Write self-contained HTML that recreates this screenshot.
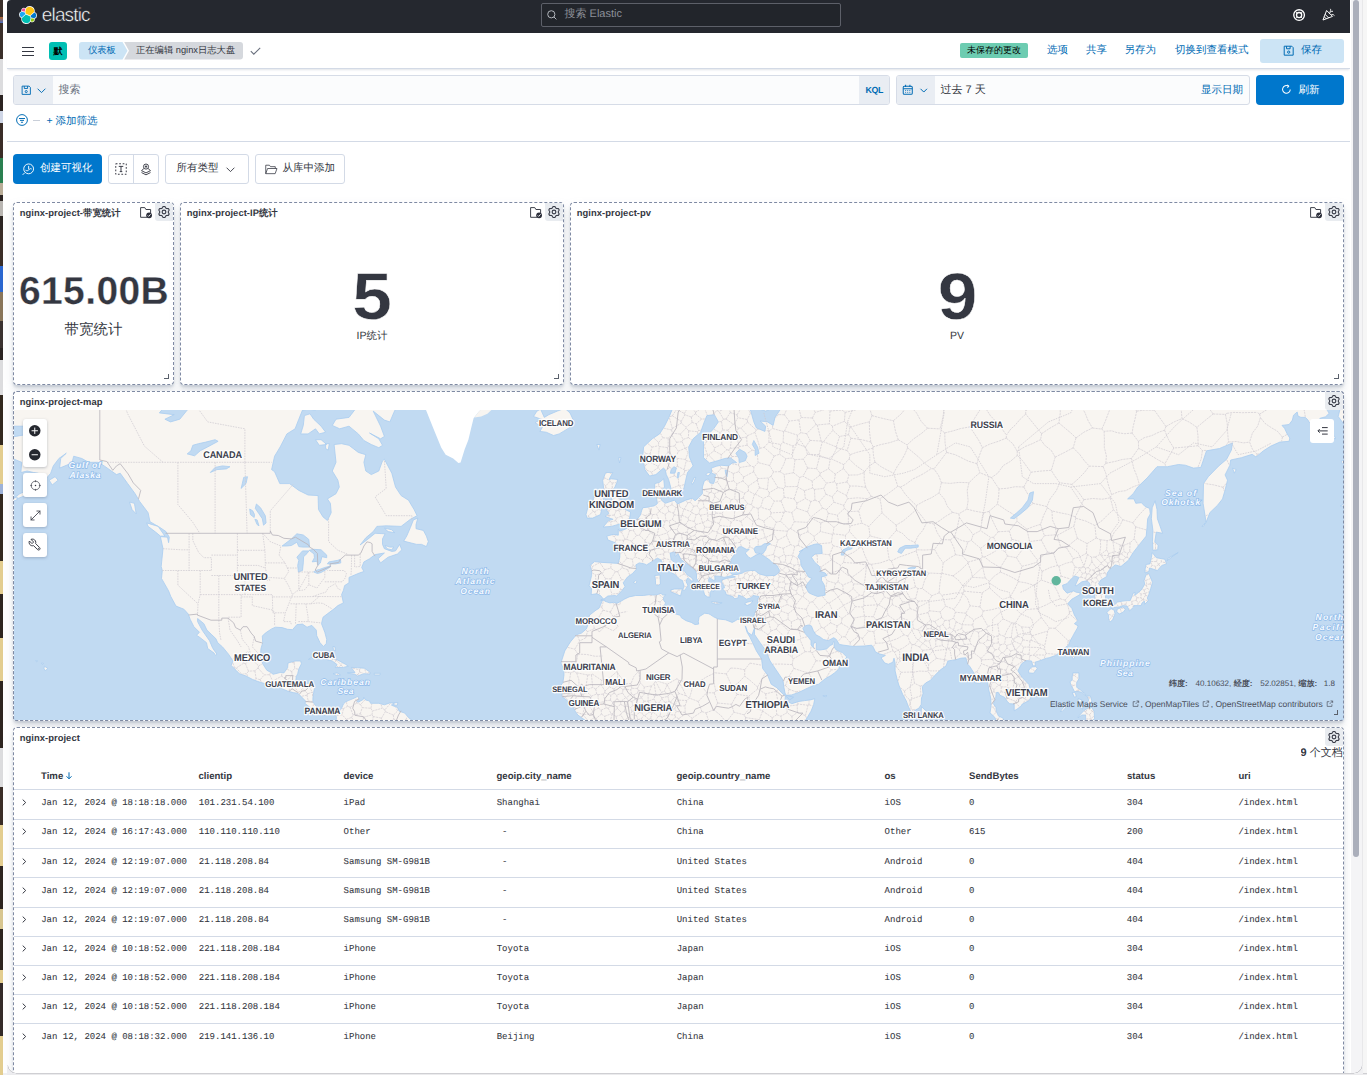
<!DOCTYPE html>
<html lang="zh">
<head>
<meta charset="utf-8">
<title>nginx日志大盘 - Elastic</title>
<style>
*{box-sizing:border-box;margin:0;padding:0}
html,body{width:1367px;height:1075px;overflow:hidden;background:#fff}
body{position:relative;font-family:"Liberation Sans",sans-serif;color:#343741;font-size:10.5px;line-height:1;text-rendering:geometricPrecision}
svg text{text-rendering:geometricPrecision}
.abs{position:absolute;white-space:nowrap}
.k{display:inline-block;width:1em;text-align:center;font-style:normal}
.blue{color:#006bb4}
svg{display:block;overflow:visible}
#strip{position:absolute;left:0;top:0;width:3px;height:1075px;background:linear-gradient(#3a2f2a 0px,#3a2f2a 17px,#b5652a 17px,#4a6fc0 23px,#3a2f2a 23px,#3a2f2a 59px,#dcdcde 59px,#dcdcde 95px,#2b2321 95px,#2b2321 111px,#cfd6e6 111px,#cfd6e6 123px,#3a2d27 123px,#3a2d27 158px,#2a8050 158px,#2a8050 183px,#b9ad98 183px,#b9ad98 195px,#2b2422 195px,#2b2422 201px,#b9b6b2 201px,#b9b6b2 216px,#2b2422 216px,#2b2422 230px,#3a2d27 230px,#3a2d27 266px,#2a66cf 266px,#2a66cf 292px,#8a765a 292px,#8a765a 321px,#3b3230 321px,#3b3230 348px,#2b2422 348px,#2b2422 360px,#dcdcde 360px,#dcdcde 395px,#33291f 395px,#33291f 445px,#e3cd8f 445px,#e3cd8f 484px,#9db2d8 484px,#9db2d8 494px,#33291f 494px,#33291f 561px,#e3cd8f 561px,#e3cd8f 594px,#2e2520 594px,#2e2520 638px,#e3cd8f 638px,#e3cd8f 681px,#2e2520 681px,#2e2520 748px,#dcdcde 748px,#dcdcde 787px,#3a2d27 787px,#3a2d27 825px,#e3cd8f 825px,#e3cd8f 866px,#2e2520 866px,#2e2520 909px,#d8c690 909px,#d8c690 929px,#2e2520 929px,#2e2520 970px,#e3cd8f 970px,#e3cd8f 983px,#332a28 983px,#332a28 1036px,#e3cd8f 1036px,#e3cd8f 1075px)}
#hdr{position:absolute;left:7px;top:0;width:1343px;height:33px;background:#25282f;border-top-left-radius:4px}
#nav{position:absolute;left:7px;top:33px;width:1343px;height:36px;background:#fff;border-bottom:1px solid #d3dae6;box-shadow:0 2px 2px -1px rgba(152,162,179,.3)}
#main{position:absolute;left:7px;top:68px;width:1343px;height:1007px;background:#fafbfd;z-index:-1}
#qline{position:absolute;left:7px;top:141px;width:1343px;height:1px;background:#d3dae6}
#sb{position:absolute;left:1350px;top:0;width:12.5px;height:1075px;background:#f4f4f6;border-left:1px solid #fff}
#wr{position:absolute;left:1362px;top:0;width:5px;height:1075px;background:#f6f6f6;border-left:1px solid #e8e8ea}
#wb{position:absolute;left:7px;top:1073px;width:1360px;height:2px;background:#ebebed;border-top:1px solid #cfcfd3}
#wbl{position:absolute;left:3px;top:1073px;width:4px;height:2px;background:#efeff1}
.wc{position:absolute;top:1065px;width:8.5px;height:8.5px}
#sbt{position:absolute;left:1353px;top:0;width:6px;height:857px;background:#abafbb;border-radius:3px}
.panel{position:absolute;background:#fff;border:1px dashed #7f8aa3;border-radius:4px;box-shadow:0 6px 12px -1px rgba(152,162,179,.25),0 4px 4px -1px rgba(152,162,179,.25),0 2px 2px 0 rgba(152,162,179,.25)}
.ptitle{position:absolute;left:5.8px;top:4.5px;font-weight:bold;font-size:9.4px;letter-spacing:.05px;color:#343741;white-space:nowrap}
.gearbg{position:absolute;top:0;width:18px;height:17.7px;background:#e9ecf0;border-radius:0 3px 0 3px}
.ico{position:absolute}
.rz{position:absolute;width:5px;height:5px;border-right:1.3px solid #5a606b;border-bottom:1.3px solid #5a606b}
.big{position:absolute;font-weight:bold;color:#343741;white-space:nowrap;text-align:center;-webkit-text-stroke:.5px #fff}
.inp{position:absolute;background:#fbfcfd;border:1px solid #d6dce7;border-radius:3px}
.btnw{position:absolute;background:#fff;border:1px solid #d3dae6;border-radius:3px}
table{border-collapse:collapse}
.th{position:absolute;top:771.5px;font-weight:bold;font-size:9.6px;white-space:nowrap;color:#343741}
.row{position:absolute;left:14px;width:1329px;height:1px;background:#d3dae6}
.c{position:absolute;font-family:"Liberation Mono",monospace;font-size:9px;white-space:nowrap;color:#343741;-webkit-text-stroke:.07px #343741}
.chev{position:absolute;left:22px}
#mapwrap{position:absolute;left:14px;top:410px;width:1330px;height:310px;overflow:hidden;background:#c1daf2}
.cl{font-family:"Liberation Sans",sans-serif;font-weight:bold;fill:#3c3f4d;text-anchor:middle;paint-order:stroke;stroke:rgba(255,255,255,.92);stroke-width:2.6px;stroke-linejoin:round;letter-spacing:-.1px}
.ol{font-family:"Liberation Sans",sans-serif;font-style:italic;font-weight:bold;fill:#f4f9ff;text-anchor:middle;paint-order:stroke;stroke:#8fbbea;stroke-width:1.3px;letter-spacing:1px}
.mc{top:679px;font-size:8.05px;line-height:9px;color:#4a4e5a}
.ma{top:699px;font-size:8.4px;line-height:10px;color:#4a4e5a}
.mbtn{position:absolute;left:35px;width:24px;background:#fff;border-radius:3px;box-shadow:0 1px 3px rgba(80,90,110,.35)}
</style>
</head>
<body>
<div id="strip"></div>
<div id="main"></div>

<!-- ================= dark header ================= -->
<div id="hdr"></div>
<svg class="ico" style="left:19px;top:6px" width="18" height="18" viewBox="0 0 32 32">
  <path d="M32 16.77a6.3 6.3 0 0 0-4.2-5.96 9.1 9.1 0 0 0 .17-1.72A9.1 9.1 0 0 0 11.5 3.8 4.83 4.83 0 0 0 4 7.6c0 .6.1 1.16.3 1.7A6.36 6.36 0 0 0 0 15.26a6.32 6.32 0 0 0 4.2 5.98 9 9 0 0 0-.15 1.7 9.07 9.07 0 0 0 16.45 5.28 4.8 4.8 0 0 0 7.5-3.82c0-.6-.1-1.16-.3-1.7A6.36 6.36 0 0 0 32 16.77" fill="#fff"/>
  <path d="M12.58 13.79l7 3.2 7.07-6.2a7.85 7.85 0 0 0-14.2-5.9l-1.17 6.1 1.3 2.8z" fill="#fec514"/>
  <path d="M5.33 21.22a7.96 7.96 0 0 0 14.3 5.95l1.17-6.05-1.56-2.97-7.03-3.2-6.88 6.27z" fill="#00bfb3"/>
  <path d="M5.29 9.1l4.8 1.14 1.05-5.46a3.8 3.8 0 0 0-5.85 4.32" fill="#f04e98"/>
  <path d="M4.87 10.24a5.35 5.35 0 0 0-.05 10.1l6.73-6.08-1.23-2.64-5.45-1.38z" fill="#1ba9f5"/>
  <path d="M20.87 27.18a3.78 3.78 0 0 0 5.84-4.3l-4.8-1.12-1.04 5.42z" fill="#93c90e"/>
  <path d="M21.85 20.5l5.28 1.23a5.38 5.38 0 0 0 .06-10.12l-6.9 6.05 1.56 2.84z" fill="#07c"/>
</svg>
<div class="abs" style="left:41.8px;top:5.5px;font-size:19px;color:#fff;letter-spacing:-.85px;line-height:20px;-webkit-text-stroke:.45px #25282f">elastic</div>
<div class="abs" style="left:541px;top:3px;width:300px;height:24px;border:1px solid #5d6069;border-radius:2px;background:#22252b"></div>
<svg class="ico" style="left:546.5px;top:9.5px" width="10" height="10" viewBox="0 0 10 10" fill="none" stroke="#c2c5cc" stroke-width=".9"><circle cx="4.3" cy="4.3" r="3.6"/><path d="M6.9 6.9l2.5 2.5"/></svg>
<div class="abs" style="left:564.5px;top:8.5px;font-size:11px;color:#8d9099"><i class="k">搜</i><i class="k">索</i> Elastic</div>
<svg class="ico" style="left:1292.9px;top:8.9px" width="12.2" height="12.2" viewBox="0 0 16 16" fill="none" stroke="#fff" stroke-width="1.75"><circle cx="8" cy="8" r="7"/><circle cx="8" cy="8" r="3.4"/><path d="M3.1 3.1l2.500 2.500M12.9 3.1l-2.500 2.500M3.1 12.9l2.500-2.500M12.9 12.9l-2.500-2.500" stroke-width="1.1"/></svg>
<svg class="ico" style="left:1322px;top:8px" width="13" height="13" viewBox="0 0 16 16" fill="none" stroke="#fff" stroke-width="1.2" stroke-linecap="round" stroke-linejoin="round"><path d="M5.5 3.5L1.2 14.8l11.3-4.3z"/><path d="M4 8l4 4M3 11l2 2"/><path d="M9 7c.5-2 2-3 4-3M10.5 1.5c.5 1 .3 2-.5 3M12 8c1-.3 2 0 3 1"/></svg>

<!-- ================= nav bar ================= -->
<div id="nav"></div>
<div class="abs" style="left:22px;top:46.6px;width:12px;height:1.3px;background:#343741;box-shadow:0 4px 0 #343741,0 8px 0 #343741"></div>
<div class="abs" style="left:49px;top:41.5px;width:18px;height:18px;border-radius:3px;background:#00bfb3;color:#000;font-size:9px;font-weight:bold;text-align:center;line-height:18px"><i class="k">默</i></div>
<svg class="ico" style="left:79px;top:42px" width="166" height="17.5" viewBox="0 0 166 17.5">
  <path d="M45.2 0H161a3 3 0 0 1 3 3v11.5a3 3 0 0 1-3 3H45.200l4.800-8.750z" fill="#d5d8dd"/>
  <path d="M3 0H43.5l5 8.750-5 8.750H3a3 3 0 0 1-3-3V3a3 3 0 0 1 3-3z" fill="#cce4f5"/>
</svg>
<div class="abs blue" style="left:88px;top:45px;font-size:9.3px;line-height:11px"><i class="k">仪</i><i class="k">表</i><i class="k">板</i></div>
<div class="abs" style="left:136px;top:45px;font-size:9.3px;line-height:11px;color:#343741"><i class="k">正</i><i class="k">在</i><i class="k">编</i><i class="k">辑</i> nginx<i class="k">日</i><i class="k">志</i><i class="k">大</i><i class="k">盘</i></div>
<svg class="ico" style="left:249.5px;top:47px" width="11" height="8" viewBox="0 0 11 8" fill="none" stroke="#69707d" stroke-width="1.1"><path d="M.8 4.2l3 3L10.2.8"/></svg>
<div class="abs" style="left:960px;top:43px;width:68px;height:14.5px;border-radius:2px;background:#6dccb1;color:#000;font-size:9px;line-height:14.5px;text-align:center"><i class="k">未</i><i class="k">保</i><i class="k">存</i><i class="k">的</i><i class="k">更</i><i class="k">改</i></div>
<div class="abs blue" style="left:1047px;top:43.5px;font-size:10.5px;line-height:12px"><i class="k">选</i><i class="k">项</i></div>
<div class="abs blue" style="left:1086px;top:43.5px;font-size:10.5px;line-height:12px"><i class="k">共</i><i class="k">享</i></div>
<div class="abs blue" style="left:1124.5px;top:43.5px;font-size:10.5px;line-height:12px"><i class="k">另</i><i class="k">存</i><i class="k">为</i></div>
<div class="abs blue" style="left:1175px;top:43.5px;font-size:10.5px;line-height:12px"><i class="k">切</i><i class="k">换</i><i class="k">到</i><i class="k">查</i><i class="k">看</i><i class="k">模</i><i class="k">式</i></div>
<div class="abs" style="left:1260px;top:38.5px;width:84px;height:24px;border-radius:3px;background:#cce4f5"></div>
<svg class="ico" style="left:1283.2px;top:44.9px" width="11.4" height="11.4" viewBox="0 0 16 16" fill="none" stroke="#006bb4" stroke-width="1.4"><path d="M1.7 1.7h10.6l2 2v10.6H1.7z"/><path d="M5 1.7v3.6h5V1.7"/><circle cx="8" cy="10" r="1.6"/></svg>
<div class="abs blue" style="left:1301px;top:43.5px;font-size:10.5px;line-height:12px"><i class="k">保</i><i class="k">存</i></div>

<!-- ================= query bar ================= -->
<div class="inp" style="left:13px;top:75px;width:877px;height:30px"></div>
<div class="abs" style="left:14px;top:76px;width:39px;height:28px;background:#e9edf3;border-radius:2px 0 0 2px"></div>
<svg class="ico" style="left:20.5px;top:84.5px" width="10.5" height="10.5" viewBox="0 0 16 16" fill="none" stroke="#006bb4" stroke-width="1.4"><path d="M1.7 1.7h10.6l2 2v10.6H1.7z"/><path d="M5 1.7v3.6h5V1.7"/><circle cx="8" cy="10" r="1.6"/></svg>
<svg class="ico" style="left:37px;top:87.5px" width="9" height="5.5" viewBox="0 0 9 5.5" fill="none" stroke="#006bb4" stroke-width=".95"><path d="M.6.7l3.9 3.9L8.4.7"/></svg>
<div class="abs" style="left:58.5px;top:83.5px;font-size:11px;line-height:13px;color:#69707d"><i class="k">搜</i><i class="k">索</i></div>
<div class="abs" style="left:859px;top:76px;width:30px;height:28px;background:#e9edf3;border-radius:0 2px 2px 0"></div>
<div class="abs blue" style="left:865.5px;top:85.7px;font-size:8.8px;font-weight:bold;letter-spacing:-.35px">KQL</div>
<div class="inp" style="left:896px;top:75px;width:354px;height:30px"></div>
<div class="abs" style="left:897px;top:76px;width:38px;height:28px;background:#e9edf3;border-radius:2px 0 0 2px"></div>
<svg class="ico" style="left:902px;top:84px" width="11.5" height="11.5" viewBox="0 0 16 16" fill="none" stroke="#006bb4" stroke-width="1.4"><rect x="1.7" y="3" width="12.6" height="11.3" rx="1.5"/><path d="M1.7 6.5h12.6M5 1v3.2M11 1v3.2"/><path d="M4.5 9h1.2M7.4 9h1.2M10.3 9h1.2M4.5 11.6h1.2M7.4 11.6h1.2M10.3 11.6h1.2" stroke-width="1.3"/></svg>
<svg class="ico" style="left:920px;top:88px" width="7.5" height="5" viewBox="0 0 9 5.5" fill="none" stroke="#006bb4" stroke-width="1.2"><path d="M.6.7l3.9 3.9L8.4.7"/></svg>
<div class="abs" style="left:940.5px;top:84px;font-size:11px;line-height:13px;color:#343741"><i class="k">过</i><i class="k">去</i> 7 <i class="k">天</i></div>
<div class="abs blue" style="left:1201px;top:84px;font-size:10.5px;line-height:13px"><i class="k">显</i><i class="k">示</i><i class="k">日</i><i class="k">期</i></div>
<div class="abs" style="left:1256px;top:74.5px;width:88px;height:30.5px;border-radius:4px;background:#0077cc"></div>
<svg class="ico" style="left:1280.8px;top:84.3px" width="10.8" height="10.8" viewBox="0 0 16 16" fill="none" stroke="#fff" stroke-width="1.5"><path d="M13.7 8A5.7 5.7 0 1 1 10.9 3.1"/><path d="M9.2 1.2l2.3 2-2 2.3" stroke-linejoin="round"/></svg>
<div class="abs" style="left:1298.5px;top:83.5px;font-size:10.5px;line-height:13px;color:#fff"><i class="k">刷</i><i class="k">新</i></div>
<svg class="ico" style="left:16px;top:114px" width="12" height="12" viewBox="0 0 16 16" fill="none" stroke="#006bb4" stroke-width="1.3"><circle cx="8" cy="8" r="7.2"/><path d="M4 6h8M5.3 8.5h5.4M6.6 11h2.8"/></svg>
<div class="abs" style="left:33px;top:119.5px;width:7px;height:1px;background:#c9cfd9"></div>
<div class="abs blue" style="left:46.5px;top:115px;font-size:10.5px;line-height:13px">+ <i class="k">添</i><i class="k">加</i><i class="k">筛</i><i class="k">选</i></div>
<div id="qline"></div>

<!-- ================= toolbar ================= -->
<div class="abs" style="left:13px;top:154px;width:89px;height:30px;border-radius:4px;background:#0077cc"></div>
<svg class="ico" style="left:22px;top:162.5px" width="12.5" height="12.5" viewBox="0 0 16 16" fill="none" stroke="#fff" stroke-width="1.2"><circle cx="8.5" cy="7.5" r="6.3"/><path d="M3.6 12.4L.8 15.2"/><path d="M5 9.5c1.5.8 3 .5 4-1s2-1.5 3-1M8.5 4.2v3.3" stroke-linecap="round"/></svg>
<div class="abs" style="left:40px;top:160.5px;font-size:10.5px;line-height:14px;color:#fff"><i class="k">创</i><i class="k">建</i><i class="k">可</i><i class="k">视</i><i class="k">化</i></div>
<div class="btnw" style="left:108px;top:154px;width:50.5px;height:30px"></div>
<div class="abs" style="left:133px;top:155px;width:1px;height:28px;background:#d3dae6"></div>
<svg class="ico" style="left:115px;top:163px" width="12" height="12" viewBox="0 0 16 16" fill="none" stroke="#343741" stroke-width="1.3"><path d="M1 1h14v14H1z" stroke-dasharray="2.3 2.3"/><path d="M5 4.5h6M8 4.5v7M6.3 11.5h3.4"/></svg>
<svg class="ico" style="left:140px;top:162.5px" width="12" height="13" viewBox="0 0 16 17" fill="none" stroke="#343741" stroke-width="1.2"><circle cx="8" cy="4.6" r="3.4"/><circle cx="8" cy="4.6" r="1" fill="#343741"/><path d="M5.2 7.2L2 10l6 3 6-3-3.2-2.8M2 12.6l6 3 6-3"/></svg>
<div class="btnw" style="left:165px;top:154px;width:83.5px;height:30px"></div>
<div class="abs" style="left:176.5px;top:160.5px;font-size:10.5px;line-height:14px"><i class="k">所</i><i class="k">有</i><i class="k">类</i><i class="k">型</i></div>
<svg class="ico" style="left:226px;top:166.5px" width="9" height="5.5" viewBox="0 0 9 5.5" fill="none" stroke="#343741" stroke-width=".9"><path d="M.6.7l3.9 3.9L8.4.7"/></svg>
<div class="btnw" style="left:255px;top:154px;width:90px;height:30px"></div>
<svg class="ico" style="left:264.5px;top:163.5px" width="12.5" height="10.5" viewBox="0 0 17 14" fill="none" stroke="#343741" stroke-width="1.05" stroke-linejoin="round"><path d="M1 13V1.5h5l1.5 2H14V6"/><path d="M1 13l2.5-7H16.3l-2.5 7z"/></svg>
<div class="abs" style="left:282.5px;top:160.5px;font-size:10.5px;line-height:14px"><i class="k">从</i><i class="k">库</i><i class="k">中</i><i class="k">添</i><i class="k">加</i></div>

<!-- ================= metric panels ================= -->
<div class="panel" style="left:13px;top:202px;width:161px;height:183px">
  <div class="ptitle">nginx-project-<i class="k">带</i><i class="k">宽</i><i class="k">统</i><i class="k">计</i></div>
  <div class="gearbg" style="left:141px"></div>
</div>
<div class="panel" style="left:180px;top:202px;width:384px;height:183px">
  <div class="ptitle">nginx-project-IP<i class="k">统</i><i class="k">计</i></div>
  <div class="gearbg" style="left:364px"></div>
</div>
<div class="panel" style="left:570px;top:202px;width:774px;height:183px">
  <div class="ptitle">nginx-project-pv</div>
  <div class="gearbg" style="left:754px"></div>
</div>
<svg width="0" height="0" style="position:absolute"><defs>
  <g id="gear" fill="none" stroke="#3a3d49" stroke-width="1.1" stroke-linejoin="round"><path d="M11.33 7.00L11.33 6.70L11.34 6.39L11.47 6.05L11.90 5.60L12.13 5.13L12.07 4.74L11.92 4.39L11.72 4.05L11.49 3.74L11.18 3.49L10.66 3.46L10.06 3.60L9.70 3.55L9.43 3.40L9.17 3.25L8.90 3.10L8.64 2.94L8.41 2.65L8.23 2.06L7.95 1.62L7.58 1.48L7.19 1.43L6.81 1.43L6.42 1.48L6.05 1.62L5.77 2.06L5.59 2.65L5.36 2.94L5.10 3.10L4.84 3.25L4.57 3.40L4.30 3.55L3.94 3.60L3.34 3.46L2.82 3.49L2.51 3.74L2.28 4.05L2.08 4.39L1.93 4.74L1.87 5.13L2.10 5.60L2.53 6.05L2.66 6.39L2.67 6.70L2.67 7.00L2.67 7.30L2.66 7.61L2.53 7.95L2.10 8.40L1.87 8.87L1.93 9.26L2.08 9.61L2.28 9.95L2.51 10.26L2.82 10.51L3.34 10.54L3.94 10.40L4.30 10.45L4.57 10.60L4.83 10.75L5.10 10.90L5.36 11.06L5.59 11.35L5.77 11.94L6.05 12.38L6.42 12.52L6.81 12.57L7.19 12.57L7.58 12.52L7.95 12.38L8.23 11.94L8.41 11.35L8.64 11.06L8.90 10.90L9.17 10.75L9.43 10.60L9.70 10.45L10.06 10.40L10.66 10.54L11.18 10.51L11.49 10.26L11.72 9.95L11.92 9.61L12.07 9.26L12.13 8.87L11.90 8.40L11.47 7.95L11.34 7.61L11.33 7.30Z"/><circle cx="7" cy="7" r="1.85" stroke-width="1.15"/></g>
  <g id="fchk" fill="none" stroke="#343741" stroke-width=".95" stroke-linejoin="round"><path d="M7.3 10.3H.6V.6h4.2l1.1 1.9h4.7v4"/><circle cx="9.1" cy="8.3" r="2.9" fill="#2b2e3a" stroke="none"/><path d="M7.7 8.4l1 1 1.9-2.1" stroke="#fff" stroke-width=".9"/></g>
</defs></svg>
<svg class="ico" style="left:140.1px;top:206.7px" width="12" height="12" viewBox="0 0 12 12"><use href="#fchk"/></svg>
<svg class="ico" style="left:157.1px;top:205.0px" width="14" height="14" viewBox="0 0 14 14"><use href="#gear"/></svg>
<svg class="ico" style="left:530.1px;top:206.7px" width="12" height="12" viewBox="0 0 12 12"><use href="#fchk"/></svg>
<svg class="ico" style="left:547.1px;top:205.0px" width="14" height="14" viewBox="0 0 14 14"><use href="#gear"/></svg>
<svg class="ico" style="left:1310.1px;top:206.7px" width="12" height="12" viewBox="0 0 12 12"><use href="#fchk"/></svg>
<svg class="ico" style="left:1327.1px;top:205.0px" width="14" height="14" viewBox="0 0 14 14"><use href="#gear"/></svg>
<div class="rz" style="left:164px;top:373.5px"></div>
<div class="rz" style="left:554px;top:373.5px"></div>
<div class="rz" style="left:1334px;top:373.5px"></div>

<div class="big" style="left:14px;top:269.5px;width:159px;font-size:39px;line-height:44px;letter-spacing:.4px;padding-left:1px;-webkit-text-stroke:.3px #fff">615.00B</div>
<div class="abs" style="left:14px;top:321.5px;width:159px;text-align:center;font-size:14.5px;line-height:17px"><i class="k">带</i><i class="k">宽</i><i class="k">统</i><i class="k">计</i></div>
<div class="big" style="left:181px;top:257.5px;width:382px;font-size:66px;line-height:76px;transform:scaleX(1.08)">5</div>
<div class="abs" style="left:181px;top:329.500px;width:382px;text-align:center;font-size:10.500px;line-height:13px">IP<i class="k">统</i><i class="k">计</i></div>
<div class="big" style="left:571.500px;top:257.5px;width:771px;font-size:66px;line-height:76px;transform:scaleX(1.08)">9</div>
<div class="abs" style="left:571.500px;top:329.500px;width:771px;text-align:center;font-size:10.500px;line-height:13px">PV</div>

<!-- ================= map panel ================= -->
<div class="panel" style="left:13px;top:391px;width:1331px;height:330px">
  <div class="ptitle">nginx-project-map</div>
  <div class="gearbg" style="left:1311px"></div>
</div>
<svg class="ico" style="left:1327.1px;top:394.0px" width="14" height="14" viewBox="0 0 14 14"><use href="#gear"/></svg>
<div id="mapwrap">
<svg id="mapsvg" width="1330" height="310" viewBox="0 0 1330 310">
<rect width="1330" height="310" fill="#c1daf2"/>
<defs><g id="world">
<path d="M-15.0 6.5L-7.2 -25.3L27.7 -51.5L85.8 -32.6L134.1 -36.9L182.5 -21.2L208.5 -16.2L256.9 -16.2L282.9 -26.3L292.2 -26.3L305.3 -21.2L307.1 -11.2L301.5 0.1L294.1 -0.8L288.5 0.1L284.8 9.2L281.1 18.8L272.9 23.9L266.2 36.9L260.6 46.2L257.6 59.6L260.6 61.7L265.8 73.6L275.5 73.6L284.8 80.4L294.1 85.0L304.1 85.6L304.5 99.6L309.0 106.9L313.4 110.5L317.2 102.7L316.4 93.3L313.4 88.9L322.0 83.7L325.3 77.0L323.9 70.2L318.3 61.0L322.0 52.3L320.1 34.5L327.6 33.7L335.0 35.3L344.3 42.4L351.8 44.7L349.9 52.3L351.8 61.0L357.3 64.6L364.8 61.0L368.5 50.8L370.4 49.3L377.8 63.2L381.5 77.0L387.1 85.6L394.5 90.2L400.1 99.6L403.1 105.7L396.4 109.3L387.1 116.4L372.2 115.8L362.9 116.4L359.2 121.6L351.8 127.8L346.2 134.9L353.6 129.4L361.1 123.3L371.1 123.8L368.5 128.9L368.5 134.4L370.4 138.7L377.8 141.4L381.5 140.9L385.6 134.4L387.8 139.8L383.4 144.0L374.1 147.2L366.6 152.9L364.0 148.8L370.4 143.0L361.1 144.6L355.5 148.8L349.9 151.9L347.7 157.5L349.9 161.5L345.4 163.0L335.0 167.4L335.0 172.8L330.6 175.6L329.4 180.4L327.6 184.6L329.4 192.9L323.9 195.6L320.1 198.8L313.1 204.1L309.0 207.2L307.5 213.7L310.8 222.3L312.7 229.4L312.3 233.6L309.4 236.4L306.0 232.7L302.7 225.6L302.3 220.1L297.8 215.4L293.0 217.2L288.5 214.1L282.9 214.6L278.5 219.7L273.6 219.3L268.1 217.6L261.4 217.2L257.6 218.9L251.3 223.1L248.3 226.1L248.7 232.7L246.9 238.9L246.5 247.8L248.7 253.8L252.8 260.2L256.9 262.5L259.1 264.3L266.2 262.5L269.9 262.9L273.6 257.8L274.0 253.0L281.1 251.0L286.7 251.0L287.4 253.8L284.8 259.0L283.7 263.7L282.2 266.8L281.8 270.7L279.6 273.0L284.8 273.4L290.4 273.4L296.0 273.4L300.8 276.5L299.7 282.3L298.9 288.0L298.9 291.8L301.5 295.6L305.3 299.3L309.0 300.1L313.1 298.2L318.3 297.8L322.4 300.5L324.2 303.1L327.6 298.2L329.4 294.0L331.7 291.8L334.3 290.6L342.5 287.2L343.6 286.1L345.1 289.1L342.8 291.4L344.3 292.2L349.2 289.5L349.9 287.2L351.4 289.9L355.5 291.0L356.6 293.3L364.8 293.3L370.4 294.8L375.9 292.9L379.7 292.9L377.4 295.2L383.4 297.4L385.2 301.2L390.8 303.1L394.5 307.6L398.3 310.6L405.7 325.5L320.1 325.5L322.4 308.0L322.0 305.0L319.4 302.0L314.6 299.3L311.2 305.7L307.1 304.6L302.3 302.3L299.3 301.2L294.8 296.3L291.1 293.7L291.5 291.0L286.7 286.1L284.1 283.4L279.2 282.6L273.6 281.1L267.3 278.4L262.5 272.6L258.0 271.9L251.3 273.8L243.9 271.5L238.7 269.5L232.0 266.0L225.3 263.7L222.3 260.5L217.1 255.4L219.0 251.0L214.5 244.2L208.5 236.9L203.7 232.7L201.8 228.6L197.8 224.8L192.9 220.1L189.9 213.7L183.6 208.5L183.6 211.6L188.1 220.1L191.1 224.4L195.5 230.7L198.5 237.7L200.0 240.1L203.0 244.2L201.5 245.4L200.0 243.0L193.7 238.5L192.5 232.7L186.2 227.7L182.5 225.2L185.5 222.3L179.9 216.7L176.2 209.4L174.3 204.1L169.9 199.2L162.0 196.1L156.8 186.5L154.6 180.9L147.5 168.4L148.3 160.5L147.2 156.5L149.0 138.7L146.4 126.6L153.5 127.2L154.6 132.7L155.3 127.2L152.0 121.6L146.0 117.5L136.0 111.7L134.1 102.7L125.6 91.4L121.1 83.7L113.7 73.6L106.2 63.2L102.5 64.6L90.2 55.9L83.9 52.3L74.6 52.3L67.9 48.5L59.7 46.2L57.9 53.0L45.6 58.1L46.7 48.5L52.3 43.2L44.9 48.5L39.3 55.9L36.7 63.2L28.1 73.6L20.7 80.4L11.4 85.6L2.8 88.9L-2.8 90.2L5.8 83.7L13.2 80.4L20.7 72.3L24.4 63.2L19.6 62.5L13.2 61.0L6.9 62.5L7.7 52.3L-1.6 48.5L-5.4 40.8L-7.2 32.9L-2.8 27.2L11.4 24.7L11.4 16.2L3.9 16.2L-5.0 16.2L-9.1 14.5ZM320.1 -36.9L336.9 -6.4L340.6 0.1L335.0 7.4L322.0 9.2L318.3 15.4L325.7 18.8L335.0 16.2L344.3 23.9L349.9 30.5L357.3 34.5L364.8 37.7L368.5 35.3L364.8 28.8L355.5 23.0L366.6 28.8L370.4 26.4L366.6 16.2L359.2 1.1L370.4 10.1L375.9 11.9L379.7 2.9L382.3 -2.7L379.7 -16.2L357.3 -42.4ZM290.4 5.6L296.0 3.8L299.7 9.2L307.1 16.2L311.6 22.2L305.3 23.9L301.5 18.8L294.1 23.9L286.7 23.9L289.3 15.4ZM301.5 29.7L307.1 29.7L312.7 34.5L305.3 35.3ZM311.6 33.7L315.3 33.7L314.2 40.1L311.6 38.5ZM526.6 -0.8L530.3 7.4L534.8 4.7L543.3 1.1L550.8 -1.7L556.0 2.9L559.7 11.0L555.2 17.9L545.2 23.9L539.6 25.5L532.2 22.2L525.9 21.4L528.5 17.1L521.0 12.7L527.3 9.2L519.5 6.5L522.9 1.1ZM658.7 -1.7L654.9 7.4L650.5 16.2L645.6 23.9L638.2 28.8L629.6 36.9L628.9 44.7L629.6 52.3L630.8 59.6L635.6 66.0L641.9 64.6L649.4 58.1L651.2 59.6L652.3 64.6L654.6 69.5L657.2 79.0L657.9 84.3L663.1 84.3L663.9 81.0L669.8 79.0L671.7 70.2L673.5 62.5L679.1 55.9L675.4 47.0L674.7 36.9L679.1 28.8L686.6 22.2L690.3 11.9L692.9 5.6L700.3 4.7L704.4 11.9L699.6 18.8L694.0 24.7L689.5 30.5L689.5 40.8L689.5 47.7L695.5 53.0L703.3 50.8L710.7 48.5L716.3 47.7L722.6 52.6L718.2 53.0L714.5 55.9L707.0 55.2L702.2 56.3L697.3 58.1L697.7 63.2L701.4 64.6L700.7 70.2L699.6 73.6L695.9 72.9L694.4 68.8L690.3 70.9L688.4 77.0L688.4 83.7L684.7 87.6L681.0 90.8L678.4 88.2L671.7 90.2L663.5 94.0L660.5 90.2L654.9 92.1L651.2 93.3L647.5 90.2L646.8 86.9L648.6 83.0L648.6 79.0L650.5 77.0L649.7 68.8L645.6 72.3L640.8 73.6L640.4 80.4L641.2 83.7L642.3 86.9L643.4 93.3L643.0 94.0L640.1 95.9L636.3 96.5L634.5 97.1L628.9 97.7L627.8 100.2L626.3 105.1L623.3 109.3L619.6 111.1L616.3 112.3L615.9 116.4L611.0 119.3L605.8 121.0L604.3 119.3L604.3 125.2L599.1 124.4L592.8 126.1L593.9 130.0L599.9 132.2L602.1 133.3L605.8 139.8L605.8 147.2L604.3 153.4L596.2 152.9L588.0 152.4L580.5 151.6L576.1 155.4L577.6 160.5L577.6 165.5L575.0 176.1L577.6 178.0L577.2 184.6L582.8 183.7L586.5 185.5L589.5 189.2L589.8 189.7L588.0 191.5L585.0 198.3L582.0 200.1L575.7 205.0L573.8 209.4L574.2 214.1L572.4 218.9L567.5 223.1L562.3 224.8L556.4 231.9L550.8 240.9L546.9 253.0L549.7 259.0L550.0 264.9L548.9 272.6L545.2 277.7L548.2 282.3L547.8 286.5L550.8 288.7L554.5 291.8L556.4 293.7L559.3 297.4L561.2 301.2L563.8 305.0L567.5 307.6L570.1 309.5L576.8 314.3L576.8 333.0L788.9 333.0L788.9 314.3L793.7 306.8L797.0 301.2L799.6 294.8L800.8 288.7L796.3 289.9L790.7 290.6L785.1 291.4L777.7 293.7L772.1 290.6L771.0 289.5L771.4 286.1L772.1 285.3L777.7 284.9L785.1 282.3L793.0 278.4L800.0 275.3L804.5 274.2L811.2 268.8L816.8 265.6L820.5 262.9L824.9 259.0L825.3 255.8L829.0 251.8L832.8 247.0L828.3 242.6L822.3 240.1L820.1 236.9L820.1 231.5L818.6 232.7L818.6 234.4L816.0 235.6L812.7 238.9L805.6 240.1L802.3 239.7L802.3 236.9L802.3 233.1L800.8 231.9L799.3 234.8L799.3 237.7L797.0 234.8L797.0 230.7L794.4 227.3L791.1 223.5L788.9 218.4L791.1 215.9L794.4 215.0L797.4 215.9L799.3 220.6L801.9 224.8L806.0 226.9L809.3 229.4L814.2 230.7L819.7 227.7L822.3 229.4L825.3 234.4L829.8 235.2L839.1 236.4L850.2 236.0L857.7 235.2L859.5 237.7L861.4 241.8L865.1 243.8L871.4 245.4L867.0 247.8L870.7 253.0L874.4 254.2L878.9 252.2L880.0 248.2L881.1 253.0L881.1 260.9L883.0 268.8L884.8 275.0L888.6 284.2L892.3 291.0L894.1 295.9L896.7 301.6L898.6 302.7L901.2 300.1L904.9 298.2L907.2 294.4L907.5 288.0L909.0 283.8L908.3 276.5L911.6 273.0L916.5 270.3L920.2 266.0L926.5 259.8L932.1 255.8L933.9 251.0L938.4 250.2L941.4 249.8L947.0 248.2L951.8 247.8L953.7 254.2L955.9 256.6L961.1 264.9L960.7 272.6L965.6 273.4L970.4 270.7L971.9 268.8L973.4 270.7L974.9 280.3L976.7 288.0L977.1 295.6L976.0 303.1L978.6 305.0L981.2 308.0L984.2 321.8L993.5 321.8L989.0 308.0L987.1 307.2L984.5 306.1L982.3 301.2L981.9 297.4L979.3 293.7L981.6 288.7L982.3 282.6L984.2 282.3L986.0 285.3L990.5 287.2L993.5 291.8L995.7 293.7L1000.2 294.0L1000.2 300.8L1002.8 299.3L1006.9 296.3L1008.3 294.0L1015.0 290.6L1016.5 288.0L1017.3 284.2L1016.5 280.3L1015.0 274.6L1012.8 272.3L1008.3 267.6L1006.5 264.9L1003.9 260.9L1006.5 255.8L1007.6 253.8L1012.1 250.6L1017.6 251.0L1018.8 255.8L1021.4 255.8L1021.0 252.2L1026.2 250.6L1032.5 248.2L1035.1 247.8L1041.8 245.4L1044.4 243.4L1049.6 238.9L1054.8 234.8L1055.2 232.7L1058.6 226.5L1059.7 224.4L1063.4 218.0L1064.1 215.9L1060.4 213.7L1063.8 210.7L1060.4 205.0L1057.8 198.3L1053.7 193.8L1057.8 189.2L1066.0 184.6L1066.4 182.7L1062.3 182.3L1059.7 180.9L1053.0 183.2L1049.3 179.0L1048.5 175.2L1053.0 173.7L1056.0 170.3L1060.4 165.9L1064.9 167.4L1061.2 175.6L1062.7 175.6L1067.9 171.8L1072.7 170.8L1075.3 172.8L1076.4 177.1L1074.6 179.9L1079.0 181.3L1081.3 182.7L1080.5 186.9L1080.9 191.5L1080.1 195.6L1084.6 195.6L1090.2 193.4L1091.7 189.2L1091.3 183.7L1088.3 178.5L1084.6 173.7L1086.5 170.3L1092.8 166.4L1093.2 163.0L1096.1 159.0L1101.3 154.9L1106.9 156.5L1114.4 150.3L1119.2 142.5L1125.5 134.4L1132.2 126.1L1133.0 117.5L1133.7 108.7L1136.3 103.9L1135.6 98.4L1131.1 96.5L1127.4 92.7L1121.8 93.3L1119.9 88.9L1113.6 88.9L1119.2 83.7L1123.7 77.0L1133.0 68.1L1143.0 56.7L1153.4 56.7L1164.6 54.5L1171.3 55.2L1179.5 58.1L1186.9 57.4L1192.5 40.8L1205.5 38.5L1218.5 32.9L1217.4 40.1L1212.6 49.3L1204.8 55.9L1194.3 66.7L1189.5 73.6L1189.1 93.3L1192.1 112.3L1195.8 102.7L1203.6 95.2L1208.5 88.9L1211.1 80.0L1213.5 70.2L1211.1 64.9L1215.9 55.2L1216.7 50.0L1227.4 47.7L1238.2 44.3L1242.0 47.0L1249.4 40.8L1256.8 36.1L1265.8 32.1L1275.1 31.3L1275.8 28.0L1273.2 23.9L1270.6 18.4L1268.0 15.4L1275.1 14.5L1278.4 10.1L1279.5 5.2L1283.2 2.0L1284.0 6.1L1287.0 7.4L1291.4 7.4L1294.0 10.1L1295.2 12.3L1300.4 16.2L1306.7 17.1L1305.9 8.3L1311.5 6.8L1315.2 3.3L1313.4 0.6L1313.4 -16.2L1242.7 -36.9L982.3 -99.2L759.1 -36.9L684.7 -36.9Z" fill="#f8f5f1" stroke="#a9cdf0" stroke-width="0.8" stroke-linejoin="round"/>
<path d="M411.7 -11.2L411.7 -0.8L415.7 9.2L419.5 18.8L423.6 28.8L427.3 37.7L431.7 44.7L439.2 48.5L444.4 53.0L446.6 52.6L450.7 39.3L454.4 29.7L457.0 18.8L459.6 8.3L464.5 2.0L468.2 -1.7L468.9 -11.2Z" fill="#ffffff"/>
<path d="M468.2 -1.7L464.5 2.0L460.4 7.4L467.1 6.5L473.4 3.8L478.2 -0.8L480.1 -11.2L468.9 -11.2Z" fill="#f8f5f1"/>
<path d="M731.2 -7.4L736.8 1.1L739.8 11.9L742.4 17.9L750.9 21.4L751.7 16.2L746.1 11.0L753.5 11.9L759.1 15.4L761.0 7.4L766.5 -0.8L772.1 -6.4L762.8 -3.6L751.7 1.1L740.5 -2.7ZM586.9 189.7L590.2 188.8L593.9 186.0L601.4 185.5L602.5 186.0L607.0 181.8L611.0 176.6L609.2 172.8L613.6 166.9L618.5 163.5L622.6 159.0L621.8 154.9L625.2 152.9L630.4 153.9L632.6 154.9L637.5 151.9L643.4 148.2L646.8 149.8L648.6 152.9L649.4 155.9L652.0 158.5L654.2 160.0L656.1 162.0L660.9 164.5L663.1 166.4L665.7 169.4L668.3 170.3L669.1 172.8L670.2 176.1L668.7 179.9L670.2 180.4L672.1 178.5L673.9 175.2L672.1 171.8L673.2 168.4L674.3 167.9L677.3 170.8L678.7 171.3L679.1 169.9L677.3 167.4L673.2 165.0L670.6 161.0L667.2 161.0L663.1 158.0L660.5 152.4L657.2 149.8L656.4 145.1L656.1 143.0L661.6 141.9L660.9 145.6L661.6 146.1L663.9 143.5L666.8 149.3L671.3 152.9L677.6 157.5L681.4 160.5L682.5 164.0L682.5 168.4L684.7 171.8L687.3 175.2L688.8 178.5L689.5 180.9L690.7 185.1L693.6 186.9L696.2 186.9L695.9 182.7L697.7 180.4L699.6 181.6L700.0 177.1L697.0 175.6L695.5 173.7L694.4 170.3L695.5 167.4L699.2 170.3L701.1 169.9L700.7 165.9L707.0 166.4L710.0 167.4L718.2 165.5L721.5 166.9L712.6 168.4L707.8 169.9L707.8 172.8L710.0 175.6L710.4 178.0L708.1 178.5L711.5 181.8L712.2 184.6L715.6 185.5L718.6 186.5L720.8 188.8L724.1 187.9L724.5 185.1L729.3 186.9L732.3 189.2L736.8 187.9L739.0 185.5L745.0 186.5L743.8 189.2L743.5 191.5L743.5 196.5L742.4 198.8L740.5 203.7L739.8 206.8L737.9 210.2L736.0 211.1L730.5 210.2L728.6 209.4L723.4 209.4L721.5 210.7L718.2 212.4L711.5 209.8L704.0 208.9L699.6 206.8L696.2 204.5L694.4 203.7L690.7 203.2L685.1 206.8L684.3 211.6L684.7 214.1L681.0 214.6L677.3 212.4L672.1 210.7L667.2 207.6L666.5 205.4L659.4 203.2L654.9 203.2L653.1 201.9L650.5 200.1L647.9 198.8L647.5 197.0L650.5 195.2L651.6 192.9L649.7 190.2L649.4 187.4L651.6 184.6L648.6 185.1L647.1 183.2L643.0 184.8L639.3 185.1L636.0 184.6L629.3 185.5L621.8 185.5L615.1 186.9L610.3 189.2L608.1 190.6L602.9 193.4L599.5 192.4L595.8 192.9L590.6 191.1L590.6 189.9L586.9 190.6ZM718.2 164.5L714.5 161.0L713.0 158.0L714.1 154.4L716.7 152.9L717.1 149.3L720.8 144.0L724.5 137.1L727.5 136.6L729.3 137.6L732.3 139.3L735.3 139.3L731.2 143.0L734.5 147.2L736.8 148.2L742.0 145.1L746.1 143.5L741.6 143.0L739.8 138.7L742.0 136.6L747.2 136.0L750.2 133.8L755.0 133.3L756.5 133.8L752.8 136.0L751.7 139.8L750.5 141.4L749.1 143.5L746.8 144.0L749.1 145.6L750.9 146.7L755.4 149.8L758.0 152.4L762.8 155.4L765.4 160.0L765.1 162.5L761.0 165.5L758.0 165.5L753.1 165.9L751.3 165.5L745.3 164.0L740.9 160.5L736.8 160.5L730.5 161.5L728.6 163.0L723.0 164.5L718.6 164.5ZM788.9 139.8L785.1 141.9L792.6 137.1L800.0 134.4L803.7 133.8L807.5 135.5L808.2 143.5L801.1 144.0L797.4 147.2L800.8 152.4L805.6 156.5L806.7 161.5L811.2 163.0L813.0 165.5L807.5 166.9L807.5 170.3L810.4 175.2L810.8 182.3L811.2 185.1L803.7 186.5L797.4 184.1L794.8 182.7L792.2 178.0L792.2 176.1L793.7 173.2L797.8 168.4L794.4 166.9L791.5 161.5L790.0 160.0L787.0 155.4L786.6 150.3L784.0 146.7L785.9 143.0ZM731.2 215.9L733.1 222.3L736.0 227.3L738.6 232.7L742.4 240.9L747.6 249.0L748.7 258.6L753.5 264.9L757.2 274.2L762.8 277.7L769.1 284.2L771.4 285.7L775.8 289.9L779.6 287.2L772.1 285.3L771.0 283.0L769.9 277.3L769.1 271.1L768.4 269.2L762.8 260.9L756.1 251.0L751.7 240.5L746.1 232.7L740.5 224.4L740.5 218.0L737.9 225.2L733.8 222.3L731.6 216.3ZM268.1 136.0L277.4 128.9L282.9 123.8L289.3 125.0L294.8 129.4L295.6 137.1L288.5 137.1L284.8 136.6L282.9 132.2L277.4 135.5L272.5 136.0ZM284.4 162.0L288.5 160.5L289.3 152.9L289.6 146.7L293.0 143.5L294.8 140.9L288.5 140.9L282.9 147.2L284.8 150.3L283.7 155.4ZM295.2 140.3L299.7 139.3L307.1 139.8L312.7 145.1L312.7 147.7L307.9 146.7L306.4 152.9L303.8 155.4L303.0 151.3L298.2 151.9L300.4 147.7L300.1 144.0ZM299.7 162.0L303.4 163.5L307.1 162.5L316.4 157.0L316.8 155.9L310.8 157.5L305.3 159.5L301.2 160.5ZM313.4 153.9L314.9 151.9L323.9 150.3L326.5 149.3L326.8 152.9L321.6 153.9L316.4 153.9ZM145.3 2.9L152.7 -5.5L167.6 -6.4L173.2 0.1L165.8 9.2L156.5 11.9L150.9 9.2L160.2 4.7ZM173.2 43.9L180.6 45.8L186.2 40.8L193.7 36.9L204.1 31.3L201.1 29.7L191.8 32.1L184.4 33.7L178.8 35.3L176.9 40.8ZM196.3 62.5L203.0 59.6L212.3 58.9L216.0 56.7L208.5 55.9L201.1 57.4ZM227.1 78.4L232.0 73.6L233.5 66.7L229.7 67.4L228.3 73.6ZM249.5 115.2L252.1 112.9L251.3 105.7L246.5 97.7L242.4 94.0L241.3 98.4L244.6 103.3L248.3 108.7ZM240.2 107.5L236.4 104.5L235.7 99.0L238.7 100.8L240.5 104.5ZM245.0 115.8L243.1 114.6L240.9 109.3L243.1 109.9ZM996.4 108.1L1000.2 108.7L1006.5 103.9L1013.9 97.7L1018.4 90.2L1019.5 81.7L1015.8 83.0L1013.9 90.2L1008.3 97.7L1002.8 102.7ZM883.7 141.9L887.4 143.5L891.2 138.2L896.7 138.2L904.2 137.1L904.2 134.9L896.7 135.5L891.2 135.5L885.6 138.2ZM827.2 145.1L829.8 145.1L831.3 140.9L834.2 139.8L838.0 138.7L838.0 136.0L834.6 135.5L832.8 138.2L829.0 139.8L827.5 142.5ZM725.2 52.6L731.2 50.8L733.1 46.2L731.2 42.4L725.6 39.3L721.9 43.2L724.9 48.5ZM741.2 45.5L745.0 43.2L743.5 36.9L739.8 30.5L738.3 34.5L741.2 39.3ZM656.4 63.2L660.9 63.2L662.4 58.1L659.8 56.7L657.2 59.6ZM663.1 68.1L664.6 67.4L665.4 62.5L663.9 62.5ZM893.8 158.5L898.6 157.0L901.9 157.5L898.6 160.0ZM711.1 60.3L713.7 60.3L713.0 66.7L711.9 64.6Z" fill="#c1daf2" stroke="#a9cdf0" stroke-width="0.8" stroke-linejoin="round"/>
<path d="M589.1 117.0L597.3 116.4L605.8 114.0L615.1 111.1L616.6 102.1L611.4 99.6L610.3 95.9L609.9 92.7L605.5 88.2L604.3 83.0L602.5 80.4L598.4 80.4L601.0 77.0L602.9 72.3L603.6 69.5L597.3 68.8L595.0 69.5L598.8 62.5L591.7 62.5L588.7 70.2L589.5 77.0L589.1 84.3L592.4 86.9L597.3 87.6L598.4 93.3L599.1 97.1L593.6 97.7L592.8 100.8L595.0 103.3L591.0 106.3L595.4 108.1L599.1 109.3L594.7 110.5ZM586.5 104.5L578.7 108.1L573.1 108.1L572.0 104.5L573.8 97.7L573.1 92.1L579.4 90.2L579.4 85.6L583.1 85.0L588.0 85.6L589.8 90.2L588.0 94.0L587.6 99.6ZM651.6 82.4L656.1 79.7L657.2 82.4L655.7 85.6L654.2 87.6L652.0 85.6ZM646.8 83.7L649.7 83.0L650.5 85.6L648.2 86.6ZM677.6 72.9L680.2 67.4L681.7 67.4L680.2 71.6L678.4 74.3ZM691.8 64.6L694.0 62.5L697.0 63.2L694.0 66.0ZM656.8 179.9L660.5 179.0L668.3 179.0L666.5 186.0L663.5 184.6L656.8 181.8ZM640.8 165.5L646.0 165.0L646.4 174.2L643.4 175.6L641.5 174.2L641.5 170.3ZM642.3 158.0L645.3 155.4L645.6 160.5L644.5 163.5L642.3 161.0ZM697.7 191.5L701.4 192.0L708.1 192.9L705.2 193.8L701.4 194.0L697.7 192.7ZM730.5 193.8L733.1 192.2L739.0 190.8L736.8 193.8L733.1 195.6ZM619.2 172.3L621.8 170.6L622.9 171.8L621.5 173.7ZM696.6 176.1L700.3 177.1L701.8 179.9L699.6 179.0ZM1131.1 163.0L1134.8 161.5L1135.6 158.0L1143.4 160.5L1147.8 155.4L1152.7 153.9L1150.8 149.3L1142.3 147.7L1138.2 142.5L1137.4 147.7L1135.9 153.9L1132.2 154.4L1131.1 159.0ZM1134.8 163.5L1136.7 167.9L1138.5 172.3L1136.7 178.5L1134.8 184.6L1133.3 187.9L1134.4 190.6L1130.7 194.3L1130.4 191.1L1128.1 192.9L1127.0 195.6L1124.4 195.6L1119.9 195.6L1119.6 197.0L1115.5 201.0L1113.2 196.1L1108.8 195.6L1105.1 197.0L1102.8 197.0L1097.2 198.3L1099.1 196.1L1103.6 192.0L1108.8 191.1L1113.2 190.6L1116.2 190.6L1119.2 183.2L1121.1 182.3L1120.7 185.5L1127.4 179.9L1130.7 174.2L1130.0 170.8L1131.1 167.4L1132.2 164.5ZM1103.2 199.2L1108.8 197.0L1111.4 199.2L1109.5 201.9L1105.1 204.1L1102.8 201.4ZM1097.2 198.8L1100.2 200.1L1101.0 203.7L1098.7 209.8L1096.5 211.6L1094.6 210.2L1094.6 205.0L1092.8 202.8L1095.0 200.1ZM1141.1 90.8L1143.0 99.6L1143.4 108.7L1148.6 123.3L1142.3 122.1L1140.8 131.6L1144.1 135.5L1143.7 139.8L1138.9 140.3L1138.5 131.6L1138.9 120.4L1137.4 108.7L1138.2 97.7ZM294.5 249.4L301.5 245.0L309.0 244.2L316.4 247.0L323.9 250.2L331.3 254.2L334.3 256.2L329.4 257.4L321.3 257.6L323.1 254.6L318.3 251.0L310.8 249.0L305.3 247.4L299.7 248.2ZM333.5 263.3L340.6 264.1L343.6 266.0L349.9 263.7L355.9 264.1L355.9 262.1L350.3 258.2L343.6 257.8L337.3 257.4L339.5 260.5L341.0 262.5L333.5 262.5ZM319.0 263.7L323.1 262.9L326.5 264.9L323.1 265.6ZM360.3 263.3L366.3 263.3L365.9 264.9L360.3 264.9ZM380.0 292.9L383.8 292.5L383.4 295.2L380.0 295.2ZM319.0 236.4L320.9 236.9L321.6 240.9L319.4 239.7ZM389.7 131.1L392.7 126.1L396.4 117.5L399.4 109.9L403.8 108.1L402.0 114.6L402.0 118.7L409.4 120.4L412.4 126.1L414.3 131.6L412.4 136.6L407.6 134.4L402.7 134.4ZM370.4 118.1L377.8 119.8L380.8 122.7L374.1 121.6ZM371.1 135.5L375.9 137.1L379.7 137.1L377.8 139.8L373.0 138.7ZM132.7 112.9L144.2 116.4L150.9 126.1L146.4 126.1L141.6 122.1L134.1 116.4ZM115.5 92.1L120.4 93.3L122.2 103.9L118.1 99.6ZM35.2 70.2L41.1 66.7L44.1 70.2L38.2 75.0ZM907.5 296.7L912.4 301.2L914.6 306.8L911.6 310.2L908.6 310.6L907.2 306.8L907.2 301.2ZM1014.7 260.2L1017.6 257.0L1022.1 256.6L1023.2 258.6L1019.5 263.3L1014.7 262.9ZM1060.4 236.9L1063.8 236.4L1062.3 243.0L1059.7 249.4L1057.1 245.0L1059.3 238.9ZM1058.9 262.9L1064.9 262.9L1064.9 268.8L1062.7 272.6L1062.7 277.3L1066.0 279.6L1071.6 284.2L1071.6 285.7L1067.9 282.3L1064.1 281.5L1060.4 281.5L1058.9 278.4L1056.7 274.6L1056.0 271.5L1058.2 270.3L1058.2 266.8ZM1058.2 282.6L1061.2 282.6L1062.3 286.5L1060.4 287.2ZM1064.1 288.7L1067.9 289.9L1066.4 293.7L1064.1 293.7ZM1067.5 292.2L1069.7 292.5L1068.6 299.0L1066.0 297.4ZM1072.7 286.1L1076.4 286.1L1077.9 291.0L1075.3 294.8L1073.4 292.5L1074.9 289.9ZM1064.1 306.8L1069.7 300.8L1076.8 296.3L1080.1 301.2L1080.5 308.7L1077.2 311.3L1071.6 310.6L1071.6 305.0L1067.9 305.0L1064.1 307.6ZM1046.3 301.6L1054.8 290.6L1054.5 294.4L1048.5 301.2ZM30.4 256.2L33.7 258.2L31.5 260.9L30.0 258.6ZM27.4 253.0L29.6 253.4L28.5 254.6ZM21.8 250.6L23.7 251.0L22.5 251.8ZM808.9 285.7L813.0 285.7L811.2 286.8ZM-28.4 23.0L-18.4 26.4L-17.6 28.8L-27.7 26.4ZM-12.1 50.8L-6.5 50.0L-6.5 53.7L-10.9 53.7ZM-3.1 89.5L3.2 86.9L2.8 90.2L-2.4 91.4ZM-12.8 95.9L-8.0 93.3L-8.7 96.5ZM1154.2 148.2L1164.2 142.5L1159.0 146.1L1153.0 150.8ZM1188.0 116.4L1191.4 112.9L1189.5 116.4ZM582.8 34.5L586.1 34.5L585.0 40.1ZM604.7 47.7L607.0 47.7L605.5 53.0ZM1218.5 58.1L1222.2 59.6L1220.4 63.2Z" fill="#f8f5f1" stroke="#a9cdf0" stroke-width="0.8" stroke-linejoin="round"/>
<path d="M1046.0 -5.8L1055.9 -7.0L1064.5 -9.8M1046.0 -5.8L1046.3 2.9L1044.9 13.0M1044.9 13.0L1050.3 17.5L1057.2 23.3L1062.0 27.9M1062.0 27.9L1070.2 22.0L1078.5 18.0M1064.5 -9.8L1067.6 -3.1L1071.1 3.0L1074.2 10.9L1078.5 18.0M1046.0 -5.8L1041.5 -8.9M1067.5 -13.6L1064.5 -9.8M1268.4 27.1L1267.6 31.3M1268.4 27.1L1263.4 21.2L1257.5 17.8L1251.0 13.4L1246.4 7.6M1244.9 43.8L1243.0 44.2M1243.0 44.2L1238.4 39.2L1235.6 32.1M1246.4 7.6L1243.7 16.1L1238.4 23.1L1235.6 32.1M1269.5 -8.1L1277.4 -5.8L1284.3 -3.6L1290.3 0.1M1295.0 -6.2L1290.3 0.1M1272.9 24.5L1268.4 27.1M1291.3 6.8L1290.3 0.1M1245.6 4.1L1246.4 7.6M1245.6 4.1L1252.4 -0.0L1260.7 -4.3L1269.5 -8.1M1117.6 -5.8L1107.7 -5.6L1097.7 -5.5M1091.1 -14.5L1097.7 -5.5M1087.8 19.1L1091.0 12.0L1094.5 2.8L1097.7 -5.5M1087.8 19.1L1090.1 21.3M1122.7 1.1L1117.6 -5.8M1122.7 1.1L1121.0 9.0L1119.2 16.4L1118.1 23.1M1118.1 23.1L1110.7 23.7L1103.2 22.7L1097.7 20.8L1090.1 21.3M1067.5 -13.6L1075.6 -13.5L1082.5 -15.0L1091.1 -14.5M1078.5 18.0L1087.8 19.1M1148.3 -13.4L1145.4 -6.3L1140.4 0.2M1148.3 -13.4L1158.4 -13.5L1168.1 -13.9M1168.1 -13.9L1167.5 -7.3L1167.4 1.4L1168.0 8.6M1140.4 0.2L1146.7 9.1L1151.9 16.5M1151.9 16.5L1160.3 11.8L1168.0 8.6M1122.7 1.1L1130.5 0.1L1140.4 0.2M1168.1 -13.9L1176.8 -14.4L1185.8 -14.4M1199.2 4.0L1194.0 -3.0L1189.5 -9.2L1185.8 -14.4M1199.2 4.0L1193.2 8.8L1188.2 12.9L1182.9 17.3M1182.9 17.3L1175.6 12.3L1168.0 8.6M763.7 -20.7L767.0 -17.3M778.4 -19.5L767.0 -17.3M1041.5 -8.9L1034.9 -5.6L1026.8 -3.4L1018.8 -2.0L1011.8 0.3M1007.7 -5.2L1011.8 0.3M1007.7 -5.2L1000.7 -6.8L992.7 -7.1L985.4 -9.6M1044.9 13.0L1035.2 18.6L1027.6 23.7M1027.6 23.7L1021.5 16.1L1016.5 9.9L1011.7 4.1M1011.7 4.1L1011.8 0.3M1118.1 23.1L1124.4 31.4M1151.9 16.5L1150.6 20.2M1150.6 20.2L1145.1 22.1L1137.5 25.7L1130.2 27.7L1124.4 31.4M1212.9 3.3L1219.9 2.4L1228.5 2.7L1236.5 2.5L1243.2 2.4M1211.4 4.4L1212.9 3.3M1211.4 4.4L1213.2 13.3L1213.7 23.4L1214.5 32.0M1245.6 4.1L1243.2 2.4M1214.5 32.0L1222.2 31.5L1229.4 32.9L1235.6 32.1M1199.2 4.0L1211.4 4.4M243.7 244.1L238.2 247.6M233.8 241.5L238.2 247.6M226.5 246.8L233.8 241.5M226.5 246.8L222.2 245.0M243.7 244.1L246.0 245.0M238.0 249.6L238.2 247.6M238.0 249.6L244.7 255.9M244.7 255.9L248.1 254.0M886.5 77.1L883.8 76.3M886.5 77.1L891.2 84.1L896.9 90.4L902.4 95.5M883.8 76.3L877.4 81.2L872.9 84.4L865.9 88.7M902.4 95.5L902.4 99.5M902.4 99.5L895.4 105.7L889.4 110.8L882.2 115.1M882.2 115.1L875.5 109.7L868.0 102.8M865.9 88.7L867.3 95.6L868.0 102.8M1003.3 45.4L1008.6 50.7L1012.3 55.9L1017.0 62.2M1003.3 45.4L996.4 51.4L989.3 55.5L983.9 63.0L977.5 67.6M1009.8 77.0L1013.6 69.9L1017.0 62.2M1009.8 77.0L1001.3 76.7L993.0 78.3L985.0 78.9M985.0 78.9L977.5 67.6M932.6 42.4L931.1 33.2L930.7 22.9M932.6 42.4L926.3 50.8L920.0 58.9M920.0 58.9L917.4 58.6M917.4 58.6L911.3 53.9L905.3 47.6L899.9 43.1L893.6 37.8M913.5 18.2L907.8 23.2L899.6 28.9L893.1 34.9M913.5 18.2L926.0 18.9M893.6 37.8L893.1 34.9M930.7 22.9L926.0 18.9M962.9 53.7L954.4 51.2L948.6 48.3L941.2 44.7L932.6 42.4M962.9 53.7L965.9 62.7M927.4 72.7L936.3 73.4L945.0 72.4L955.0 72.7M927.4 72.7L924.7 65.7L920.0 58.9M965.9 62.7L960.6 67.2L955.0 72.7M927.4 72.7L925.1 82.9M925.1 82.9L918.3 87.3L909.4 91.5L902.4 95.5M886.5 77.1L891.8 74.3L899.0 68.9L905.8 65.7L910.4 63.1L917.4 58.6M879.6 63.3L883.8 76.3M879.6 63.3L883.2 56.6L887.2 50.8L890.5 45.0L893.6 37.8M813.4 -1.3L813.2 -5.6M813.4 -1.3L816.0 1.0M827.1 -11.1L828.0 -0.0M827.1 -11.1L821.3 -15.2M816.0 1.0L828.0 -0.0M813.2 -5.6L821.3 -15.2M830.0 -26.6L820.1 -19.0M792.2 -19.9L790.8 -7.7M792.2 -19.9L802.8 -19.7M804.4 -13.8L803.8 -18.5M804.4 -13.8L798.5 -4.7M790.8 -7.7L798.5 -4.7M802.8 -19.7L803.8 -18.5M789.4 -21.8L792.2 -19.9M813.2 -5.6L804.4 -13.8M821.3 -15.2L820.1 -19.0M820.0 -19.1L812.3 -17.8L803.8 -18.5M813.4 -1.3L801.1 2.5M801.1 2.5L798.5 -4.7M789.4 -21.8L779.0 -19.1M779.0 -19.1L778.8 -6.8M790.8 -7.7L784.2 -4.0M784.2 -4.0L778.8 -6.8M798.4 8.0L787.3 7.5M798.4 8.0L801.1 2.5M784.2 -4.0L787.3 7.5M767.0 -17.3L765.6 -9.4M778.8 -6.8L774.6 -4.9M765.6 -9.4L771.0 -6.7M772.5 -6.0L774.6 -4.9M966.4 -0.8L972.2 -0.8M966.4 -0.8L960.9 7.8L955.8 16.9M972.2 -0.8L976.5 5.8L981.9 11.4L987.8 18.5L992.4 25.1M955.8 16.9L960.0 23.0L964.8 30.4L968.4 37.7M968.4 37.7L975.3 34.3L984.4 31.3L992.3 28.1M992.3 28.1L992.4 25.1M951.0 -18.8L956.2 -11.7L961.5 -6.3L966.4 -0.8M985.4 -9.6L978.1 -6.0L972.2 -0.8M951.0 -18.8L943.9 -15.9L936.9 -13.0L931.2 -10.3M931.2 -10.3L929.8 -2.9L929.4 4.5L928.0 11.2L926.0 18.9M930.7 22.9L939.4 20.8L946.4 18.6L955.8 16.9M1011.7 4.1L1006.3 9.1L1001.0 15.3L996.9 18.9L992.4 25.1M962.9 53.7L965.3 45.7L968.4 37.7M1003.2 41.2L998.8 33.7L992.3 28.1M1003.2 41.2L1003.3 45.4M977.5 67.6L965.9 62.7M1003.2 41.2L1011.5 36.4L1018.5 33.6L1026.6 29.6M1027.6 23.7L1026.6 29.6M1117.5 48.4L1108.1 49.5L1101.3 51.4L1091.8 53.3M1117.5 48.4L1119.7 58.1L1123.0 66.4L1125.4 74.5M1125.4 74.5L1118.9 76.9L1111.6 80.7L1105.1 81.5L1097.6 84.6M1097.6 84.6L1095.3 78.0L1093.5 71.6L1091.8 63.2L1089.1 56.6M1091.8 53.3L1089.1 56.6M1090.1 21.3L1090.4 29.8L1090.3 37.3L1092.4 46.0L1091.8 53.3M1124.4 31.4L1124.6 38.3M1124.6 38.3L1117.5 48.4M1057.9 74.4L1064.4 68.7L1070.6 62.3L1075.3 56.1M1057.9 74.4L1045.7 72.8M1045.7 72.8L1040.8 65.9L1037.3 60.3M1037.3 60.3L1041.2 47.1M1041.2 47.1L1050.8 42.3L1059.2 37.8M1059.2 37.8L1065.6 44.3L1070.4 50.8L1075.3 56.1M1069.8 89.7L1064.2 81.8L1057.9 74.4M1069.8 89.7L1078.6 88.5L1088.3 89.2L1096.2 87.8M1096.2 87.8L1097.6 84.6M1089.1 56.6L1075.3 56.1M1026.6 29.6L1030.9 35.5L1037.2 40.3L1041.2 47.1M1017.0 62.2L1027.5 61.0L1037.3 60.3M1062.0 27.9L1059.2 37.8M819.9 202.1L828.0 208.5M819.9 202.1L829.5 195.5M828.0 208.5L834.3 203.8M834.3 203.8L829.5 195.5M898.7 299.9L901.3 299.3M898.7 299.9L899.0 301.5M907.0 285.7L895.6 289.8M898.7 299.9L897.2 298.7M895.6 289.8L897.2 298.7M881.8 256.2L886.9 262.3M884.2 270.8L886.9 262.3M883.4 248.4L895.7 247.6M883.4 248.4L881.8 256.2M895.7 247.6L899.7 251.6M886.9 262.3L898.5 262.0M899.7 251.6L898.5 262.0M790.9 310.1L781.5 313.0M781.5 313.0L784.8 321.0M784.8 321.0L788.3 320.4M783.2 323.2L784.8 321.0M850.9 235.3L848.4 228.4M836.1 232.5L836.2 235.5M836.1 232.5L843.6 226.7M843.6 226.7L848.4 228.4M826.6 242.9L829.6 250.1M778.2 254.6L779.1 248.9M778.2 254.6L779.9 258.4M802.0 250.8L797.9 242.8M802.0 250.8L798.3 257.5L794.8 263.0M779.9 258.4L788.4 261.3L794.8 263.0M779.1 248.9L784.4 246.0L791.1 241.7M791.1 241.7L796.3 241.8M796.3 241.8L797.9 242.8M802.0 250.8L811.2 251.0M811.2 251.0L815.4 244.3M815.4 244.3L811.6 239.7M797.9 242.8L802.0 240.3M857.2 86.4L851.8 77.3M857.2 86.4L865.9 88.7M861.0 52.1L855.3 56.0L850.6 61.6M861.0 52.1L866.9 56.6L872.7 59.8L879.6 63.3M851.8 77.3L850.2 70.1L850.2 62.6M850.6 61.6L850.2 62.6M851.8 77.3L843.5 76.1L836.0 76.0M832.9 72.0L836.0 76.0M832.9 72.0L834.9 65.1M850.2 62.6L843.6 64.9L834.9 65.1M850.7 -3.9L843.9 -9.8L839.1 -16.1M850.7 -3.9L855.2 -2.6M855.2 -2.6L859.5 -8.4L862.9 -14.4M862.9 -14.4L860.7 -22.7L857.4 -30.4L854.8 -39.2M854.8 -39.2L849.0 -32.9L844.4 -26.9L838.5 -20.6M838.5 -20.6L839.1 -16.1M827.1 -11.1L839.1 -16.1M828.0 -0.0L831.1 2.4M831.1 2.4L840.5 0.3L850.7 -3.9M831.1 2.4L830.4 11.3M858.0 5.6L855.2 -2.6M858.0 5.6L855.4 11.8M830.4 11.3L835.9 17.3M855.4 11.8L845.8 14.2L835.9 17.3M830.0 -26.6L838.5 -20.6M896.5 -3.4L893.5 -3.9M896.5 -3.4L903.0 -8.6L909.8 -14.3L916.1 -18.9M893.5 -3.9L887.8 -11.2L883.4 -17.3M884.3 29.8L881.5 21.4L879.4 10.7M884.3 29.8L893.1 34.9M913.5 18.2L907.2 11.4L902.4 2.7L896.5 -3.4M879.4 10.7L887.1 4.0L893.5 -3.9M931.2 -10.3L924.3 -13.6L916.1 -18.9M858.0 5.6L865.4 7.6L872.4 9.3L879.4 10.7M862.9 -14.4L872.9 -16.7L883.4 -17.3M763.7 -20.7L755.8 -19.3M755.8 -19.3L750.1 -32.0M1009.8 77.0L1014.5 85.4M1018.1 91.8L1019.1 93.4M1045.7 72.8L1042.4 80.5L1036.0 89.0L1032.8 96.6M1032.8 96.6L1027.0 95.1L1019.1 93.4M985.0 78.9L984.7 86.1L983.4 94.1M983.4 94.1L992.5 100.3L999.7 104.6M1019.1 93.4L1015.4 96.4M1073.1 133.6L1063.4 128.4M1073.1 133.6L1082.2 128.0M1082.2 128.0L1080.9 115.5M1080.9 115.5L1071.9 111.1L1061.8 108.2M1063.4 128.4L1059.8 116.4M1061.8 108.2L1059.8 116.4M1069.8 89.7L1065.9 97.3L1061.3 106.9M1096.2 87.8L1099.5 99.8M1061.3 106.9L1061.8 108.2M1099.5 99.8L1094.0 104.6L1088.0 110.7L1080.9 115.5M1099.5 99.8L1108.8 109.7M1108.8 109.7L1105.9 115.7L1100.1 122.5L1097.0 129.6M1097.0 129.6L1093.1 130.6M1082.2 128.0L1086.3 129.7M1086.3 129.7L1093.1 130.6M778.4 311.5L781.5 313.0M778.4 311.5L777.9 306.4M777.9 306.4L783.4 302.5M792.4 307.8L791.4 305.6M783.4 302.5L791.4 305.6M775.0 279.2L782.0 281.9M775.0 279.2L773.9 284.6M772.5 291.6L771.8 295.4M782.0 281.9L782.1 282.7M783.7 292.5L783.9 294.0M771.8 295.4L772.6 296.4M772.6 296.4L783.2 294.9M783.9 294.0L783.2 294.9M777.9 306.4L773.2 302.6M773.2 302.6L772.6 296.4M783.4 302.5L783.2 294.9M791.4 305.6L794.0 295.3M794.0 295.3L783.9 294.0M682.8 271.5L684.6 272.0M682.8 271.5L678.8 273.7M684.2 291.5L675.4 288.1M684.2 291.5L692.8 282.7M684.6 272.0L692.8 282.7M678.8 273.7L677.5 281.3L675.4 288.1M815.5 205.9L819.1 202.0M815.5 205.9L804.9 205.0M819.1 202.0L815.2 193.1M805.2 200.2L804.9 205.0M805.2 200.2L813.6 192.7M813.6 192.7L815.2 193.1M841.4 219.0L843.6 226.7M841.4 219.0L838.5 217.4M838.5 217.4L835.5 218.2M836.1 232.5L831.2 226.8M835.5 218.2L831.2 226.8M805.2 200.2L798.6 191.8M813.6 192.7L808.2 186.2M798.6 191.8L803.1 186.9M786.1 209.7L787.4 216.5M786.1 209.7L794.4 205.7M794.4 205.7L798.0 207.6M798.0 207.6L795.7 214.8M789.4 216.9L787.4 216.5M792.2 199.3L796.0 192.2M792.2 199.3L794.4 205.7M802.9 207.1L798.0 207.6M802.9 207.1L804.9 205.0M798.6 191.8L796.0 192.2M815.6 144.8L819.2 135.8M815.6 144.8L808.5 144.0M805.2 133.8L817.3 132.7M819.2 135.8L817.3 132.7M804.6 133.6L800.5 129.6M800.5 129.6L792.4 136.5M803.2 144.9L801.4 144.6M897.2 298.7L896.2 299.0M895.6 289.8L891.2 285.6M891.2 285.6L890.3 286.1M890.5 281.0L886.6 277.8M890.5 281.0L891.2 285.6M898.8 262.4L905.5 261.1L913.9 261.4M898.8 262.4L900.5 273.3M906.3 276.1L908.7 275.2M906.3 276.1L900.5 273.3M917.1 268.7L917.4 266.1M917.4 266.1L913.9 261.4M907.3 248.4L899.7 251.6M907.3 248.4L914.8 254.1M914.8 254.1L913.9 261.4M890.5 281.0L900.5 273.3M907.0 285.7L906.3 276.1M883.4 248.4L880.5 242.0M869.7 244.3L878.9 240.8M880.5 242.0L878.9 240.8M794.9 294.7L798.6 295.9M794.9 294.7L795.1 290.6M794.0 295.3L794.9 294.7M782.0 281.9L786.3 281.0M771.5 275.6L775.0 279.2M771.5 275.6L774.9 266.6L779.9 258.4M794.8 263.0L801.3 274.3M812.5 267.4L817.0 259.9M817.0 259.9L823.7 259.3M811.2 251.0L817.0 259.9M815.4 244.3L823.2 241.4M823.2 241.4L826.6 242.9M762.2 219.1L771.5 227.5M762.2 219.1L757.1 221.0M754.5 235.4L756.0 236.9M754.5 235.4L754.0 224.8M756.0 236.9L764.2 235.6M754.0 224.8L757.1 221.0M771.5 227.5L764.2 235.6M778.2 254.6L768.2 254.1L758.9 254.1M754.7 246.2L756.0 236.9M779.1 248.9L778.2 247.3M764.2 235.6L771.1 241.6L778.2 247.3M950.0 181.1L959.3 182.1L968.3 182.7M950.0 181.1L949.6 177.0M949.6 177.0L958.5 167.3M958.5 167.3L971.2 168.1M968.3 182.7L975.6 177.9M975.6 177.9L975.4 171.4M975.4 171.4L971.2 168.1M939.0 165.9L946.1 160.6L953.9 153.1M939.0 165.9L945.0 170.7L949.6 177.0M953.9 153.1L957.1 160.9L958.5 167.3M954.1 152.1L966.8 148.6M954.1 152.1L953.9 153.1M966.8 148.6L968.9 158.2L971.2 168.1M839.4 173.9L839.2 178.6M839.4 173.9L850.3 174.3M848.8 185.6L851.9 176.9M848.8 185.6L845.7 185.2M850.3 174.3L851.9 176.9M845.7 185.2L839.2 178.6M837.7 171.4L839.4 173.9M837.7 171.4L837.8 167.4M850.3 174.3L851.4 165.6L852.5 156.0M852.5 156.0L845.9 161.6L837.8 167.4M855.4 11.8L855.5 21.6L856.8 32.0M835.9 17.3L834.5 24.7M834.5 24.7L836.9 28.2M856.8 32.0L847.8 29.7L836.9 28.2M884.3 29.8L876.0 32.6L866.7 34.6L859.2 36.9M856.8 32.0L859.2 36.9M861.0 52.1L859.5 46.1L858.9 38.2M858.9 38.2L859.2 36.9M829.7 54.6L817.4 48.9M829.7 54.6L835.2 49.1M833.1 40.5L836.1 44.7M833.1 40.5L822.8 37.8M822.8 37.8L817.4 48.9M835.2 49.1L836.1 44.7M850.6 61.6L841.9 55.5L835.2 49.1M834.9 65.1L829.4 58.5M829.4 58.5L829.7 54.6M858.9 38.2L852.1 40.0L842.6 42.4L836.1 44.7M836.9 28.2L833.1 40.5M834.5 24.7L825.6 26.5M822.2 36.9L825.6 26.5M822.2 36.9L822.8 37.8M818.4 16.2L818.9 20.4M818.4 16.2L815.4 13.8M818.9 20.4L813.4 26.4L809.6 31.7M815.4 13.8L803.2 15.0M803.2 15.0L805.4 23.5L807.2 31.1M807.2 31.1L808.2 32.0M808.2 32.0L809.6 31.7M830.4 11.3L818.4 16.2M825.6 26.5L818.9 20.4M816.0 1.0L815.4 13.8M822.2 36.9L809.6 31.7M802.0 14.3L798.4 8.0M802.0 14.3L803.2 15.0M802.0 14.3L792.6 23.7M792.6 23.7L796.1 30.4M796.1 30.4L807.2 31.1M805.0 44.7L808.2 32.0M805.0 44.7L793.5 44.3M796.1 30.4L791.4 37.2M793.5 44.3L791.4 37.2M787.3 7.5L784.9 9.9M774.6 -4.9L770.4 4.8M770.4 4.8L775.2 11.1M784.9 9.9L775.2 11.1M792.6 23.7L786.9 22.7M784.9 9.9L786.9 22.7M755.8 -19.3L753.7 -15.1M765.6 -9.4L759.4 -6.6M753.7 -15.1L759.4 -6.6M750.1 -32.0L747.0 -25.0L741.9 -20.0M753.7 -15.1L744.8 -13.4M741.9 -20.0L744.8 -13.4M1038.0 100.9L1038.4 109.8L1041.6 116.8L1042.1 124.7M1038.0 100.9L1033.4 97.8M1033.4 97.8L1029.6 105.5L1026.5 114.3M1026.5 114.3L1030.4 125.7M1030.4 125.7L1042.1 124.7M1061.3 106.9L1054.3 104.4L1045.1 102.6L1038.0 100.9M1043.2 125.4L1042.1 124.7M1043.2 125.4L1052.3 120.4L1059.8 116.4M1032.8 96.6L1033.4 97.8M1039.4 142.7L1046.5 136.5M1039.4 142.7L1043.5 155.5M1052.5 137.8L1059.2 148.6M1052.5 137.8L1046.5 136.5M1059.2 148.6L1058.3 151.7M1058.3 151.7L1051.5 153.4L1044.9 156.3M1043.5 155.5L1044.9 156.3M1043.2 125.4L1046.5 136.5M1033.6 142.2L1039.4 142.7M1033.6 142.2L1027.3 130.0M1027.3 130.0L1030.4 125.7M1072.4 143.3L1073.1 133.6M1072.4 143.3L1065.6 147.0L1059.2 148.6M1063.4 128.4L1057.3 133.3L1052.5 137.8M1098.9 131.5L1100.3 141.2M1098.9 131.5L1106.4 135.1M1106.4 135.1L1104.9 143.1M1100.3 141.2L1104.9 143.1M1182.9 17.3L1184.0 25.9L1184.0 35.7M1150.6 20.2L1154.5 29.6L1159.8 38.0M1184.0 35.7L1176.7 36.5L1167.2 37.4L1159.8 38.0M1214.5 32.0L1212.1 35.0M1192.1 40.4L1188.4 40.5M1184.0 35.7L1188.4 40.5M1124.6 38.3L1130.5 41.4L1137.2 45.7L1143.6 49.6L1151.0 53.6M1159.8 38.0L1154.7 46.9L1151.0 53.6M1243.0 44.2L1242.5 45.8M1212.8 49.9L1215.3 55.0M993.0 263.1L993.5 270.6M993.0 263.1L997.5 263.7M999.9 270.4L1000.6 269.1M999.9 270.4L994.1 271.0M1000.6 269.1L997.5 263.7M1009.4 272.4L1005.7 274.9M1009.4 272.4L1009.0 269.1M1007.5 267.4L1005.1 266.3M999.9 270.4L1000.5 271.6M1005.1 266.3L1000.6 269.1M1005.7 274.9L1000.5 271.6M772.1 316.5L777.0 323.2M772.1 316.5L769.3 316.6M769.3 316.6L767.7 325.2L766.1 332.4M777.0 323.2L772.6 332.4M778.4 311.5L772.1 316.5M783.2 323.2L777.0 323.2M773.2 302.6L766.9 306.2M769.0 316.4L766.9 306.2M762.1 296.9L764.6 295.0M762.1 296.9L762.8 304.7M764.6 295.0L771.8 295.4M762.8 304.7L766.9 306.2M752.2 316.5L748.6 324.4L746.8 330.9M752.2 316.5L757.6 315.4M757.6 315.4L759.4 316.6M759.4 316.6L759.9 329.6M746.8 330.9L759.9 329.6M746.7 331.0L739.1 319.5M739.1 319.5L745.9 312.1M745.9 312.1L752.2 316.5M748.6 301.0L745.3 309.6M748.6 301.0L758.3 307.7M745.3 309.6L745.9 312.1M758.3 307.7L757.6 315.4M769.0 316.4L759.4 316.6M758.3 307.7L762.8 304.7M765.5 332.4L759.9 329.6M678.8 273.7L671.6 271.9L664.6 270.3M664.6 270.3L663.2 268.6M644.8 206.8L645.7 199.6M644.8 206.8L644.0 207.1M645.7 199.6L634.4 196.2M648.5 209.2L644.8 206.8M645.7 199.6L646.6 198.8M796.3 241.8L797.2 235.9M802.9 207.1L807.4 217.5M807.4 217.5L801.1 222.4M819.9 202.1L819.1 202.0M828.0 208.5L827.3 213.2M815.5 205.9L816.6 212.8M827.3 213.2L823.1 215.9M816.6 212.8L823.1 215.9M807.4 217.5L809.7 218.0M816.6 212.8L809.7 218.0M784.1 208.8L777.4 211.8M784.1 208.8L780.6 198.5M774.0 209.4L777.4 211.8M774.0 209.4L774.2 203.7M780.6 198.5L774.2 203.7M784.1 208.8L786.1 209.7M792.2 199.3L781.2 197.7M789.0 186.5L796.0 192.2M789.0 186.5L790.1 184.1M790.1 184.1L793.5 181.6M712.3 263.9L718.0 276.6M712.3 263.9L700.0 262.7M700.0 262.7L699.6 263.5M699.6 263.5L699.9 271.9L701.7 281.0M701.7 281.0L709.1 278.8L718.0 276.6M684.6 272.0L692.0 267.2L699.6 263.5M700.2 282.9L692.8 282.7M700.2 282.9L701.7 281.0M818.5 124.4L806.4 121.5M818.5 124.4L817.3 132.7M800.5 129.6L800.1 126.4M806.4 121.5L800.1 126.4M762.0 136.2L763.7 130.3M762.0 136.2L769.1 138.3M763.7 130.3L772.5 125.5M769.1 138.3L776.6 134.6M772.5 125.5L776.6 134.6M606.6 179.7L608.2 179.3M606.6 179.7L604.3 173.7M604.3 173.7L607.5 169.6M607.5 169.6L610.6 169.9M596.9 168.9L599.4 173.3M596.9 168.9L601.4 161.6M599.4 173.3L604.3 173.7M601.4 161.6L603.6 161.6M603.6 161.6L607.5 169.6M578.2 162.9L581.5 164.9M577.9 159.4L578.3 156.6M578.3 156.6L585.5 152.7M588.3 163.6L581.5 164.9M588.3 163.6L590.6 159.6M590.6 159.6L586.0 152.8M596.9 168.9L591.6 168.8M601.4 161.6L596.8 158.2M591.6 168.8L588.3 163.6M590.6 159.6L596.8 158.2M850.5 206.0L849.0 197.1M850.5 206.0L840.2 208.1M849.0 197.1L841.4 196.6M841.4 196.6L835.7 204.0M840.2 208.1L835.7 204.0M838.5 217.4L840.2 208.1M834.3 203.8L835.7 204.0M827.3 213.2L835.5 218.2M849.9 195.6L863.4 194.8M849.9 195.6L849.4 186.4M849.4 186.4L858.9 186.7M863.4 194.8L858.9 186.7M841.4 219.0L850.2 216.7M848.4 228.4L854.6 221.2M854.6 221.2L850.2 216.7M850.2 216.7L850.9 206.4M922.5 248.3L918.0 239.6M922.5 248.3L914.8 254.1M907.3 248.4L908.6 240.3M908.6 240.3L917.6 239.4M772.7 226.9L780.0 230.7M772.7 226.9L774.7 221.2M774.7 221.2L777.4 218.7M777.4 218.7L784.8 219.4M784.8 219.4L786.9 228.3M780.0 230.7L786.0 229.5M786.9 228.3L786.0 229.5M771.5 227.5L772.7 226.9M778.2 247.3L778.4 238.7L780.0 230.7M764.4 215.0L767.3 213.7M764.4 215.0L762.2 219.1M767.3 213.7L774.7 221.2M768.6 211.3L767.3 213.7M768.6 211.3L774.0 209.4M777.4 211.8L777.4 218.7M787.4 216.5L784.8 219.4M793.2 226.8L786.9 228.3M791.1 241.7L786.0 229.5M986.5 162.1L995.5 166.0L1004.0 170.7M986.5 162.1L980.6 165.8L975.4 171.4M975.6 177.9L981.8 183.7L988.6 189.5M1004.4 171.6L1004.0 170.7M1004.4 171.6L1000.3 179.9L996.2 186.8M996.2 186.8L988.6 189.5M1024.2 198.6L1012.6 199.5M1004.4 171.6L1012.1 172.9L1020.4 175.5M1024.4 198.3L1023.9 190.0L1021.4 184.1L1020.4 175.5M996.2 186.8L1005.5 193.2L1012.6 199.5M965.9 196.9L969.2 201.0M965.9 196.9L967.1 189.8L968.3 182.7M969.2 201.0L977.9 199.7L985.6 197.5M988.6 189.5L985.6 197.5M967.9 205.6L969.2 201.0M967.9 205.6L973.9 216.3M973.9 216.3L983.7 214.1M983.7 214.1L989.0 208.8M985.6 197.5L989.0 208.8M941.5 144.7L939.9 137.8L936.2 129.9M941.5 144.7L948.3 145.8M948.3 145.8L952.0 138.1L953.8 132.0M936.2 129.9L940.6 126.8M953.8 132.0L947.3 130.3L940.6 126.8M986.3 157.6L993.5 146.0M986.3 157.6L977.3 152.3L970.5 147.0M993.5 146.0L991.1 141.5M991.1 141.5L985.0 138.9M985.0 138.9L976.9 143.8L970.5 147.0M986.5 162.1L986.3 157.6M966.8 148.6L968.4 146.9M968.4 146.9L970.5 147.0M1027.3 130.0L1015.6 131.6M1026.5 114.3L1019.4 116.6L1012.9 119.2M1015.6 131.6L1012.9 119.2M1002.8 107.4L1003.0 111.2M1012.9 119.2L1003.0 111.2M983.4 94.1L975.0 101.4M975.0 101.4L977.6 108.5L981.0 115.6L984.2 121.8M984.2 121.8L995.3 121.1M1003.0 111.2L995.3 121.1M984.2 121.8L979.6 127.2M991.1 141.5L997.8 129.3M979.6 127.2L985.0 138.9M995.3 121.1L997.8 129.3M1020.6 260.8L1017.1 258.6M990.1 251.6L991.7 245.8M990.1 251.6L994.6 254.7M994.6 254.7L997.6 254.1M997.6 254.1L999.2 248.5M999.2 248.5L995.6 245.1M991.7 245.8L995.6 245.1M992.0 260.3L985.4 258.4M992.0 260.3L994.6 254.7M987.4 251.9L990.1 251.6M987.4 251.9L985.3 253.9M985.4 258.4L985.3 253.9M1002.4 147.7L1007.0 141.4L1012.3 135.4M1002.4 147.7L1007.9 156.3M1007.9 156.3L1014.6 154.7L1022.9 152.3M1013.2 135.1L1012.3 135.4M1013.2 135.1L1017.8 142.7L1023.4 149.9M1023.4 149.9L1022.9 152.3M993.5 146.0L1002.4 147.7M997.8 129.3L1005.8 131.4L1012.3 135.4M1004.0 170.7L1005.9 164.6L1007.9 156.3M1028.1 161.4L1022.9 152.3M1028.1 161.4L1027.3 170.0M1020.4 175.5L1027.3 170.0M1015.6 131.6L1013.2 135.1M1033.6 142.2L1023.4 149.9M1028.1 161.4L1036.4 157.4L1043.5 155.5M1027.3 170.0L1039.3 174.3M1044.9 156.3L1047.1 166.1M1047.1 166.1L1039.3 174.3M1024.4 198.3L1032.0 195.0L1039.6 191.0L1046.3 188.9M1039.3 174.3L1043.5 181.6L1046.3 188.9M829.5 195.3L837.5 191.2M829.5 195.3L824.1 187.1M837.5 191.2L837.8 189.9M837.8 189.9L833.3 183.5M824.2 186.8L829.3 183.1M829.3 183.1L833.3 183.5M841.4 196.6L837.5 191.2M815.2 193.1L824.1 187.1M848.8 185.6L849.4 186.4M845.7 185.2L837.8 189.9M849.0 197.1L849.9 195.6M839.2 178.6L833.3 183.5M819.4 180.8L811.3 180.5M819.4 180.8L824.2 186.8M837.7 171.4L828.8 175.0M828.8 175.0L829.3 183.1M854.8 153.9L853.0 155.2M854.8 153.9L857.4 154.3M851.9 176.9L859.9 176.7M857.4 154.3L860.4 163.6L863.5 171.4M852.5 156.0L853.0 155.2M863.5 171.4L859.9 176.7M858.9 186.7L861.9 181.3M859.9 176.7L861.9 181.3M938.5 102.4L933.3 96.2L930.5 89.3L925.1 82.9M938.5 102.4L931.8 106.2L925.3 110.9L920.0 114.0M902.4 99.5L908.4 107.0L912.6 112.6M920.0 114.0L912.6 112.6M882.2 115.1L882.4 120.4M912.6 112.6L909.0 120.1L904.0 126.1L901.0 132.6M882.4 120.4L888.5 123.4L894.2 129.3L901.0 132.6M830.8 146.4L839.5 142.4L846.2 137.5M830.8 146.4L830.3 145.4M827.9 140.5L826.5 137.4M846.2 137.5L840.0 134.9L831.9 133.0M826.5 137.4L831.9 133.0M854.8 153.9L850.8 145.3L848.0 137.3M853.0 155.2L844.6 153.5L836.3 152.9L829.5 152.5M829.5 152.5L830.8 146.4M848.0 137.3L846.2 137.5M819.0 123.8L831.3 125.3M819.2 135.8L826.5 137.4M831.3 125.3L831.9 133.0M856.0 125.9L849.4 133.4M856.0 125.9L854.8 116.5M849.4 133.4L841.7 128.4L835.4 121.3M854.8 116.5L847.9 113.1M847.9 113.1L836.1 116.0M836.1 116.0L835.4 121.3M857.4 154.3L866.0 153.0L875.2 149.8M848.0 137.3L849.4 133.4M873.1 130.8L873.6 139.3L875.2 149.8M873.1 130.8L865.3 128.3L856.0 125.9M868.0 102.8L861.2 109.7L854.8 116.5M882.4 120.4L873.1 130.8M831.3 125.3L835.4 121.3M857.2 86.4L853.3 88.7M853.3 88.7L848.2 93.9L844.7 101.1M844.7 101.1L847.9 113.1M775.2 11.1L770.6 20.9M786.9 22.7L783.5 25.2M770.6 20.9L783.5 25.2M791.4 37.2L782.7 33.6M782.7 33.6L783.5 25.2M770.4 4.8L764.6 4.6M759.4 -6.6L758.7 -4.6M764.6 4.6L764.1 3.9M759.8 -3.0L758.7 -4.6M744.8 -13.4L743.8 -11.3M743.8 -11.3L748.5 -0.6M758.7 -4.6L750.0 -0.1M690.5 -27.2L699.0 -23.9M681.4 -26.3L687.3 -24.0M687.3 -24.0L690.5 -27.2M560.4 261.4L562.6 262.8M560.4 261.4L562.5 251.7L563.9 244.1M562.6 262.8L573.8 265.0M573.8 265.0L577.4 264.7M578.5 264.2L577.4 264.7M563.9 244.1L572.8 244.5L581.2 246.3L588.4 246.0M585.6 221.7L590.7 216.6M590.7 216.6L599.2 220.8M1072.4 143.3L1073.5 144.4M1086.3 129.7L1086.7 136.2L1085.5 144.7M1081.3 147.0L1085.5 144.7M1081.3 147.0L1077.5 147.2M1073.5 144.4L1077.5 147.2M1188.4 40.5L1187.2 49.0L1184.0 57.1M1209.1 77.3L1212.1 73.5M1209.1 77.3L1199.4 74.8L1190.4 73.5M1151.0 53.6L1151.5 56.1M1118.8 112.8L1121.6 116.8M1118.8 112.8L1125.0 105.0L1132.1 97.5M1121.6 116.8L1132.2 119.9M1139.5 122.0L1141.6 122.6M1108.8 109.7L1118.8 112.8M1011.0 273.4L1012.7 273.0M1011.0 273.4L1009.4 272.4M976.8 257.2L980.0 253.1M976.8 257.2L967.5 253.7M967.4 249.9L967.5 253.7M967.4 249.9L978.7 249.2M978.7 249.2L980.0 253.1M992.4 262.5L985.7 266.3M992.4 262.5L993.0 263.1M993.5 270.6L988.4 270.6M985.7 266.3L988.4 270.6M994.1 271.0L993.4 277.0M987.3 276.9L993.4 277.0M987.3 276.9L986.0 275.2M988.4 270.6L986.0 275.2M977.3 258.3L983.7 260.3M977.3 258.3L975.6 265.1M975.6 265.1L982.6 266.3M983.7 260.3L983.9 265.7M983.9 265.7L982.6 266.3M985.4 258.4L983.7 260.3M985.3 253.9L980.0 253.1M976.8 257.2L977.3 258.3M992.4 262.5L992.0 260.3M985.7 266.3L983.9 265.7M981.0 272.2L982.6 266.3M981.0 272.2L984.3 275.1M984.3 275.1L986.0 275.2M976.8 276.2L974.9 276.5M976.8 276.2L978.2 272.8M978.2 272.8L972.6 267.1M969.3 270.6L969.7 267.5M969.7 267.5L972.6 267.1M979.9 279.7L976.8 276.2M979.9 279.7L984.3 275.1M981.0 272.2L978.2 272.8M975.6 265.1L972.6 267.1M962.9 261.9L969.7 267.5M962.9 261.9L960.3 262.4M962.9 261.9L967.5 253.7M1003.6 260.1L1001.9 258.8M1000.9 256.4L1008.1 251.7M1000.9 256.4L1001.9 258.8M1008.1 251.7L1008.9 252.2M1005.1 266.3L1005.0 263.7M997.5 263.7L1001.9 258.8M997.6 254.1L1000.9 256.4M979.9 279.7L979.9 281.7M976.2 283.3L979.9 281.7M989.5 311.5L987.4 317.5M985.5 307.2L983.2 310.4M987.4 317.5L983.2 310.4M987.9 321.2L987.4 317.5M993.4 277.0L994.0 277.9M1000.5 271.6L998.7 278.8M994.0 277.9L998.7 278.8M955.6 230.0L951.8 227.6M955.6 230.0L956.8 234.1M951.8 227.6L948.6 229.7M948.6 229.7L950.2 234.5M950.2 234.5L956.8 234.1M383.7 300.9L381.7 297.4M398.0 323.9L403.5 322.7M398.0 323.9L397.7 324.9M328.2 253.3L327.1 254.5M321.9 250.1L327.1 254.5M244.0 258.0L250.2 264.9M244.0 258.0L240.9 260.8M246.2 269.7L250.2 264.9M246.2 269.7L242.1 268.6M240.9 260.8L242.1 268.6M738.0 319.2L731.3 311.0M738.0 319.2L732.1 322.8L726.7 327.2L720.7 331.2M731.3 311.0L725.1 319.1L718.3 326.4M720.7 331.2L718.3 326.4M731.5 307.6L731.3 311.0M731.5 307.6L745.3 309.6M739.1 319.5L738.0 319.2M691.9 302.9L699.8 299.8M691.9 302.9L695.0 311.6L696.6 321.6M699.8 299.8L706.9 305.5L712.1 312.3M696.6 321.6L704.6 321.2L711.3 319.5M711.3 319.5L712.1 312.3M687.9 301.6L684.2 291.5M687.9 301.6L691.9 302.9M700.2 282.9L703.7 293.0M703.7 293.0L699.8 299.8M688.6 328.7L696.6 321.6M718.3 326.4L711.3 319.5M550.5 262.2L556.7 262.7M556.7 262.7L554.5 276.3M546.6 276.8L548.2 278.5M554.5 276.3L553.4 277.6M548.2 278.5L553.4 277.6M598.2 318.1L597.8 324.3L597.4 332.4M598.2 318.1L606.5 319.5M606.8 319.9L602.3 332.4M596.8 316.2L591.3 318.3M596.8 316.2L598.2 318.1M591.3 318.3L591.7 330.8M591.7 330.8L592.6 332.4M613.3 319.8L606.8 319.9M577.4 325.6L582.3 324.0M582.3 324.0L591.7 330.8M661.9 332.4L657.5 327.0M663.7 332.4L664.7 331.5M662.2 317.7L665.2 319.2M662.2 317.7L658.0 322.4M658.0 322.4L657.5 327.0M664.7 331.5L665.2 319.2M688.6 328.7L680.7 324.3M664.7 331.5L673.2 327.5L680.7 324.3M671.7 303.5L664.7 308.7M671.7 303.5L678.1 308.2M678.1 308.2L677.0 316.0M664.7 308.7L664.8 311.8M664.8 311.8L671.7 315.9M677.0 316.0L671.7 315.9M687.9 301.6L678.1 308.2M680.7 324.3L677.0 316.0M662.2 317.7L661.1 314.6M661.1 314.6L664.8 311.8M665.2 319.2L671.7 315.9M671.7 303.5L671.2 302.5M671.2 302.5L671.0 295.9M671.0 295.9L673.0 290.5M675.3 288.2L673.0 290.5M663.2 268.6L653.2 274.3M653.2 274.3L641.7 270.4M599.2 220.8L604.1 216.6M634.7 195.7L641.6 190.8M635.7 185.7L638.0 185.5M640.9 185.6L641.6 190.8M646.6 198.8L646.1 191.9M649.0 189.1L646.1 191.9M646.1 191.9L641.6 190.8M612.0 273.8L610.0 279.1M612.0 273.8L617.0 273.5M610.0 279.1L616.8 279.8M617.0 273.5L617.8 278.3M617.8 278.3L616.8 279.8M623.5 278.4L617.8 278.3M623.5 278.4L626.2 272.9M626.2 272.9L624.8 261.1M624.8 261.1L620.0 266.3L617.0 273.5M612.0 273.8L603.7 263.2M603.2 261.4L603.7 263.2M609.0 279.6L610.0 279.1M609.0 279.6L603.7 275.8M603.7 263.2L603.7 275.8M573.8 265.0L571.8 277.2M577.4 264.7L578.7 277.3M578.7 277.3L573.9 279.4M571.8 277.2L573.9 279.4M577.4 286.1L582.7 284.0M577.4 286.1L573.5 282.3M582.7 284.0L581.7 279.1M581.7 279.1L578.7 277.3M573.5 282.3L573.9 279.4M828.1 226.8L822.4 221.5M828.1 226.8L824.2 231.4M822.4 221.5L814.8 225.6M815.1 229.5L814.2 228.7M814.2 228.7L814.8 225.6M831.2 226.8L828.1 226.8M823.1 215.9L822.4 221.5M809.7 218.0L814.8 225.6M812.8 229.7L814.2 228.7M828.8 175.0L824.0 171.9M819.4 180.8L821.6 173.3M824.0 171.9L821.6 173.3M811.3 180.3L813.2 170.8M821.6 173.3L813.2 170.8M790.1 184.1L787.6 175.9M792.4 174.5L787.6 175.9M768.6 211.3L764.7 204.2M774.2 203.7L767.3 201.2M764.7 204.2L767.3 201.2M748.9 144.2L750.3 145.7M751.4 146.3L759.5 144.4M759.5 144.4L761.9 136.2M756.4 134.6L761.9 136.2M760.6 145.8L759.6 152.7M760.6 145.8L759.5 144.4M781.2 197.7L781.9 194.6M781.9 194.6L788.3 186.6M787.6 175.9L784.3 176.5M788.3 186.6L783.3 183.8M783.3 183.8L782.4 181.1M784.3 176.5L782.4 181.1M754.5 235.4L748.3 234.8M738.5 233.9L726.6 232.8M754.0 224.8L747.3 220.0M747.3 220.0L743.9 220.0M716.7 258.0L712.3 263.9M703.7 293.0L717.5 294.3M718.0 276.6L719.0 277.1M719.0 277.1L723.0 284.3M723.0 284.3L717.5 294.3M731.5 307.6L730.3 304.9M712.1 312.3L719.9 302.2M730.3 304.9L719.9 302.2M717.5 294.3L719.9 302.2M771.5 275.6L770.3 275.7M764.6 295.0L762.0 281.4M764.1 279.8L762.0 281.4M730.7 259.8L730.7 266.1M730.7 259.8L735.9 253.1M730.7 266.1L736.9 271.1L743.5 277.0M735.9 253.1L747.7 255.2M743.5 277.0L748.0 269.1L751.2 262.8M716.7 258.0L723.7 258.4L730.7 259.8M719.0 277.1L725.5 271.6L730.7 266.1M658.3 181.8L662.7 182.3M663.3 183.9L662.7 182.3M689.9 180.0L693.0 179.2M690.0 171.8L686.9 173.6M690.0 171.8L694.0 174.4M693.0 179.2L694.0 174.4M819.0 123.8L819.9 117.5M819.9 117.5L812.4 110.7M806.4 121.5L806.8 113.1M806.8 113.1L812.4 110.7M784.2 135.4L789.9 138.1M784.2 135.4L786.4 124.9M800.1 126.4L793.9 121.7M786.4 124.9L793.9 121.7M798.2 71.1L788.9 66.2M798.2 71.1L798.6 78.0M798.6 78.0L790.4 80.7M790.4 80.7L783.8 77.2M783.5 76.5L785.7 67.5M785.7 67.5L788.9 66.2M793.6 58.0L788.9 66.2M793.6 58.0L789.4 49.1M789.4 49.1L781.0 49.7M781.0 49.7L779.5 62.7M779.5 62.7L785.7 67.5M802.5 58.7L806.1 63.2M802.5 58.7L805.8 45.7M806.1 63.2L814.5 58.8M814.5 58.8L816.2 49.4M805.8 45.7L816.2 49.4M805.9 65.2L806.1 63.2M805.9 65.2L798.2 71.1M793.6 58.0L802.5 58.7M805.0 44.7L805.8 45.7M793.5 44.3L789.4 49.1M829.4 58.5L821.3 64.1M817.4 48.9L816.2 49.4M821.3 64.1L814.5 58.8M763.7 130.3L759.5 123.7M753.9 132.8L751.6 127.6M759.5 123.7L751.6 127.6M773.4 121.2L760.4 120.2M773.4 121.2L774.8 119.4M774.8 119.4L766.6 111.2M760.4 120.2L759.7 118.5M759.7 118.5L762.2 112.2M766.6 111.2L762.2 112.2M772.5 125.5L773.4 121.2M759.5 123.7L760.4 120.2M784.2 135.4L780.8 136.3M780.8 136.3L776.6 134.6M776.6 118.5L786.4 124.9M776.6 118.5L774.8 119.4M770.1 87.2L780.1 88.9M770.1 87.2L769.5 78.6M780.1 88.9L783.8 77.2M783.5 76.5L771.3 76.7M771.3 76.7L769.5 78.6M779.5 62.7L770.2 64.4M771.3 76.7L770.2 64.4M780.1 88.9L782.9 93.1M790.4 80.7L791.4 88.6M782.9 93.1L791.4 88.6M800.4 79.4L801.0 90.1M800.4 79.4L798.6 78.0M801.0 90.1L796.9 91.5M796.9 91.5L791.4 88.6M650.1 155.8L649.5 149.1M647.3 149.5L649.5 149.1M639.9 139.3L642.4 145.0M639.9 139.3L632.6 143.7M632.5 146.7L632.6 143.7M632.5 146.7L638.6 150.4M642.4 145.0L641.6 148.6M628.7 150.1L628.7 153.0M628.7 150.1L632.5 146.7M589.0 200.1L584.6 207.6M589.0 200.1L596.3 202.1M596.3 202.1L599.1 206.6M584.6 207.6L590.7 213.2M590.7 213.2L599.0 207.3M587.7 197.1L589.0 200.1M587.7 197.1L586.3 196.9M578.7 208.7L584.6 207.6M578.7 208.7L575.4 207.2M585.6 221.7L580.3 218.6M580.3 218.6L578.7 208.7M590.7 216.6L590.7 213.2M604.1 216.6L599.0 207.3M606.4 192.2L605.9 194.6M605.1 182.7L606.6 179.7M600.3 194.8L605.9 194.6M600.3 194.8L596.3 202.1M599.1 206.6L605.4 203.0L613.2 201.5M596.8 158.2L597.1 153.5M605.8 138.5L607.5 138.9M607.5 138.9L609.2 141.6M609.2 141.6L606.4 143.9M922.5 248.3L930.5 249.8M917.4 266.1L920.2 265.2M930.5 249.8L929.5 256.9M965.9 196.9L956.1 195.8M950.0 181.1L949.0 183.1M956.1 195.8L953.6 188.7L949.0 183.4M908.6 240.3L905.5 237.0M905.5 237.0L911.3 230.8M917.6 239.4L915.3 231.1M911.3 230.8L915.3 231.1M987.4 251.9L984.2 246.8M978.7 249.2L980.2 246.4M984.2 246.8L980.2 246.4M967.0 248.5L967.4 249.9M967.0 248.5L973.2 242.2M973.2 242.2L978.9 243.3M980.2 246.4L978.9 243.3M981.1 239.9L978.9 243.3M981.1 239.9L984.6 239.1M984.2 246.8L987.6 242.7M984.6 239.1L987.6 242.7M991.7 245.8L989.1 242.9M995.6 245.1L996.7 241.0M996.7 241.0L993.0 238.0M993.0 238.0L989.1 242.9M989.1 242.9L987.6 242.7M983.7 214.1L985.3 224.6M989.0 208.8L997.7 212.8M997.7 212.8L993.0 220.3L990.4 226.3M985.3 224.6L990.4 226.3M997.3 227.5L991.5 227.7M997.3 227.5L998.2 220.4L999.6 213.1M999.6 213.1L997.7 212.8M990.4 226.3L991.5 227.7M984.6 239.1L986.3 234.8M993.0 238.0L992.6 235.5M992.6 235.5L990.7 233.8M986.3 234.8L990.7 233.8M955.0 72.7L953.2 80.5L954.1 90.8L952.8 99.1M975.0 101.4L969.8 102.8M969.8 102.8L960.6 101.1L952.8 99.1M938.5 102.4L944.9 103.8M952.8 99.1L944.9 103.8M936.2 129.9L927.6 129.5M940.6 126.8L943.3 117.4L945.4 107.4M927.6 129.5L923.0 122.3L920.0 114.0M944.9 103.8L945.4 107.4M1012.6 199.5L1006.0 205.4L1001.5 212.8M999.6 213.1L1000.9 213.0M1015.7 217.4L1007.6 216.9M1015.7 217.4L1016.5 224.3M1016.5 224.3L1010.1 224.2M1007.6 216.9L1010.1 224.2M1024.2 198.6L1027.3 207.4M1027.3 207.4L1020.8 213.4L1015.7 217.4M1001.5 212.8L1007.6 216.9M1027.3 207.4L1035.4 218.1M1018.0 225.8L1016.5 224.3M1018.0 225.8L1026.8 223.1L1033.7 221.1M1035.4 218.1L1033.7 221.1M999.2 248.5L1001.9 247.0M1008.1 251.7L1007.3 249.4M1001.9 247.0L1007.3 249.4M927.6 129.5L920.6 139.5M901.0 132.6L901.4 134.5M902.2 138.0L902.7 139.8M920.6 139.5L911.0 140.0L902.7 139.8M941.5 144.7L936.2 147.7L929.2 152.8M920.6 139.5L924.3 146.1L929.2 152.8M875.2 149.8L877.3 150.9M877.3 150.9L884.6 147.3L893.6 144.2L902.1 140.9M902.1 140.9L902.7 139.8M939.0 165.9L927.9 163.3M948.3 145.8L954.1 152.1M929.2 152.8L927.9 163.3M925.1 182.8L925.9 173.3L927.5 163.6M925.1 182.8L927.9 185.0M949.0 183.1L941.3 183.0L934.1 184.4L927.9 185.0M850.9 206.4L859.4 206.8M863.7 195.0L859.4 206.8M863.5 171.4L871.2 173.1M877.3 150.9L879.8 156.9M879.8 156.9L875.6 164.2L871.2 173.1M895.7 247.6L898.1 234.4M880.5 242.0L889.3 237.9L896.2 232.9M896.2 232.9L898.1 234.4M905.5 237.0L900.3 234.7M898.1 234.4L900.3 234.7M733.6 12.1L726.9 18.1M733.6 12.1L742.3 20.0M726.9 18.1L733.6 25.6M733.6 25.6L740.9 22.4M742.3 20.0L740.9 22.4M724.4 18.0L720.2 14.2M724.4 18.0L726.9 18.1M720.2 14.2L723.8 7.7M733.6 12.1L733.2 9.5M733.2 9.5L723.8 7.7M712.0 9.0L716.3 2.6M712.0 9.0L719.2 14.2M716.3 2.6L723.0 4.9M719.2 14.2L720.2 14.2M723.0 4.9L723.8 7.7M766.7 34.5L765.6 44.2M766.7 34.5L769.1 32.4M769.1 32.4L779.0 36.0M779.0 36.0L778.5 48.0M765.6 44.2L771.8 48.6M778.5 48.0L771.8 48.6M760.1 46.1L750.1 37.3M760.1 46.1L765.6 44.2M750.1 37.3L754.9 32.3M754.9 32.3L766.7 34.5M769.6 21.5L769.1 32.4M769.6 21.5L770.6 20.9M782.7 33.6L779.0 36.0M781.0 49.7L778.5 48.0M770.2 64.4L766.0 61.7M766.0 61.7L769.8 54.3L771.8 48.6M758.5 15.7L758.6 18.5M755.0 21.0L758.6 18.5M755.0 21.0L751.6 20.5M744.5 19.5L743.7 19.3M764.6 4.6L761.5 7.8M769.6 21.5L758.6 18.5M754.9 32.3L755.0 21.0M746.1 38.3L743.6 30.1L740.9 22.4M746.1 38.3L750.1 37.3M742.3 20.0L743.7 19.3M736.5 3.1L733.2 9.5M687.7 -19.6L687.3 -24.0M687.7 -19.6L693.8 -18.0M699.1 -23.7L693.8 -18.0M615.6 120.5L612.7 129.3M615.6 120.5L619.4 120.6M612.7 129.3L617.7 131.2M619.4 120.6L622.5 125.5M622.5 125.5L617.7 131.2M624.8 114.0L621.8 115.8M624.9 113.8L623.4 109.9M621.8 115.8L616.7 114.3M631.9 112.0L624.9 113.8M631.9 112.0L631.2 105.7M631.2 105.7L627.3 103.9M615.6 120.5L613.5 118.5M619.4 120.6L621.8 115.8M628.6 139.5L632.6 143.7M628.6 139.5L628.5 135.5M639.9 139.3L640.5 137.6M628.5 135.5L631.2 132.2M631.2 132.2L638.2 134.1M640.5 137.6L638.2 134.1M590.9 68.2L589.5 69.8M590.9 68.2L590.6 66.9M596.0 71.3L595.7 70.3M596.0 71.3L591.7 76.0M594.5 69.8L590.9 68.2M591.7 76.0L589.7 73.7M596.3 79.2L598.3 78.1M596.3 79.2L591.6 77.8M596.0 71.3L598.1 73.0M591.6 77.8L591.7 76.0M598.3 78.1L598.1 73.0M595.7 63.1L597.5 63.6M592.7 63.1L591.9 63.5M581.5 164.9L582.2 175.4M582.2 175.4L576.3 176.3M588.4 175.7L585.1 177.1M588.4 175.7L596.0 178.4M585.1 177.1L585.5 184.3M596.0 178.4L598.0 184.1M598.0 184.1L597.1 185.2M591.6 168.8L588.4 175.7M582.2 175.4L585.1 177.1M599.4 173.3L596.0 178.4M587.7 197.1L589.6 190.7M600.3 194.8L599.0 193.1M604.3 183.4L598.0 184.1M560.4 261.4L556.7 262.7M563.9 244.1L560.8 239.2M553.7 237.4L560.8 239.2M1097.0 129.6L1098.9 131.5M1106.4 135.1L1109.6 135.4M1121.6 116.8L1120.2 128.7M1109.6 135.4L1116.1 132.8M1120.2 128.7L1116.1 132.8M1105.7 144.2L1104.9 143.1M1105.7 144.2L1107.3 143.9M1109.6 135.4L1109.9 141.6M1107.3 143.9L1109.9 141.6M1191.7 105.8L1194.4 104.6M1209.1 77.3L1210.2 81.0M1015.4 278.4L1013.3 280.1M1016.4 282.8L1014.0 281.8M1013.3 280.1L1014.0 281.8M1011.0 273.4L1012.7 279.7M1014.8 289.9L1013.2 290.3M1011.0 288.8L1014.0 281.8M1011.4 289.4L1013.2 290.3M1009.6 292.7L1011.4 289.4M1058.9 266.2L1059.7 265.5M1059.2 264.4L1059.7 265.5M983.2 310.4L982.3 310.2M982.1 302.3L979.4 305.1M982.1 302.3L979.4 297.2M979.4 297.2L977.5 296.9M979.4 297.2L980.5 296.4M977.4 289.3L980.8 289.0M979.9 281.7L981.7 283.0M1001.8 292.6L1005.4 296.7M1001.8 292.6L1000.6 293.7M1005.7 274.9L1005.5 278.4M998.7 278.8L1000.0 280.4M1000.0 280.4L1005.5 278.4M1012.7 279.7L1007.5 280.2M1011.0 288.8L1006.1 287.2M1007.5 280.2L1006.1 287.2M1007.5 280.2L1005.5 278.4M953.6 246.2L946.5 243.2M953.6 246.2L953.1 250.1M946.5 243.2L940.1 249.4M945.2 239.4L950.2 234.5M945.2 239.4L946.5 243.2M960.2 243.1L953.6 246.2M960.2 243.1L960.8 236.9M960.8 236.9L956.8 234.1M967.0 248.5L960.2 243.1M930.5 249.8L932.7 238.8M942.0 237.0L945.2 239.4M942.0 237.0L933.2 238.5M930.5 249.8L934.1 250.4M348.8 314.1L341.8 313.9M348.8 314.1L350.3 316.1M350.3 316.1L350.2 318.2M350.2 318.2L341.9 324.9M341.8 313.9L338.3 319.6M338.3 319.6L340.6 324.9M352.8 324.9L353.5 323.6M353.5 323.6L350.2 318.2M369.0 315.7L361.3 316.9M369.0 315.7L369.5 324.0M361.3 316.9L359.5 324.0M369.5 324.0L367.1 324.9M360.1 324.9L359.5 324.0M358.2 314.4L361.3 316.9M358.2 314.4L350.3 316.1M353.5 323.6L359.5 324.0M370.6 324.9L369.5 324.0M226.5 246.8L229.6 253.2M238.0 249.6L231.4 253.6M231.4 253.6L229.6 253.2M244.7 255.9L244.0 258.0M240.9 260.8L234.5 261.2M231.4 253.6L234.5 261.2M242.1 268.6L240.7 269.6M233.5 266.2L232.7 263.6M234.5 261.2L232.7 263.6M222.2 245.0L218.6 249.4M555.5 292.0L561.9 288.5M561.9 288.5L565.7 293.3M559.6 296.8L561.1 297.8M565.7 293.3L561.1 297.8M561.3 300.0L561.1 297.8M548.5 285.0L549.9 287.2M554.4 284.0L553.4 277.6M554.4 284.0L551.7 287.4M551.7 287.4L549.9 287.2M548.2 278.5L547.5 280.2M553.5 290.2L551.7 287.4M582.3 324.0L582.7 321.1M591.3 318.3L588.6 316.7M582.7 321.1L588.6 316.7M590.7 282.8L596.8 285.1M590.7 282.8L589.2 284.0M596.8 285.1L596.5 290.2M589.2 284.0L591.1 290.8M596.5 290.2L591.1 290.8M584.3 292.7L590.5 291.6M584.3 292.7L584.0 284.7M589.2 284.0L584.0 284.7M591.1 290.8L590.5 291.6M584.5 298.2L587.2 300.1M584.5 298.2L583.6 293.6M583.6 293.6L584.3 292.7M590.5 291.6L592.2 297.8M587.2 300.1L592.2 297.8M600.1 283.3L602.8 284.9M600.1 283.3L600.0 279.0M609.0 279.6L608.5 283.1M600.0 279.0L603.7 275.8M608.5 283.1L602.8 284.9M613.3 319.8L615.2 317.2M618.7 316.6L625.5 325.8M618.7 316.6L616.8 316.4M625.5 325.8L627.8 332.4M616.8 316.4L615.2 317.2M618.7 316.6L623.1 314.2M625.5 325.8L625.0 315.5M623.1 314.2L625.0 315.5M623.2 300.0L617.8 301.4M623.2 300.0L625.1 302.4M617.8 301.4L616.5 304.4M625.1 302.4L622.5 305.5M622.5 305.5L616.5 304.4M616.8 316.4L617.5 309.3M623.1 314.2L623.2 310.5M617.5 309.3L623.2 310.5M658.0 322.4L655.3 316.9M661.1 314.6L659.8 314.2M659.8 314.2L655.3 316.9M653.9 305.0L655.1 309.7M654.1 304.6L660.7 305.0M655.1 309.7L657.9 310.7M657.9 310.7L661.6 307.0M660.7 305.0L661.6 307.0M664.7 308.7L661.6 307.0M659.8 314.2L657.9 310.7M671.2 302.5L662.3 301.4M662.3 301.4L660.7 305.0M664.6 270.3L664.6 271.5M675.3 288.2L672.1 285.7M664.6 271.5L668.5 278.3L672.1 285.7M627.4 287.7L629.9 291.2M627.4 287.7L622.6 289.8M629.9 291.2L627.8 295.2M622.6 289.8L623.9 295.6M627.8 295.2L623.9 295.6M626.2 272.9L630.3 277.0M640.2 273.5L641.5 271.0M640.2 273.5L637.5 275.9M637.5 275.9L630.3 277.0M627.5 287.3L631.1 283.3M627.5 287.3L623.6 283.0M623.6 283.0L624.3 280.5M624.3 280.5L629.8 281.2M629.8 281.2L631.1 283.3M619.7 284.9L623.6 283.0M619.7 284.9L621.3 289.3M621.3 289.3L622.6 289.8M617.3 283.9L616.8 279.8M617.3 283.9L619.7 284.9M623.5 278.4L624.3 280.5M630.3 277.0L629.8 281.2M640.9 285.9L640.0 289.0M640.9 285.9L634.9 283.3M640.0 289.0L634.2 291.2M634.9 283.3L634.0 283.6M634.0 283.6L634.2 291.2M642.0 285.2L640.2 273.5M642.0 285.2L640.9 285.9M637.5 275.9L634.9 283.3M631.1 283.3L634.0 283.6M629.9 291.2L634.2 291.2M647.8 287.9L653.8 286.4M647.8 287.9L645.8 285.2M645.8 285.2L647.4 282.4M647.4 282.4L650.3 281.2M650.3 281.2L654.6 284.9M654.6 284.9L653.8 286.4M651.1 292.4L647.8 288.9M651.1 292.4L655.2 291.4M647.8 288.9L647.8 287.9M655.2 291.4L653.8 286.4M642.2 293.1L644.2 293.7M642.2 293.1L640.0 289.0M642.0 285.2L645.8 285.2M644.2 293.7L647.8 288.9M641.5 271.0L647.4 282.4M653.2 274.8L650.3 281.2M594.1 269.1L595.5 277.0M594.1 269.1L587.5 270.2M586.9 274.5L587.5 270.2M586.9 274.5L591.0 280.9M591.0 280.9L595.5 277.0M603.2 261.4L594.1 269.1M600.0 279.0L595.5 277.0M578.5 264.2L587.5 270.2M581.7 279.1L586.9 274.5M590.7 282.8L591.0 280.9M582.7 284.0L584.0 284.7M600.1 283.3L596.8 285.1M568.3 284.3L565.5 277.7M568.3 284.3L562.1 287.0M560.4 284.2L561.3 279.9M560.4 284.2L562.1 287.0M561.3 279.9L565.1 277.5M571.8 277.2L565.5 277.7M573.5 282.3L568.8 284.5M554.5 276.3L561.3 279.9M554.4 284.0L560.4 284.2M561.9 288.5L562.1 287.0M562.6 262.8L564.9 269.8L565.1 277.5M780.7 198.1L773.2 194.5M767.3 201.2L767.1 197.2M773.2 194.5L767.1 197.2M837.8 167.4L832.7 164.5L826.2 159.4M829.5 152.5L826.5 155.2M826.2 159.4L826.5 155.2M824.0 171.9L825.6 160.2M826.2 159.4L825.6 160.2M813.2 170.8L810.7 166.7M825.6 160.2L812.8 164.2M815.6 144.8L817.5 149.9M826.5 155.2L817.5 149.9M803.2 144.9L803.5 153.9M806.2 156.3L807.0 157.0M817.5 149.9L807.0 157.0M807.0 157.0L807.8 161.2M755.7 195.0L756.4 198.3M755.7 195.0L759.7 189.5M756.4 198.3L764.8 194.8M759.7 189.5L764.7 194.5M748.3 194.0L748.3 197.7M748.3 194.0L753.0 192.2M753.0 192.2L755.7 195.0M748.3 197.7L755.9 199.4M755.9 199.4L756.4 198.3M767.7 188.3L764.7 194.5M767.7 188.3L772.7 190.8M772.7 190.8L773.2 194.5M767.1 197.2L764.8 194.8M776.0 180.4L777.9 185.8M776.0 180.4L772.0 180.6M772.0 180.6L772.0 184.6M772.0 184.6L775.6 187.3M775.6 187.3L777.1 187.0M777.1 187.0L777.9 185.8M783.3 183.8L777.9 185.8M777.6 178.9L782.4 181.1M777.6 178.9L776.0 180.4M767.5 187.4L772.0 184.6M767.5 187.4L767.7 188.3M772.7 190.8L775.6 187.3M781.9 194.6L777.1 187.0M767.5 187.4L765.6 185.6M765.6 185.6L759.6 187.2M759.7 189.5L759.3 187.6M753.0 192.2L752.8 187.7M759.3 187.6L752.8 187.7M742.5 143.7L741.9 144.5M738.2 165.1L738.7 161.1M738.2 165.1L735.7 165.7M735.7 165.7L732.8 163.1M732.8 163.1L734.2 161.5M740.4 166.7L744.0 163.7M740.4 166.7L738.2 165.1M730.2 162.5L731.1 163.3M731.1 163.3L732.8 163.1M695.5 186.3L693.7 179.7M693.7 179.7L698.5 179.6M698.9 180.4L698.5 179.6M760.1 205.0L756.2 201.2M760.1 205.0L758.9 209.3M756.2 201.2L751.0 205.4M758.9 209.3L754.5 212.0M751.0 205.4L751.5 211.1M754.5 212.0L751.5 211.1M764.7 204.2L760.1 205.0M755.9 199.4L756.2 201.2M764.4 215.0L758.9 209.3M748.3 197.7L745.8 199.7M745.8 199.7L745.4 203.1M745.4 203.1L751.0 205.4M757.1 221.0L754.5 212.0M749.7 212.0L747.3 220.0M749.7 212.0L751.5 211.1M743.4 204.8L740.9 204.8M743.4 204.8L744.8 210.3M744.8 210.3L741.2 213.5M736.0 212.1L741.2 213.5M749.7 212.0L744.8 210.3M745.4 203.1L743.4 204.8M743.9 220.0L741.2 213.5M724.8 164.6L724.6 168.2M731.1 163.3L729.8 167.8M729.8 167.8L725.9 168.8M724.6 168.2L725.9 168.8M729.8 167.8L733.8 170.8M727.5 174.1L725.9 168.8M727.5 174.1L732.2 174.5M732.2 174.5L733.8 170.8M735.7 165.7L734.1 170.6M748.3 194.0L745.7 191.0M745.8 199.7L743.5 197.9M745.7 191.0L744.1 192.3M734.8 286.1L736.9 296.3M734.8 286.1L743.6 279.0M751.7 283.8L743.6 279.0M751.7 283.8L752.5 295.3M736.9 296.3L748.5 300.8M752.5 295.3L748.5 300.8M723.0 284.3L734.8 286.1M730.3 304.9L736.9 296.3M743.5 277.0L743.6 279.0M762.0 281.4L751.7 283.8M762.1 296.9L752.5 295.3M645.3 184.6L648.8 187.7M642.9 174.5L644.2 174.6M693.7 179.7L693.0 179.2M800.4 79.4L809.7 78.4M801.0 90.1L805.1 91.8M805.1 91.8L812.0 84.3M812.0 84.3L809.7 78.4M832.9 72.0L822.6 73.8M821.3 64.1L820.3 71.9M822.6 73.8L820.3 71.9M805.9 65.2L812.4 73.1M820.3 71.9L812.4 73.1M809.7 78.4L812.4 73.1M836.0 76.0L832.5 85.5M822.6 73.8L823.3 80.6M832.5 85.5L823.3 80.6M853.3 88.7L843.6 87.8L833.6 88.7M832.5 85.5L833.6 88.7M812.0 84.3L818.2 86.7M823.3 80.6L818.2 86.7M805.1 91.8L808.5 98.1M808.5 98.1L812.5 99.5M818.2 86.7L819.9 92.2M812.5 99.5L819.9 92.2M833.6 88.7L829.7 95.3M819.9 92.2L829.7 95.3M777.8 102.6L782.6 98.2M777.8 102.6L780.3 111.7M782.6 98.2L793.5 101.9M780.3 111.7L793.4 112.4M793.5 101.9L796.8 107.3M793.4 112.4L796.8 107.8M771.2 101.4L777.8 102.6M771.2 101.4L767.0 91.0M767.0 91.0L770.1 87.2M782.9 93.1L782.6 98.2M771.2 101.4L770.2 102.2M776.6 118.5L780.3 111.7M770.2 102.2L766.6 111.2M796.9 91.5L793.5 101.9M793.9 121.7L793.4 112.4M808.5 98.1L803.0 102.1L796.8 107.3M806.8 113.1L796.8 107.8M812.4 110.7L814.3 103.3M814.3 103.3L812.5 99.5M628.6 139.5L621.4 143.9M628.7 150.1L621.0 146.8M621.4 143.9L621.0 146.8M618.6 133.4L628.5 135.5M618.6 133.4L617.6 138.2M621.4 143.9L617.6 138.2M612.7 129.3L611.1 129.3M609.8 130.2L611.1 129.3M609.8 130.2L607.5 138.9M618.6 133.4L617.7 131.2M617.6 138.2L609.7 141.8M641.8 167.9L645.5 168.0M652.2 157.8L655.3 156.0M661.7 162.1L661.4 163.7M661.7 162.1L659.3 157.1M659.3 157.1L655.3 156.0M650.5 142.1L654.1 141.9M650.5 142.1L649.6 143.9M649.6 143.9L650.1 148.4M655.5 142.7L654.1 141.9M650.1 148.4L656.3 149.8M649.5 149.1L650.1 148.4M642.4 145.0L649.6 143.9M655.3 156.0L656.3 149.8M955.6 230.0L959.8 220.8M951.8 227.6L951.7 222.6M951.7 222.6L959.8 220.8M960.8 236.9L965.5 232.8M964.4 222.3L965.5 232.8M964.4 222.3L960.3 220.5M918.0 239.6L921.7 236.5M932.7 238.8L928.3 235.7M921.7 236.5L928.3 235.7M915.3 231.1L917.9 227.5M921.8 230.2L921.7 236.5M921.8 230.2L918.6 227.5M1000.9 213.0L1004.0 226.4M1010.1 224.2L1008.2 227.6M1004.0 226.4L1008.2 227.6M997.3 227.5L999.6 229.5M1004.0 226.4L999.6 229.5M973.2 242.2L972.9 237.2M981.1 239.9L978.3 236.0M972.9 237.2L978.3 236.0M965.5 232.8L969.4 233.4M972.9 237.2L969.4 233.4M966.7 138.4L972.5 133.7L976.7 127.5M966.7 138.4L957.3 130.4M957.3 130.4L959.1 124.7M959.1 124.7L966.5 120.6M976.7 127.5L966.5 120.6M979.6 127.2L976.7 127.5M968.4 146.9L966.7 138.4M953.8 132.0L957.3 130.4M945.4 107.4L949.7 113.5L955.7 119.9L959.1 124.7M969.8 102.8L968.0 110.8L966.5 120.6M1016.0 245.5L1024.1 244.9L1031.2 245.1M1016.0 245.5L1015.1 250.2M1018.6 252.5L1020.4 252.3M1030.3 248.4L1031.2 245.1M1042.3 244.3L1032.2 243.5M1032.2 243.5L1031.2 245.1M1018.0 225.8L1017.0 230.1M1008.9 229.8L1008.2 227.6M1008.9 229.8L1016.0 231.1M1016.0 231.1L1017.0 230.1M1033.7 221.1L1032.4 228.2L1030.6 236.0M1017.0 230.1L1024.2 233.2L1030.6 236.0M1032.2 243.5L1030.7 239.4M1016.0 245.5L1015.0 244.3M1030.7 239.4L1023.1 237.4L1015.7 237.3M1015.0 244.3L1015.7 237.3M1007.3 249.4L1009.8 244.3M1015.0 244.3L1009.8 244.3M1016.0 231.1L1015.4 237.0M1030.6 236.0L1030.7 239.4M1001.9 247.0L1003.0 242.0M1009.8 244.3L1008.3 242.4M1003.0 242.0L1008.3 242.4M1015.4 237.0L1009.6 237.1M1008.3 242.4L1009.6 237.1M1087.0 153.6L1090.7 156.5M1087.0 152.9L1090.6 150.4M1093.9 153.3L1090.6 150.4M1093.9 153.3L1093.3 156.1M1090.7 156.5L1093.3 156.1M1081.3 147.0L1087.0 152.9M1077.9 151.6L1077.5 147.2M1077.9 151.6L1082.3 157.7M1087.0 153.6L1083.4 157.8M1083.4 157.8L1082.3 157.7M1046.3 188.9L1051.1 190.1M1051.1 190.1L1053.1 193.7M1041.1 218.3L1035.4 218.1M1041.1 218.3L1047.7 211.7L1055.4 203.8M1055.4 203.8L1055.4 201.8M1053.6 194.5L1055.4 201.8M902.1 140.9L905.3 150.7L906.4 158.7M927.5 163.6L915.1 163.0M906.4 158.7L915.1 163.0M925.1 182.8L917.9 185.7M917.9 185.7L908.2 178.5M915.1 163.0L910.7 170.1L908.2 178.5M915.0 190.6L917.9 185.7M915.0 190.6L904.2 191.2M904.2 191.2L901.6 188.7M901.6 188.7L904.1 178.6M908.2 178.5L904.1 178.6M863.7 195.0L864.8 194.8M859.4 206.8L863.3 210.5M864.8 194.8L872.9 199.8M872.9 199.8L874.1 205.3M863.3 210.5L874.1 205.3M911.3 230.8L910.1 226.8M900.3 234.7L907.5 226.3M910.1 226.8L907.5 226.3M949.0 183.4L945.5 191.5L939.8 199.3M927.9 185.0L931.6 196.1M939.8 199.3L931.6 196.1M956.1 195.8L951.8 203.2M951.8 203.2L941.4 202.2M939.8 199.3L941.4 202.2M915.0 190.6L915.4 200.8M915.4 200.8L926.2 201.9M931.6 196.1L926.2 201.9M667.9 -13.3L668.7 -8.8M662.1 -5.4L668.7 -8.8M681.4 -26.3L679.2 -24.9M679.2 -24.9L677.0 -25.6M687.7 -19.6L683.9 -15.4M693.8 -18.0L694.9 -12.2M694.9 -12.2L687.2 -9.6M687.2 -9.6L683.9 -15.4M679.2 -24.9L678.8 -16.3M683.9 -15.4L678.8 -16.3M671.9 -18.6L678.8 -16.2M713.4 -2.7L715.0 -1.9M713.4 -2.7L705.0 1.4M715.0 -1.9L716.3 2.6M712.0 9.0L709.5 9.2M709.5 9.2L705.0 1.4M641.2 77.0L644.8 76.1M642.4 85.5L644.4 85.1M644.4 85.1L647.5 77.9M644.8 76.1L647.5 77.9M720.1 -4.8L720.3 -9.7M720.1 -4.8L726.9 -1.6M720.3 -9.7L727.2 -13.5M726.9 -1.6L732.2 -3.6M729.1 -13.4L733.0 -7.2M729.1 -13.4L727.2 -13.5M732.4 -4.5L732.2 -3.6M710.9 -8.8L715.8 -12.6M710.9 -8.8L713.4 -2.7M715.0 -1.9L720.1 -4.8M715.8 -12.6L720.3 -9.7M723.0 4.9L726.9 -1.6M715.8 -12.6L715.8 -17.0M715.8 -17.0L720.3 -19.0M720.3 -19.0L727.2 -13.5M736.5 3.1L732.2 -3.6M741.9 -20.0L732.8 -22.8M743.8 -11.3L733.0 -7.2M732.8 -22.8L729.1 -13.4M732.8 -22.8L731.7 -25.2M731.7 -25.2L721.6 -23.3M721.6 -23.3L720.3 -19.0M695.3 -12.0L704.1 -14.3M695.3 -12.0L697.5 -5.5M701.8 -3.7L697.5 -5.5M701.8 -3.7L706.3 -10.4M706.3 -10.4L704.7 -14.0M699.1 -23.7L700.1 -23.4M700.1 -23.4L704.1 -14.3M690.6 -1.4L697.5 -5.5M690.6 -1.4L693.2 5.0M698.5 4.3L703.2 0.6M703.2 0.6L701.8 -3.7M710.9 -8.8L706.3 -10.4M705.0 1.4L703.2 0.6M711.9 -19.8L715.8 -17.0M711.9 -19.8L704.7 -14.0M706.0 -25.5L711.2 -23.3M711.2 -23.3L716.9 -29.1M700.1 -23.4L706.0 -25.5M711.9 -19.8L711.2 -23.3M721.6 -23.3L716.9 -29.1M645.2 100.8L641.8 95.5M645.2 100.8L651.0 95.7M651.0 95.7L650.4 93.4M643.8 92.3L647.3 90.7M645.2 101.3L651.1 104.3M651.1 104.3L654.9 101.5M654.9 101.5L653.5 96.9M653.5 96.9L651.0 95.7M644.4 85.1L646.2 87.3M647.5 77.9L648.8 78.0M638.6 104.6L642.7 104.2M638.6 104.6L636.2 114.1M642.7 104.2L645.0 110.2M645.0 110.2L641.6 114.4M641.6 114.4L636.4 114.4M645.2 101.3L642.7 104.2M634.8 97.6L636.3 103.2M636.3 103.2L638.6 104.6M631.9 112.0L636.2 114.1M631.2 105.7L636.3 103.2M651.0 111.1L645.0 110.2M651.0 111.1L652.0 110.5M651.1 104.3L652.0 110.5M625.3 125.2L630.9 130.4M625.3 125.2L628.0 120.6M630.9 130.4L636.2 122.8M628.0 120.6L634.9 120.4M634.9 120.4L636.2 122.8M622.5 125.5L625.3 125.2M631.2 132.2L630.9 130.4M624.8 114.0L628.0 120.6M638.2 134.1L642.1 125.5M642.1 125.5L636.2 122.8M636.4 114.4L634.9 120.4M650.5 142.1L648.8 139.2M648.8 139.2L641.0 137.5M609.8 130.2L602.2 130.0M601.0 132.0L602.2 130.0M638.4 64.8L637.6 62.2M637.6 62.2L632.7 60.2M644.6 73.2L644.8 76.1M632.7 60.2L631.0 57.1M596.3 79.2L596.4 83.9M596.4 83.9L600.6 84.3M598.3 78.1L599.2 78.4M600.6 84.3L601.7 81.0M598.1 73.0L602.1 72.6M571.8 227.8L565.6 231.0M571.8 227.8L573.4 221.7M565.6 231.0L563.3 225.1M573.4 221.7L572.1 219.9M560.8 239.2L565.6 231.0M580.3 218.6L573.4 221.7M578.3 156.6L577.2 155.2M396.2 316.1L391.9 309.9M396.2 316.1L399.8 315.1M391.9 309.9L393.1 306.8M398.0 323.9L395.0 319.5M395.0 319.5L396.2 316.1M379.4 305.1L379.8 309.0M379.4 305.1L383.7 300.9M385.9 313.2L379.8 309.0M385.9 313.2L391.9 309.9M1077.9 151.6L1074.4 157.6M1073.5 144.4L1069.7 157.1M1074.4 157.6L1071.5 158.0M1069.7 157.1L1071.5 158.0M1058.3 151.7L1060.9 156.9M1047.1 166.1L1056.4 169.0M1058.8 166.7L1060.9 156.9M1071.5 162.9L1071.5 158.0M1071.5 162.9L1068.5 163.4M1069.7 157.1L1064.2 157.7M1068.5 163.4L1064.2 157.7M1060.9 156.9L1064.2 157.7M1099.4 152.3L1099.9 155.3M1093.9 153.3L1096.6 151.5M1095.5 158.8L1093.3 156.1M1098.8 151.8L1096.6 151.5M1093.1 130.6L1092.7 139.8M1086.3 144.8L1092.7 139.8M1116.1 132.8L1115.7 141.6M1109.9 141.6L1113.7 143.3M1115.7 141.6L1113.7 143.3M1058.8 275.6L1058.5 276.6M1058.8 275.6L1057.1 273.7M1062.3 263.5L1060.3 265.4M1060.3 265.4L1064.3 268.6M1058.8 270.5L1062.4 272.0M1041.1 218.3L1047.0 223.8L1054.2 230.7M1063.0 210.5L1055.4 203.8M1056.1 229.8L1054.2 230.7M1054.2 230.7L1053.5 235.1M1059.9 247.2L1059.4 246.3M1059.4 246.3L1058.4 246.1M987.3 276.9L987.0 281.7M994.0 277.9L992.2 282.8M992.2 282.8L987.0 281.7M987.0 281.7L985.4 283.2M999.8 282.9L1004.5 287.7M999.8 282.9L994.1 286.5M993.7 288.2L994.1 286.5M993.7 288.2L1001.8 291.5M1001.8 291.5L1004.5 287.7M1000.0 280.4L999.8 282.9M1006.1 287.2L1004.5 287.7M992.2 282.8L994.1 286.5M992.6 289.3L993.7 288.2M1001.8 292.6L1001.8 291.5M369.5 315.2L367.4 308.2M358.2 314.4L359.2 306.5M359.2 306.5L367.4 308.2M349.5 307.3L358.1 304.8M349.5 307.3L348.8 314.1M359.2 306.5L358.1 304.8M369.5 315.2L374.1 314.7M379.4 305.1L371.4 301.6M374.1 314.7L379.8 309.0M367.4 308.2L371.4 301.6M376.4 293.5L370.8 299.9M371.4 301.6L370.8 299.9M337.6 307.4L341.8 313.9M337.6 307.4L339.0 304.9M349.5 307.3L346.3 303.8M339.0 304.9L346.3 303.8M250.2 264.9L255.7 264.7M255.7 264.7L256.3 262.9M327.0 255.1L328.9 256.8M321.9 250.1L321.0 252.3M327.0 255.1L325.0 256.9M324.2 256.9L322.8 256.2M321.4 249.8L319.1 249.1M319.1 249.1L317.5 250.2M313.9 249.2L314.3 246.9M308.9 247.8L310.1 245.3M304.8 246.9L304.2 245.3M227.3 263.8L222.3 258.0M222.3 258.0L220.6 257.9M229.6 253.2L222.3 258.0M232.7 263.6L228.4 264.1M218.8 253.0L220.6 257.9M583.6 293.6L577.6 292.5M577.4 286.1L576.3 289.2M577.6 292.5L576.3 289.2M568.8 284.5L570.4 289.7M576.3 289.2L570.4 289.7M565.7 293.3L567.7 293.6M570.4 289.7L567.7 293.6M582.7 321.1L579.9 316.3M579.9 316.3L577.4 316.0M567.8 307.1L569.0 304.9M569.0 304.9L574.8 311.4M588.6 316.7L587.6 313.4M579.9 316.3L583.4 311.3M587.6 313.4L583.4 311.3M580.2 307.5L574.8 311.4M580.2 307.5L582.2 308.4M582.2 308.4L583.4 311.3M596.8 316.2L597.2 314.1M606.5 319.5L605.8 313.4M605.8 313.4L603.0 312.0M597.2 314.1L603.0 312.0M623.2 300.0L623.7 295.7M625.1 302.4L627.8 302.9M627.8 295.2L630.2 298.4M630.2 298.4L627.8 302.9M637.2 318.9L630.6 325.8M637.2 318.9L635.9 315.6M630.6 325.8L630.9 318.5M635.9 315.6L634.2 314.9M634.2 314.9L630.9 318.5M628.3 332.4L630.6 325.8M625.0 315.5L627.8 315.1M627.8 315.1L630.9 318.5M644.2 293.7L646.1 296.9M651.1 292.4L650.1 295.3M650.1 295.3L646.1 296.9M655.3 316.9L653.1 316.3M655.1 309.7L652.8 312.1M653.1 316.3L652.8 312.1M664.6 271.5L662.7 279.3M672.1 285.7L664.9 283.5M662.7 279.3L664.9 283.5M653.2 274.8L657.5 283.1M662.7 279.3L657.5 283.1M654.6 284.9L657.3 283.6M673.0 290.5L663.9 290.1M664.9 283.5L661.7 287.6M663.9 290.1L661.7 287.6M655.2 291.4L656.4 292.1M657.3 283.6L660.5 287.3M656.4 292.1L660.5 287.3M661.7 287.6L660.5 287.3M787.6 175.9L786.5 169.2M786.5 169.2L790.4 168.9M790.4 168.9L793.2 172.9M763.8 171.4L765.4 166.2M763.8 171.4L759.6 170.8M759.0 170.0L759.6 170.8M759.0 170.0L759.8 166.1M764.0 164.0L765.4 166.2M765.6 183.7L770.7 179.5M765.6 183.7L762.1 178.7M762.1 178.7L764.2 177.0M764.2 177.0L770.2 178.1M770.7 179.5L770.2 178.1M765.6 185.6L765.6 183.7M772.0 180.6L770.7 179.5M745.7 191.0L745.8 189.8M745.8 189.8L744.7 188.6M752.8 187.7L751.6 186.7M745.8 189.8L751.6 186.7M763.8 171.4L764.7 172.4M764.7 172.4L764.2 177.0M759.6 170.8L758.4 174.4M758.4 174.4L761.4 178.8M759.6 187.2L758.4 181.2M761.4 178.8L758.4 181.2M751.6 186.7L751.4 185.2M751.4 185.2L756.6 180.9M758.4 181.2L756.6 180.9M745.8 168.7L745.9 164.7M745.8 168.7L748.9 169.9M752.3 166.3L748.9 169.9M759.0 170.0L754.9 169.4M752.6 166.4L754.9 169.4M716.4 149.7L715.1 150.9M715.9 152.6L715.1 151.2M714.6 143.0L718.5 146.3M714.6 143.0L713.5 143.3M713.5 143.3L712.2 146.2M715.1 150.9L712.2 146.2M701.0 165.4L700.2 165.1M700.2 165.1L696.9 167.8M690.0 171.8L690.4 169.4M694.0 174.4L694.9 173.9M694.7 167.9L690.4 169.4M698.5 179.6L699.7 177.5M709.5 174.0L708.4 171.4M708.6 170.2L708.4 171.0M721.2 169.3L724.6 168.2M721.2 169.3L720.4 167.7M700.3 157.9L698.4 162.2M700.3 157.9L702.4 157.7M698.4 162.2L700.2 165.1M701.2 165.4L704.2 162.5M702.4 157.7L704.2 162.5M707.4 165.9L706.6 163.0M704.2 162.5L706.6 163.0M739.3 138.4L735.9 137.1M735.9 137.1L733.2 138.7M721.1 181.9L722.7 175.8M721.1 181.9L715.4 178.5M715.4 178.5L715.3 176.4M721.6 174.8L722.7 175.8M721.6 174.8L715.5 176.1M721.5 182.8L721.1 181.9M721.5 182.8L726.5 182.1M725.9 175.7L722.7 175.8M725.9 175.7L727.5 180.6M726.5 182.1L727.5 180.6M713.4 180.7L714.2 184.5M713.4 180.7L715.4 178.5M721.5 182.8L720.6 185.3M720.6 185.3L715.4 184.9M711.3 180.8L713.4 180.7M710.2 175.0L715.3 176.4M727.5 174.1L725.9 175.7M721.2 169.3L721.6 174.8M721.2 169.3L715.6 170.8M715.6 170.8L715.5 176.1M713.3 168.9L715.6 170.8M740.4 166.7L740.7 168.4M734.1 170.6L736.8 171.1M736.8 171.1L740.7 168.4M745.8 168.7L743.1 170.3M743.1 170.3L740.7 168.4M729.5 186.4L733.7 182.8M736.8 186.8L733.7 182.8M683.1 163.9L684.9 163.3M683.9 169.4L686.1 167.0M684.9 163.3L686.1 167.0M690.4 169.4L689.2 167.5M689.2 167.5L686.1 167.0M834.3 101.7L830.4 98.4M834.3 101.7L834.4 114.2M830.4 98.4L823.3 105.1M823.3 105.1L825.0 113.2M834.4 114.2L825.0 113.2M844.7 101.1L834.3 101.7M829.7 95.3L830.4 98.4M836.1 116.0L834.4 114.2M814.3 103.3L823.3 105.1M819.9 117.5L825.0 113.2M770.2 102.2L757.1 102.9M762.2 112.2L756.5 105.9M757.1 102.9L756.5 105.9M769.5 78.6L764.0 77.6M766.0 61.7L759.6 61.9M764.0 77.6L757.1 66.3M759.6 61.9L757.1 66.3M760.1 46.1L755.6 55.5M759.6 61.9L755.6 55.5M764.0 77.6L755.3 82.7M755.3 82.7L753.3 79.6M753.3 79.6L754.6 68.0M757.1 66.3L754.6 68.0M743.3 70.1L745.5 77.8M743.3 70.1L743.8 68.6M745.5 77.8L753.3 79.6M754.6 68.0L743.8 68.6M760.6 145.8L764.8 147.5M769.1 138.3L770.2 144.5M764.8 147.5L770.2 144.5M780.8 136.3L778.6 145.2M778.6 145.2L771.7 145.6M770.2 144.5L771.7 145.6M773.1 155.5L768.4 160.0M773.1 155.5L773.5 154.1M773.5 154.1L771.4 152.2M771.4 152.2L766.7 152.1M767.4 159.9L768.4 160.0M767.4 159.9L764.2 155.4M764.2 155.4L766.7 152.1M775.9 161.0L771.9 163.4M775.9 161.0L773.1 155.5M771.9 163.4L768.4 160.0M778.9 145.7L776.1 153.3M776.1 153.3L773.5 154.1M771.7 145.6L771.4 152.2M764.8 147.5L766.7 152.1M765.7 161.9L767.4 159.9M778.9 145.7L783.3 148.4M783.3 148.4L784.2 147.9M776.1 153.3L780.2 155.3M783.3 148.4L784.4 154.4M780.2 155.3L784.4 154.4M775.9 161.0L778.8 161.6M780.2 155.3L778.8 161.6M786.4 154.8L785.3 154.9M784.4 154.4L785.3 154.9M764.7 172.4L770.2 171.9M770.2 178.1L771.7 174.0M771.7 174.0L770.2 171.9M765.4 166.2L770.6 167.8M770.2 171.9L770.6 167.8M771.9 163.4L772.0 166.5M770.6 167.8L772.0 166.5M746.1 38.3L744.7 39.5M733.6 25.6L732.7 27.1M732.7 27.1L733.1 35.2M733.1 35.2L738.3 40.1M740.6 40.6L738.3 40.1M755.6 55.5L744.1 52.6M743.4 44.8L744.1 52.6M619.2 155.7L613.6 159.6M619.2 155.7L618.4 149.2M618.4 149.2L613.1 148.2M613.1 148.2L608.0 153.8M613.6 159.6L608.2 157.9M608.2 157.9L608.0 153.8M621.6 156.8L619.2 155.7M615.6 164.8L613.6 159.6M621.0 146.8L618.4 149.2M609.7 141.8L613.1 148.2M605.4 151.5L608.0 153.8M603.6 161.6L608.2 157.9M664.4 143.2L665.7 142.4M667.2 148.6L670.9 148.5M665.7 142.4L669.8 144.7M670.9 148.5L669.8 144.7M662.0 143.1L662.9 143.8M660.0 141.4L658.2 142.0M659.3 157.1L661.3 155.5M667.7 131.2L667.0 137.5M667.7 131.2L661.8 131.1M661.8 131.1L660.6 136.3M666.4 137.9L660.7 136.4M660.0 141.4L660.7 136.4M665.7 142.4L666.4 137.9M656.2 135.9L660.6 136.3M656.2 135.9L654.1 141.9M657.6 181.5L657.4 180.6M662.7 165.3L661.4 163.7M664.1 180.0L667.4 180.2M662.7 182.3L664.1 180.0M672.4 176.6L670.6 176.8M672.1 169.9L669.2 171.1M670.1 164.0L674.2 166.9M670.1 164.0L664.5 167.1M967.9 205.6L959.8 210.0M951.8 203.2L952.5 204.7M952.5 204.7L959.8 210.0M973.9 216.3L972.3 219.0M964.4 222.3L972.3 219.0M960.3 220.5L958.7 215.0M959.8 210.0L958.7 215.0M917.9 227.5L916.6 225.6M910.1 226.8L912.8 224.6M916.6 225.6L912.8 224.6M972.3 219.0L974.1 222.6M969.4 233.4L973.4 230.2M974.1 222.6L973.4 230.2M1001.1 239.6L998.4 233.6M1001.7 239.9L1006.8 234.6M998.4 233.6L999.9 231.1M999.9 231.1L1006.7 234.2M996.7 241.0L1001.1 239.6M992.6 235.5L998.4 233.6M1003.0 242.0L1001.7 239.9M1009.6 237.1L1006.8 234.6M991.5 227.7L990.7 233.8M999.6 229.5L999.9 231.1M1008.9 229.8L1006.7 234.2M1089.0 159.1L1091.0 163.0M1089.0 159.1L1085.1 159.3M1091.0 163.0L1085.7 164.1M1085.1 159.3L1085.7 164.1M1090.7 156.5L1089.0 159.1M1083.4 157.8L1085.1 159.3M1091.0 163.0L1092.0 163.4M1055.4 201.8L1058.3 201.3M906.4 158.7L898.7 164.9M904.1 178.6L901.5 177.0M901.5 177.0L898.7 164.9M879.8 156.9L882.2 159.6M882.2 159.6L892.8 165.1M892.8 165.1L898.7 164.9M861.9 181.3L869.4 183.6M871.2 173.1L873.6 177.1M873.6 177.1L869.4 183.6M864.8 194.8L870.1 186.9M869.4 183.6L870.1 186.9M859.4 236.5L861.5 233.3M854.6 221.2L859.8 221.7M861.5 233.3L859.8 221.7M863.3 210.5L863.9 218.2M859.8 221.7L863.9 218.2M904.2 191.2L901.9 200.8M901.9 200.8L904.5 204.8M915.4 200.8L914.0 202.6M914.0 202.6L904.5 204.8M887.5 203.1L886.4 207.4M887.5 203.1L896.1 198.6M896.1 198.6L901.9 200.8M886.4 207.4L898.6 212.1M898.6 212.1L904.0 206.1M904.5 204.8L904.0 206.1M921.8 230.2L926.1 228.9M928.3 235.7L927.9 229.9M926.1 228.9L927.9 229.9M918.6 227.5L923.5 223.6M926.1 228.9L925.1 223.8M923.5 223.6L925.1 223.8M700.5 51.0L694.6 45.0M694.6 45.0L700.1 40.8M700.1 40.8L707.3 44.7M707.0 48.7L707.3 44.7M658.3 5.8L667.2 11.4M658.3 5.8L662.6 -0.5M662.6 -0.5L670.4 3.5M667.2 11.4L670.8 4.8M670.4 3.5L670.8 4.8M655.4 7.8L658.3 18.5M655.9 6.7L658.3 5.8M658.3 18.5L667.3 13.1M667.3 13.1L667.2 11.4M677.3 7.0L678.1 12.4M677.3 7.0L670.8 4.8M678.1 12.4L672.1 17.3M672.1 17.3L667.3 13.1M661.8 -4.9L662.6 -0.5M670.4 3.5L673.2 -1.6M669.1 -8.6L673.2 -1.6M678.8 -16.2L676.1 -10.7M669.1 -8.6L676.1 -10.7M681.5 2.3L688.5 -2.6M681.5 2.3L677.7 -2.4M677.7 -2.4L679.2 -5.9M679.2 -5.9L686.6 -7.4M688.5 -2.6L686.6 -7.4M681.4 3.8L677.3 7.0M681.4 3.8L681.5 2.3M673.2 -1.6L677.7 -2.4M676.1 -10.7L679.2 -5.9M687.2 -9.6L686.6 -7.4M690.6 -1.4L688.5 -2.6M709.5 9.2L707.5 11.5M707.5 11.5L705.0 11.8M681.4 3.8L687.6 9.0M690.8 9.0L687.6 9.0M678.1 12.4L682.2 13.8M687.6 9.0L682.2 13.8M644.6 118.0L643.2 125.2M644.6 118.0L649.4 117.1M649.4 117.1L653.5 122.1M644.5 125.7L643.2 125.2M644.5 125.7L653.2 122.9M653.5 122.1L653.2 122.9M642.1 125.5L643.2 125.2M641.6 114.4L644.6 118.0M651.0 111.1L649.4 117.1M647.6 131.1L641.0 137.5M647.6 131.1L644.5 125.7M602.4 87.2L600.6 84.3M602.4 87.2L604.4 87.9M610.7 99.2L605.1 99.9M605.1 93.0L609.5 94.1M605.1 99.9L605.1 93.0M615.3 106.6L611.3 104.5M611.7 100.4L611.3 104.5M648.3 131.5L650.3 135.7M648.3 131.5L655.1 128.8M650.3 135.7L655.1 134.8M655.1 128.8L655.1 134.8M647.6 131.1L648.3 131.5M648.8 139.2L650.3 135.7M655.4 128.4L653.2 122.9M656.2 135.9L655.1 134.8M661.8 131.1L660.1 128.8M655.4 128.4L660.1 128.8M675.6 150.3L673.8 148.9M675.6 150.3L676.1 155.6M670.9 148.5L669.8 150.9M670.9 148.5L673.8 148.9M678.1 157.1L682.3 153.9M681.0 148.7L675.6 150.3M681.0 148.7L682.2 150.1M682.2 150.1L682.3 153.9M670.1 164.0L669.8 161.6M661.7 162.1L665.0 160.1M611.1 129.3L607.5 122.1M608.7 120.7L607.5 122.1M602.2 130.0L600.4 126.6M600.4 126.6L601.5 125.4M607.5 122.1L604.9 121.6M600.4 126.6L597.6 125.4M591.6 77.8L590.6 78.8M629.6 45.6L631.6 43.5M631.6 43.5L629.9 40.6M631.2 55.4L630.9 56.6M631.2 55.4L630.6 54.5M390.3 320.5L385.8 315.9M390.3 320.5L388.6 324.9M385.8 315.9L380.2 321.6M382.9 324.9L380.1 323.0M380.1 323.0L380.2 321.6M395.0 319.5L390.3 320.5M385.9 313.2L385.8 315.9M374.1 314.7L380.2 321.6M377.7 324.9L380.1 323.0M1082.3 157.7L1080.2 160.1M1074.4 157.6L1076.2 159.9M1080.2 160.1L1076.2 159.9M1068.5 163.4L1066.9 167.1M1066.9 167.1L1065.4 167.6M1086.3 144.8L1087.0 145.2M1090.6 150.3L1087.0 145.2M1140.8 132.6L1139.2 133.5M1120.2 128.7L1124.1 134.7M1070.1 301.3L1071.7 301.7M1071.7 304.4L1072.3 303.5M1072.3 303.5L1071.7 301.7M1066.2 292.5L1064.7 292.9M1071.7 301.7L1073.7 299.0M1058.8 275.6L1062.1 274.8M1062.0 280.9L1064.2 280.6M1064.2 280.5L1064.2 279.1M356.9 298.3L358.4 301.0M356.9 298.3L357.8 293.9M358.4 301.0L368.3 298.2M367.1 294.5L368.3 298.2M358.1 304.8L358.4 301.0M346.3 303.8L348.2 297.6M348.2 297.6L356.9 298.3M350.8 290.0L346.6 294.5M346.6 294.5L348.2 297.6M370.8 299.9L368.3 298.2M342.7 264.7L344.0 264.4M344.0 264.4L344.5 265.0M255.7 264.7L258.6 271.1M258.6 271.1L267.8 266.1M267.8 266.1L267.6 263.3M332.3 292.2L333.6 296.3M342.8 293.0L336.2 297.3M342.8 293.0L342.5 291.9M342.3 291.1L341.6 288.2M336.2 297.3L333.6 296.3M339.0 304.9L336.2 297.3M346.6 294.5L342.8 293.0M332.4 309.4L337.6 307.4M332.4 309.4L328.2 304.8M329.4 298.7L328.2 304.8M329.4 298.7L333.6 296.3M575.3 296.3L570.5 297.0M575.3 296.3L578.7 301.1M570.5 297.0L568.8 304.4M578.7 301.1L577.9 303.6M577.9 303.6L569.0 304.7M577.6 292.5L575.3 296.3M567.7 293.6L570.5 297.0M584.5 298.2L578.7 301.1M562.6 302.2L568.8 304.4M587.2 300.1L587.4 304.1M580.2 307.5L577.9 303.6M587.4 304.1L582.2 308.4M596.5 290.2L598.5 292.3M602.8 284.9L603.1 289.1M598.5 292.3L603.1 289.1M622.5 305.5L623.9 309.6M617.5 309.3L615.7 306.7M623.2 310.5L623.9 309.6M616.1 304.8L615.7 306.7M615.2 317.2L610.4 310.3M615.7 306.7L610.4 310.3M605.8 313.4L610.1 310.2M617.3 283.9L612.3 287.7M608.5 283.1L611.7 287.6M603.1 289.1L606.8 291.4M611.7 287.6L606.8 291.4M587.6 313.4L591.0 310.3M597.2 314.1L596.0 311.9M596.0 311.9L591.0 310.3M587.4 304.1L590.7 306.3M591.0 310.3L590.7 306.3M634.2 314.9L633.1 312.4M627.8 315.1L629.5 312.3M633.1 312.4L629.5 312.3M623.9 309.6L627.4 308.8M629.5 312.3L627.4 308.8M627.8 302.9L629.5 305.5M627.4 308.8L629.5 305.5M634.2 291.2L635.7 295.2M630.2 298.4L633.0 298.4M633.0 298.4L635.7 295.2M642.2 293.1L638.3 296.0M646.1 296.9L645.8 298.3M645.8 298.3L640.2 300.4M640.2 300.4L638.3 296.0M635.7 295.2L638.3 296.0M641.2 311.0L644.1 306.5M641.2 311.0L646.6 313.6M648.9 310.9L646.6 313.6M648.9 310.9L647.9 306.9M644.1 306.5L646.0 306.0M647.9 306.9L646.0 306.0M653.9 305.0L647.9 306.9M652.8 312.1L648.9 310.9M645.8 298.3L647.0 300.3M647.0 300.3L646.0 306.0M640.2 300.4L639.4 302.2M639.4 302.2L644.1 306.5M654.1 304.6L653.8 301.4M653.8 301.4L647.0 300.3M650.1 318.3L647.1 316.1M650.1 318.3L649.6 324.6M647.1 316.1L642.2 318.5M649.6 324.6L643.5 327.3M643.5 327.3L641.7 319.8M641.7 319.8L642.2 318.5M653.1 316.3L650.1 318.3M646.6 313.6L647.1 316.1M657.5 327.0L649.6 324.6M640.3 313.3L641.1 311.0M640.3 313.3L642.2 318.5M637.2 318.9L641.7 319.8M640.3 313.3L635.9 315.6M656.5 292.4L661.2 294.9M656.5 292.4L654.2 298.4M654.2 298.4L654.6 299.9M654.6 299.9L660.9 298.9M660.9 298.9L661.6 296.2M661.6 296.2L661.2 294.9M663.9 290.1L661.2 294.9M650.1 295.3L654.2 298.4M653.8 301.4L654.6 299.9M662.3 301.4L660.9 298.9M671.0 295.9L661.6 296.2M754.9 169.4L753.0 173.6M748.9 169.9L749.3 172.1M753.0 173.6L749.3 172.1M758.4 174.4L753.8 175.4M753.0 173.6L753.8 175.4M756.6 180.9L753.3 177.2M753.3 177.2L753.8 175.4M749.9 183.3L751.4 185.2M749.9 183.3L750.6 178.4M753.3 177.2L750.6 178.4M709.3 146.7L707.5 151.6M709.3 146.7L706.4 143.0M705.8 143.1L702.9 146.9M702.9 146.9L703.7 150.4M703.7 150.4L705.5 151.9M705.5 151.9L707.5 151.6M715.1 151.2L710.3 152.5M712.2 146.2L709.3 146.7M710.3 152.5L707.5 151.6M713.5 143.3L709.1 140.3M709.1 140.3L706.4 143.0M698.9 145.3L697.0 148.7M698.9 145.3L702.9 146.9M698.3 151.7L697.0 148.7M698.3 151.7L703.7 150.4M700.3 157.9L696.6 155.1M696.6 155.1L698.3 151.7M702.4 157.7L704.2 156.4M704.2 156.4L705.5 151.9M698.9 145.3L698.2 143.8M705.8 143.1L701.5 139.6M698.2 143.8L701.5 139.6M713.6 164.4L715.9 163.1M713.6 164.4L709.3 160.1M710.9 157.8L709.3 159.5M710.9 157.8L712.4 157.8M712.9 166.1L713.6 164.4M706.6 163.0L709.3 160.1M710.3 152.5L710.9 157.8M704.2 156.4L709.3 159.5M759.7 118.5L751.1 116.1M756.5 105.9L749.8 111.0M751.1 116.1L749.8 111.0M727.2 136.0L726.2 132.3M721.4 140.2L720.4 139.4M720.4 139.4L720.4 134.0M726.2 132.3L720.9 133.3M720.9 133.3L720.4 134.0M735.9 137.1L735.2 130.2M726.9 130.8L726.2 132.3M726.9 130.8L732.1 128.0M732.1 128.0L735.2 130.2M720.3 143.7L721.4 140.2M714.6 143.0L716.6 139.5M716.6 139.5L720.4 139.4M721.9 125.3L719.0 129.1M721.9 125.3L726.9 130.8M719.0 129.1L720.9 133.3M729.3 186.3L726.5 182.1M720.7 185.3L722.9 187.6M736.8 171.1L740.0 175.4M743.1 170.3L743.2 172.7M743.2 172.7L740.0 175.4M749.3 172.1L746.8 174.8M743.2 172.7L746.8 174.8M750.6 178.4L747.1 176.8M746.8 174.8L747.1 176.8M727.5 180.6L731.5 179.5M733.7 182.8L733.8 181.8M733.8 181.8L731.5 179.5M731.5 179.5L732.4 175.0M755.9 100.0L746.7 97.2M755.9 100.0L760.3 91.1M746.7 97.2L749.3 88.4M760.3 91.1L755.0 85.8M755.0 85.8L749.3 88.4M757.1 102.9L755.9 100.0M744.1 98.4L744.7 108.8M744.1 98.4L746.7 97.2M744.7 108.8L749.8 111.0M767.0 91.0L760.3 91.1M755.3 82.7L755.0 85.8M741.2 84.1L745.5 77.8M741.2 84.1L749.3 88.4M793.4 166.2L792.3 166.2M792.3 166.2L790.0 162.4M790.0 162.4L790.6 161.5M790.4 168.9L792.3 166.2M778.8 161.6L780.0 163.3M785.3 154.9L784.7 161.9M780.0 163.3L784.7 161.9M790.0 162.4L786.6 163.1M786.4 169.1L786.6 163.1M786.6 163.1L784.7 161.9M724.4 18.0L721.2 27.2M732.7 27.1L723.1 28.4M721.2 27.2L723.1 28.4M733.1 35.2L725.2 36.6M723.1 28.4L725.2 36.6M743.8 68.6L739.6 61.7M744.1 52.6L740.0 57.0M739.6 61.7L740.0 57.0M706.1 56.0L707.4 58.1M707.4 58.1L713.5 59.3M714.7 56.5L713.5 59.3M979.3 233.4L977.9 230.9M979.3 233.4L984.4 233.0M977.9 230.9L980.4 226.6M984.4 233.0L983.9 225.9M983.9 225.9L980.4 226.6M978.3 236.0L979.3 233.4M973.4 230.2L977.9 230.9M986.3 234.8L984.4 233.0M974.1 222.6L980.4 226.6M985.3 224.6L983.9 225.9M1085.5 164.6L1083.7 165.2M1080.2 160.1L1080.3 162.7M1083.7 165.2L1080.3 162.7M882.2 159.6L882.3 167.7L882.1 174.8M873.6 177.1L877.8 177.8M882.1 174.8L877.8 177.8M892.8 165.1L889.3 176.8M882.1 174.8L889.3 176.8M890.0 224.8L886.3 219.6L881.3 212.6M890.0 224.8L883.2 228.7L876.1 231.2M881.3 212.6L873.1 220.9M873.1 220.9L875.8 230.8M886.4 207.4L881.6 210.7M881.6 210.7L881.3 212.6M893.7 226.0L899.3 218.7M893.7 226.0L890.0 224.8M899.3 218.7L898.6 212.1M878.9 240.8L876.1 231.2M896.2 232.9L893.7 226.0M874.1 205.3L881.6 210.7M863.9 218.2L873.1 220.9M861.5 233.3L868.5 233.0L875.8 230.8M899.3 218.7L903.6 219.7M904.0 206.1L910.4 214.9M910.4 214.9L903.6 219.7M907.5 226.3L904.8 220.7M912.8 224.6L911.6 221.1M911.6 221.1L904.8 220.7M903.6 219.7L904.8 220.7M925.6 216.4L927.1 222.3M925.6 216.4L923.8 216.3M927.1 222.3L925.1 223.8M923.5 223.6L920.3 219.4M923.8 216.3L920.3 219.4M927.7 207.4L930.7 210.4M927.7 207.4L920.8 211.5M925.6 216.4L928.9 214.4M930.7 210.4L928.9 214.4M923.8 216.3L920.8 211.5M916.6 225.6L918.2 219.4M918.2 219.4L920.3 219.4M933.2 238.5L934.8 229.5M927.9 229.9L931.4 228.0M934.8 229.5L931.4 228.0M927.1 222.3L931.0 222.7M931.4 228.0L931.0 222.7M941.4 202.2L939.5 208.2M927.7 207.4L926.2 201.9M930.7 210.4L935.2 210.3M939.5 208.2L935.2 210.3M674.7 20.8L683.6 21.7M674.7 20.8L672.2 18.0M682.2 13.8L684.5 20.6M683.6 21.7L684.5 20.6M684.5 20.6L686.7 20.2M744.1 98.4L739.4 96.9M739.4 96.9L737.4 94.6M737.4 94.6L740.5 84.3M707.4 58.1L702.4 63.7M710.7 67.2L711.7 65.5M710.7 67.2L704.9 68.1M702.4 63.7L704.9 68.1M702.4 63.7L699.3 62.6M698.1 59.9L699.3 62.6M663.4 56.3L663.2 48.3M663.4 56.3L670.1 59.6M671.5 49.5L663.2 48.3M671.5 49.5L672.3 50.7M670.1 59.6L672.3 50.7M636.0 44.0L637.9 46.1M636.0 44.0L638.1 37.1M637.9 46.1L644.5 45.6M644.5 45.6L645.3 36.5M638.1 37.1L644.6 35.7M644.6 35.7L645.3 36.5M631.2 55.4L636.3 52.3M636.3 52.3L637.9 46.1M631.6 43.5L636.0 44.0M634.0 33.7L638.1 37.1M640.1 28.3L644.6 32.4M644.6 32.4L644.6 35.7M644.6 32.4L648.8 27.8M645.3 36.5L653.4 37.6M653.4 37.6L654.2 36.7M654.2 36.7L654.2 28.1M654.2 28.1L648.8 27.8M672.2 18.0L666.3 24.1M658.3 18.5L657.6 20.0M657.6 20.0L658.4 23.2M666.3 24.1L658.4 23.2M660.7 36.0L654.2 36.7M660.7 36.0L662.6 32.3M654.2 28.1L657.8 25.1M662.6 32.3L657.8 25.1M674.7 20.8L674.4 27.6M666.3 24.1L669.1 29.4M674.4 27.6L669.1 29.4M662.6 32.3L668.1 31.7M658.4 23.2L657.8 25.1M669.1 29.4L668.1 31.7M664.4 41.2L660.7 36.0M664.4 41.2L671.2 38.2M668.1 31.7L671.2 38.2M671.5 49.5L674.0 42.7M663.2 48.3L661.9 46.9M674.0 42.7L671.5 38.3M661.9 46.9L664.4 41.2M605.3 89.5L604.4 87.9M605.1 93.0L605.3 89.5M614.9 108.6L609.6 111.3M611.3 104.5L607.6 106.3M607.6 106.3L609.6 111.3M609.6 111.3L609.3 112.3M604.8 100.3L607.2 106.1M601.7 110.7L602.3 108.3M601.7 110.7L604.3 113.8M607.2 106.1L602.3 108.3M601.7 110.7L596.7 111.8M597.1 115.8L596.7 111.8M591.3 84.1L590.6 84.7M591.3 84.1L595.3 85.0M595.3 85.0L595.5 86.7M590.6 78.8L591.3 84.1M585.0 85.8L587.4 87.2M596.4 83.9L595.3 85.0M587.4 94.0L586.1 93.7M586.1 93.7L587.4 87.2M602.4 87.2L598.3 89.5M605.1 93.0L599.2 94.2M584.2 85.7L581.3 86.1M581.3 86.1L580.0 88.8M1051.1 190.1L1058.1 182.0M1065.6 183.7L1064.9 183.2M1094.3 145.6L1094.6 143.7M1094.6 143.7L1099.9 141.8M1094.7 146.3L1099.9 146.5M1099.9 141.8L1099.9 146.5M1090.6 150.3L1094.5 146.1M1087.0 145.2L1094.3 145.6M1092.7 139.8L1094.6 143.7M1098.8 151.8L1100.5 147.2M1096.6 151.5L1094.7 146.3M1100.5 147.2L1099.9 146.5M1104.6 147.1L1100.5 147.2M1104.6 147.1L1105.7 144.2M1104.6 147.1L1105.4 149.1M1099.4 152.3L1104.5 151.4M1105.4 149.1L1104.5 151.4M1104.5 151.4L1106.0 155.6M1115.7 141.6L1118.1 143.1M1124.1 134.7L1123.8 135.6M1112.2 195.4L1111.8 194.4M1114.0 196.3L1118.2 194.2M1111.8 194.4L1112.7 191.3M1118.2 194.2L1117.6 191.5M1117.6 191.5L1116.9 190.7M1120.1 185.5L1118.5 186.6M1151.1 152.5L1151.7 153.6M1137.6 149.4L1140.8 146.9M1141.5 133.4L1141.5 138.6M1141.5 138.6L1140.9 139.5M1098.3 205.7L1100.2 202.9M1098.4 206.0L1099.2 206.8M1094.9 204.3L1098.3 205.7M1095.3 209.9L1098.4 206.0M1088.1 191.8L1086.9 194.0M1088.1 191.8L1087.5 191.1M1082.7 195.0L1082.8 191.0M1087.5 191.1L1082.8 191.0M1079.5 180.9L1080.3 177.2M1076.8 176.1L1080.3 177.2M1072.3 303.5L1075.6 304.7M1074.3 298.6L1078.5 301.0M1075.6 304.7L1078.5 301.0M1078.0 309.9L1076.9 309.2M1079.8 306.3L1076.9 308.5M1076.3 310.6L1076.9 309.2M1072.2 309.0L1076.8 308.9M1078.6 301.0L1079.6 302.5M1075.6 304.7L1076.9 308.5M1107.1 198.3L1109.3 198.2M1106.2 198.6L1107.4 202.3M1118.2 194.2L1119.4 195.3M1115.2 199.0L1116.3 199.4M1118.8 196.9L1119.3 195.6M1059.4 246.3L1060.3 246.2M338.9 258.2L345.5 259.9M345.5 259.9L346.4 258.5M344.0 264.4L345.6 262.0M345.5 259.9L345.6 262.0M355.2 262.4L353.3 263.3M350.8 259.3L352.1 263.2M345.6 262.0L349.2 263.3M332.2 317.6L329.5 319.7M332.2 317.6L331.8 310.4M329.5 319.7L323.4 316.8M331.8 310.4L323.5 312.6M323.5 312.6L323.4 316.8M338.3 319.6L332.2 317.6M328.6 324.9L329.5 319.7M332.4 309.4L331.8 310.4M321.7 318.0L323.4 316.8M328.2 304.8L322.7 305.5M322.5 311.5L323.5 312.6M246.2 269.7L247.2 271.9M281.1 251.6L280.1 252.7M277.9 252.5L280.1 252.7M273.3 259.3L277.8 261.5M280.1 252.7L280.8 258.4M280.8 258.4L277.8 261.5M323.7 263.9L323.4 265.0M592.2 297.8L594.2 298.3M590.7 306.3L597.2 303.8M594.2 298.3L597.2 303.8M598.5 292.3L598.6 294.0M594.2 298.3L598.6 294.0M606.8 291.4L606.7 294.3M606.7 294.3L603.2 297.0M598.6 294.0L603.2 297.0M617.8 291.4L618.9 295.5M617.8 291.4L614.0 290.3M614.0 290.3L612.8 296.1M612.8 296.1L616.8 297.6M618.9 295.5L616.8 297.6M621.3 289.3L617.8 291.4M623.7 295.7L618.9 295.5M612.3 287.7L614.0 290.3M611.2 296.9L606.7 294.3M611.2 296.9L612.8 296.1M617.8 301.4L616.8 297.6M610.2 301.4L616.1 304.8M610.2 301.4L611.2 296.9M635.2 302.1L637.9 302.8M635.2 302.1L630.7 305.7M637.9 302.8L636.6 308.7M630.7 305.7L634.7 309.3M636.6 308.7L634.7 309.3M633.0 298.4L635.2 302.1M639.4 302.2L637.9 302.8M629.5 305.5L630.7 305.7M641.1 311.0L636.6 308.7M633.1 312.4L634.7 309.3M715.0 129.3L715.3 133.9M715.0 129.3L711.4 126.0M711.4 126.0L709.0 130.2M709.0 130.2L710.8 136.2M715.3 133.9L713.6 136.0M713.6 136.0L710.8 136.2M719.0 129.1L715.0 129.3M720.4 134.0L715.3 133.9M716.6 139.5L713.6 136.0M709.1 140.3L709.4 137.5M709.4 137.5L710.8 136.2M709.4 137.5L703.2 135.3M709.0 130.2L703.1 131.8M703.2 135.3L703.1 131.8M701.5 139.6L701.2 137.6M703.2 135.3L701.2 137.6M692.0 152.5L688.6 152.3M692.0 152.5L693.6 148.4M693.6 148.4L691.7 145.0M687.5 150.4L688.6 152.3M687.5 150.4L688.4 145.9M688.4 145.9L691.1 144.8M696.6 155.1L694.8 155.3M697.0 148.7L693.6 148.4M694.8 155.3L692.0 152.5M698.2 143.8L696.2 143.1M696.2 143.1L691.7 145.0M682.2 150.1L687.5 150.4M682.3 153.9L686.5 155.9M686.5 155.9L688.6 152.3M698.4 162.2L694.7 162.3M694.8 155.3L693.8 157.0M693.8 157.0L694.7 162.3M694.9 167.4L693.7 163.4M689.2 167.5L690.7 163.3M690.7 163.3L693.7 163.4M694.7 162.3L693.7 163.4M748.9 119.7L741.1 120.6M748.9 119.7L751.3 127.5M741.1 120.6L741.8 127.9M751.3 127.5L744.4 129.6M744.4 129.6L741.8 127.9M751.1 116.1L748.9 119.7M744.1 135.7L744.4 129.6M735.2 130.2L741.8 127.9M744.7 108.8L739.1 111.6M741.1 120.6L737.8 117.8M737.8 117.8L739.1 111.6M732.1 128.0L731.6 120.5M737.8 117.8L731.6 120.5M739.4 96.9L732.9 106.6M739.1 111.6L732.9 106.6M726.0 99.1L734.0 94.0M726.0 99.1L732.6 106.6M737.4 94.6L734.0 94.0M720.7 185.3L719.8 186.9M738.3 179.7L738.9 177.8M738.3 179.7L740.0 183.3M740.0 183.3L743.5 184.3M739.6 177.2L744.6 179.1M739.6 177.2L738.9 177.8M744.6 179.1L745.0 182.7M743.5 184.3L745.0 182.7M733.8 181.8L738.3 179.7M732.4 175.0L738.9 177.8M736.8 186.8L740.0 183.3M743.6 185.6L743.5 184.3M747.1 176.8L744.6 179.1M740.0 175.4L739.6 177.2M749.9 183.3L745.0 182.7M777.0 167.8L777.0 173.6M777.0 167.8L779.6 165.8M779.6 165.8L783.6 169.4M783.6 169.4L780.9 174.0M780.9 174.0L777.9 174.3M777.9 174.3L777.0 173.6M771.7 174.0L777.0 173.6M772.0 166.5L777.0 167.8M780.0 163.3L779.6 165.8M786.4 169.1L783.6 169.4M784.3 176.5L780.9 174.0M777.6 178.9L777.9 174.3M719.2 14.2L714.0 20.2M721.2 27.2L718.0 27.7M718.0 27.7L714.0 20.2M707.5 11.5L708.7 20.0M714.0 20.2L708.7 20.0M736.5 55.8L725.8 57.5M736.5 55.8L731.9 50.7M725.1 53.2L724.4 55.0M724.4 55.0L725.8 57.5M738.3 40.1L732.6 43.9M740.0 57.0L736.5 55.8M725.2 36.6L724.5 37.6M724.9 39.2L724.5 37.6M717.4 47.9L718.0 46.5M718.1 53.8L724.4 55.0M723.1 46.5L718.0 46.5M714.2 61.0L719.3 63.5M725.8 57.5L724.8 61.7M719.3 63.5L724.8 61.7M713.8 71.7L719.6 71.0M713.8 71.7L710.7 67.2M719.3 63.5L719.6 71.0M739.6 61.7L729.7 67.0M724.8 61.7L729.7 67.0M686.3 144.8L684.9 139.9M686.3 144.8L681.5 146.5M684.9 139.9L679.3 142.0M681.5 146.5L679.3 142.0M681.0 148.7L681.5 146.5M688.4 145.9L686.3 144.8M1092.0 163.4L1092.2 166.0M1085.5 164.6L1088.0 168.6M1077.3 165.5L1078.0 168.3M1077.3 165.5L1074.8 163.8M1077.4 169.4L1072.5 170.2M1077.4 169.4L1078.0 168.3M1071.5 168.5L1072.5 170.2M1071.5 168.5L1073.0 164.1M1073.0 164.1L1074.8 163.8M1082.3 167.7L1083.7 165.2M1082.3 167.7L1078.0 168.3M1080.3 162.7L1077.3 165.5M1076.2 159.9L1074.8 163.8M1078.2 171.3L1076.6 175.5M1078.2 171.3L1077.4 169.4M1066.9 167.1L1071.5 168.5M1071.5 162.9L1073.0 164.1M901.5 177.0L891.9 180.5M889.3 176.8L891.3 180.3M901.6 188.7L896.6 189.1M891.9 180.5L896.6 189.1M896.1 198.6L894.4 191.8M894.4 191.8L896.6 189.1M916.6 210.0L911.1 215.0M916.6 210.0L917.4 210.7M917.4 210.7L917.3 218.6M911.1 215.0L913.3 218.7M913.3 218.7L917.3 218.6M914.0 202.6L916.6 210.0M920.8 211.5L917.4 210.7M918.2 219.4L917.3 218.6M911.6 221.1L913.3 218.7M948.6 229.7L946.7 228.9M942.0 237.0L941.9 232.9M941.9 232.9L946.7 228.9M951.7 222.6L949.6 221.6M949.6 221.6L945.7 226.0M946.7 228.9L945.7 226.0M952.5 204.7L948.0 214.6M939.5 208.2L942.2 211.8M942.2 211.8L948.0 214.6M958.7 215.0L948.1 214.7M949.6 221.6L947.8 218.6M947.8 218.6L948.1 214.7M935.2 210.3L935.7 217.5M942.2 211.8L939.5 219.9M935.7 217.5L939.5 219.9M928.9 214.4L932.1 219.4M935.7 217.5L932.1 219.4M932.1 219.4L931.4 222.4M657.6 20.0L649.9 18.2M648.8 27.8L646.6 23.5M690.7 29.9L693.0 31.0M690.2 35.5L693.0 31.0M683.6 21.7L683.6 24.0M674.4 27.6L677.8 30.1M671.5 38.3L674.2 36.6M690.1 44.8L693.5 44.8M693.5 44.8L690.2 35.5M699.9 19.3L706.0 22.6M694.4 25.1L694.8 30.1M705.8 27.2L706.0 22.6M705.8 27.2L695.4 30.3M708.7 20.0L706.0 22.6M693.0 31.0L694.8 30.1M700.1 40.8L700.6 37.9M700.6 37.9L695.4 30.3M729.7 67.0L728.9 71.0M719.6 71.0L723.0 73.8M728.9 71.0L723.0 73.8M743.3 70.1L734.3 76.1M728.9 71.0L734.3 76.1M740.5 84.3L734.4 80.9M734.3 76.1L734.4 80.9M657.5 58.3L655.6 57.5M660.0 63.8L660.4 65.8M660.4 65.8L654.5 68.0M655.6 57.5L652.1 60.7M637.6 62.2L644.2 57.6M646.2 60.1L644.2 57.6M636.3 52.3L644.2 56.4M644.2 57.6L644.2 56.4M654.2 42.3L661.2 47.0M654.2 42.3L647.5 48.2M661.2 47.0L653.9 53.0M653.9 53.0L648.2 50.8M647.5 48.2L648.2 50.8M653.4 37.6L654.2 42.3M644.5 45.6L647.5 48.2M663.4 56.3L662.0 57.2M655.6 57.5L653.9 53.0M644.2 56.4L648.2 50.8M652.0 110.5L655.1 111.1M653.5 122.1L657.4 119.4M657.4 119.4L655.1 111.1M654.9 101.5L659.5 103.2M659.5 103.2L660.2 104.8M660.2 104.8L658.3 109.5M655.1 111.1L658.3 109.5M598.0 98.1L602.3 100.7M598.0 98.1L594.9 101.0M602.3 100.7L600.1 105.1M600.1 105.1L594.8 105.5M594.9 101.0L594.9 102.2M594.8 104.2L594.8 105.5M604.8 100.3L602.3 100.7M593.5 100.4L594.9 101.0M602.3 108.3L600.1 105.1M1114.8 148.5L1113.1 147.2M1111.9 147.5L1113.1 147.2M1111.9 147.5L1109.5 149.8M1109.5 149.8L1110.2 153.0M1107.3 143.9L1111.9 147.5M1113.7 143.3L1113.1 147.2M1105.4 149.1L1109.5 149.8M1125.3 182.6L1127.0 184.1M1130.1 180.1L1128.5 179.3M1130.1 180.1L1130.9 183.3M1130.9 183.3L1127.0 184.1M1144.7 154.4L1147.3 152.0M1144.7 154.4L1142.6 151.6M1147.3 152.0L1147.2 149.2M1142.6 151.6L1143.3 148.5M1151.1 152.5L1147.3 152.0M1144.7 154.6L1146.2 156.4M1136.9 152.4L1137.9 155.2M1137.1 151.5L1142.6 151.6M1144.7 154.6L1141.7 156.4M1141.7 156.4L1137.9 155.2M1141.5 138.6L1142.0 139.4M1141.3 159.2L1141.7 156.4M1111.8 194.4L1107.8 194.0M1107.8 194.0L1106.9 192.0M1107.8 194.0L1107.0 195.6M1088.1 191.8L1090.0 192.2M1081.4 189.7L1081.3 187.5M1082.8 191.0L1081.4 189.7M1081.7 183.5L1083.0 184.4M1083.0 184.4L1081.3 187.5M1064.2 280.5L1065.6 280.0M1073.8 286.7L1075.0 287.8M1075.0 287.8L1076.3 287.7M1075.4 293.6L1075.2 290.6M1075.1 289.0L1075.0 287.8M302.5 301.8L305.3 299.9M308.9 304.5L309.3 302.7M307.7 300.4L309.3 302.7M312.4 302.2L309.3 302.7M278.0 265.2L281.6 266.6M278.0 265.2L273.1 270.5M282.1 273.8L279.4 275.3M273.1 270.5L273.2 272.0M273.2 272.0L276.2 275.3M276.2 275.3L279.4 275.3M284.1 259.2L280.8 258.4M277.8 261.5L278.0 265.2M267.8 266.1L273.1 270.5M284.7 282.6L279.4 275.3M284.7 282.6L288.8 278.5M288.5 275.7L289.1 277.2M288.5 275.7L286.2 274.0M289.1 277.2L288.8 278.5M289.7 274.0L288.5 275.7M266.4 276.4L273.2 272.0M275.1 280.9L276.2 275.3M320.7 302.5L321.5 300.6M329.4 298.7L328.2 298.3M603.2 298.3L598.0 304.1M603.2 298.3L607.7 302.6M606.7 304.8L607.7 302.6M606.7 304.8L602.1 306.4M602.1 306.4L598.1 304.3M603.2 297.0L603.2 298.3M597.2 303.8L598.0 304.1M610.2 301.4L607.7 302.6M610.1 310.2L606.7 304.8M603.0 312.0L602.1 306.4M596.0 311.9L598.1 304.3M685.6 138.6L684.9 139.9M685.6 138.6L682.2 134.2M682.2 134.2L680.0 134.5M679.3 142.0L677.5 141.1M680.0 134.5L677.5 141.1M669.8 144.7L673.2 139.6M667.0 137.5L672.5 138.6M673.2 139.6L672.5 138.6M673.8 148.9L677.4 141.1M673.2 139.6L677.4 141.1M711.3 125.9L703.5 122.7M703.1 131.8L701.2 129.6M701.2 129.6L703.5 122.7M706.0 115.5L703.1 121.9M706.0 115.5L704.9 113.5M704.9 113.5L699.8 111.7M699.8 111.7L698.4 112.3M698.4 112.3L696.5 117.4M696.5 117.4L698.7 120.9M698.7 120.9L703.1 121.9M696.2 143.1L694.9 137.8M701.2 137.6L696.3 136.5M694.9 137.8L696.3 136.5M691.1 144.8L690.3 138.5M694.9 137.8L690.3 138.5M685.6 138.6L689.3 137.8M689.3 137.8L690.3 138.5M689.4 162.1L690.0 158.5M689.4 162.1L685.4 162.3M690.0 158.5L686.5 155.9M686.5 155.9L684.3 159.5M684.3 159.5L685.4 162.3M693.8 157.0L690.0 158.5M690.7 163.3L689.4 162.1M684.9 163.3L685.4 162.3M680.2 158.8L684.3 159.5M726.9 111.3L729.5 119.5M726.9 111.3L720.3 109.8M729.5 119.5L721.6 121.9M721.6 121.9L716.5 118.9M720.3 109.8L717.2 112.3M717.2 112.3L715.8 116.7M716.5 118.9L715.8 116.7M731.6 120.5L729.5 119.5M732.6 106.6L726.9 111.3M721.9 125.3L721.6 121.9M711.3 125.9L716.5 118.9M706.0 115.5L715.8 116.7M704.9 113.5L708.7 105.6M708.7 105.6L717.2 112.3M703.1 121.9L703.5 122.7M704.1 193.3L701.9 192.7M699.8 192.8L701.0 192.5M717.6 28.0L707.7 29.5M717.6 28.0L716.3 38.4M716.3 38.4L714.6 39.9M707.8 34.2L707.7 29.5M707.8 34.2L712.8 39.8M712.8 39.8L714.6 39.9M705.8 27.2L707.7 29.5M724.5 37.6L716.3 38.4M718.0 46.5L714.6 39.9M700.6 37.9L707.8 34.2M707.3 44.7L712.8 39.8M885.7 198.1L878.3 194.6M885.7 198.1L888.6 191.9M888.6 191.9L884.9 186.3M878.3 194.6L878.3 189.6M878.3 189.6L881.8 186.3M881.8 186.3L884.9 186.3M887.5 203.1L885.7 198.1M872.9 199.8L878.3 194.6M894.4 191.8L888.6 191.9M891.3 180.3L884.9 186.3M870.1 186.9L878.3 189.6M877.8 177.8L881.8 186.3M941.2 221.1L939.7 220.3M941.2 221.1L942.7 225.1M939.7 220.3L936.5 223.4M936.5 223.4L937.4 228.5M942.7 225.1L939.1 229.0M937.4 228.5L939.1 229.0M947.8 218.6L941.2 221.1M945.7 226.0L942.7 225.1M931.4 222.4L936.5 223.4M934.8 229.5L937.4 228.5M941.9 232.9L939.1 229.0M713.8 71.7L710.3 79.8M710.6 80.1L721.4 79.6M723.0 73.8L721.9 79.2M734.4 80.9L730.7 83.2M721.9 79.2L730.7 83.2M734.0 94.0L729.2 87.9M729.2 87.9L730.7 83.2M717.2 89.6L714.2 98.7M717.2 89.6L720.7 88.9M723.0 90.2L720.7 88.9M723.0 90.2L724.6 98.9M714.2 98.7L720.6 101.3M724.6 98.9L720.6 101.3M710.6 80.1L711.9 86.6M711.9 86.6L717.2 89.6M721.4 79.6L720.7 88.9M729.2 87.9L723.0 90.2M726.0 99.1L724.6 98.9M720.3 109.8L720.6 101.3M707.2 93.9L710.6 99.3M707.2 93.9L698.4 95.5M698.4 95.5L702.1 103.2M702.1 103.2L708.1 103.3M708.1 103.3L710.6 99.3M711.9 86.6L707.4 91.4M707.4 91.4L707.2 93.9M714.2 98.7L710.6 99.3M699.8 111.7L700.5 104.5M708.7 105.6L708.1 103.3M700.5 104.5L702.1 103.2M670.1 59.6L670.7 60.8M660.4 65.8L662.7 66.9M670.7 60.8L670.1 63.7M670.1 63.7L665.3 67.0M670.7 60.8L674.9 59.9M670.1 63.7L672.1 65.8M693.9 45.0L692.2 49.3M672.3 50.7L676.7 51.6M700.4 83.8L697.3 82.3M700.4 83.8L708.8 79.5M697.3 82.3L698.0 74.0M708.8 79.5L703.4 72.0M703.4 72.0L700.5 72.7M710.3 79.8L708.8 79.5M707.4 91.4L700.9 86.4M700.9 86.4L700.4 83.8M704.9 68.1L703.4 72.0M692.8 70.3L694.7 71.4M697.3 82.3L695.6 82.6M689.0 79.6L695.6 82.6M660.1 128.8L664.4 122.1M657.4 119.4L663.0 119.7M664.4 122.1L663.0 119.7M658.3 109.5L665.2 114.6M663.0 119.7L665.2 114.6M660.2 104.8L667.3 105.8M667.3 105.8L666.5 113.8M666.5 113.8L665.2 114.6M573.9 106.2L576.0 107.5M576.4 97.1L580.1 93.0M576.4 97.1L579.2 101.4M579.2 101.4L580.6 101.9M580.6 101.9L584.6 99.2M584.6 99.2L584.5 94.6M584.5 94.6L580.1 93.0M579.5 90.8L580.1 93.0M574.4 97.0L576.4 97.1M573.9 106.2L579.2 101.4M582.3 105.8L580.6 101.9M586.8 100.4L584.6 99.2M586.1 93.7L584.5 94.6M596.1 111.4L594.2 112.0M595.2 107.4L594.8 105.5M594.8 105.5L592.8 105.7M1131.0 183.4L1131.5 185.2M1131.0 183.4L1135.1 181.8M1131.5 185.2L1133.5 186.0M1121.5 185.7L1122.8 187.7M1117.6 191.5L1122.3 190.1M1122.8 187.7L1122.3 190.1M1127.0 184.1L1127.0 187.9M1122.8 187.7L1127.0 187.9M1131.5 185.2L1129.0 189.4M1127.0 187.9L1128.6 189.4M1133.6 190.6L1129.1 189.5M1122.3 190.1L1124.1 193.1M1128.6 189.4L1124.1 193.1M1123.9 195.0L1124.1 193.1M1104.4 196.4L1102.6 193.7M1099.5 197.2L1100.0 196.1M299.9 294.3L297.6 298.5M295.3 276.7L296.4 274.5M295.3 276.7L298.3 282.2M289.1 277.2L295.3 276.7M293.8 283.8L298.3 282.2M293.8 283.8L288.8 278.5M298.6 286.2L298.5 282.3M293.8 283.8L293.0 285.1M293.0 285.1L294.2 291.0M294.2 291.0L298.3 291.5M697.4 129.9L693.6 125.5M697.4 129.9L695.7 133.1M695.7 133.1L689.6 132.2M690.9 125.4L693.6 125.5M690.9 125.4L688.2 130.0M688.2 130.0L689.6 132.2M701.2 129.6L697.4 129.9M698.7 120.9L693.6 125.5M696.3 136.5L695.7 133.1M689.3 137.8L689.6 132.2M696.5 117.4L690.8 117.1M689.0 122.3L690.9 125.4M689.0 122.3L690.8 117.1M682.2 134.2L685.1 130.3M685.1 130.3L688.2 130.0M1090.7 184.3L1089.7 183.9M1089.6 182.0L1089.7 183.9M1087.5 191.1L1087.6 185.0M1083.0 184.4L1087.6 185.0M1087.6 185.0L1089.7 183.9M679.6 96.2L677.3 101.7M679.6 96.2L676.2 92.2M676.2 92.2L674.0 92.7M674.0 92.7L670.2 99.2M670.2 99.2L677.3 101.7M698.4 112.3L693.7 110.0M690.8 117.1L688.7 112.9M693.7 110.0L688.7 112.9M700.5 104.5L693.9 104.4M693.7 110.0L693.9 104.4M678.0 89.0L676.2 92.2M674.0 92.7L671.5 90.9M670.1 74.6L665.7 76.0M667.4 79.2L665.7 76.0M664.3 68.2L664.8 75.5M657.8 78.4L664.8 75.5M664.8 75.5L665.7 76.0M700.9 86.4L697.6 93.3M695.6 82.6L691.4 89.6M691.4 89.6L697.6 93.3M698.2 95.4L697.6 93.3M680.0 134.5L678.4 133.3M672.5 138.6L673.5 134.6M673.5 134.6L678.4 133.3M689.0 122.3L683.0 121.5M685.1 130.3L680.6 125.5M680.6 125.5L683.0 121.5M1130.1 180.1L1133.0 178.2M1130.9 175.2L1132.5 175.0M1132.5 175.0L1133.0 178.2M1133.0 178.2L1135.6 179.8M1129.1 189.5L1129.2 191.3M294.2 291.0L291.9 292.3M293.0 285.1L287.7 286.3M1084.7 177.6L1086.3 176.9M1084.7 177.6L1081.4 176.7M1081.4 176.7L1081.3 172.8M1081.3 172.8L1084.2 171.1M1084.2 171.1L1085.2 171.4M1083.0 184.4L1084.7 177.6M1080.3 177.2L1081.4 176.7M1078.2 171.3L1081.3 172.8M1082.3 167.7L1084.2 171.1M683.0 121.5L681.0 116.7M681.0 116.7L681.9 114.5M681.9 114.5L688.6 112.8M665.3 93.8L665.2 96.4M658.0 94.7L658.1 91.6M658.0 94.7L662.0 97.6M662.0 97.6L665.2 96.4M657.8 78.4L659.4 83.7M669.8 99.3L665.2 96.4M653.5 96.9L658.0 94.7M659.5 103.2L662.0 97.6M668.0 105.3L667.3 105.8M668.0 105.3L669.8 99.3M685.1 88.0L686.4 89.5M691.4 89.6L688.7 90.3M686.4 89.5L688.7 90.3M679.6 96.2L682.9 95.9M686.4 89.5L682.9 95.9M673.1 122.0L676.8 126.5M673.1 122.0L667.3 123.6M667.3 123.6L668.5 130.5M676.7 126.7L671.0 130.9M668.5 130.5L671.0 130.9M674.2 118.3L673.1 122.0M674.2 118.3L681.0 116.7M680.6 125.5L676.8 126.5M671.6 114.5L674.2 118.3M671.6 114.5L666.5 113.8M664.4 122.1L667.3 123.6M667.7 131.2L668.5 130.5M673.5 134.6L671.0 130.9M678.4 133.3L676.7 126.7M1131.7 160.8L1133.6 161.3M1132.3 156.5L1134.8 158.6M1137.9 155.2L1136.8 157.7M1136.0 174.0L1132.9 174.4M1136.0 174.0L1137.4 171.2M1132.9 174.4L1131.8 170.4M1131.8 170.4L1136.3 168.7M1137.0 175.3L1136.0 174.0M1130.9 169.9L1131.8 170.4M1134.4 164.4L1132.7 165.0M680.3 111.5L682.1 104.7M680.3 111.5L674.6 110.1M674.0 108.0L674.6 110.1M674.0 108.0L677.8 102.7M677.8 102.7L682.1 104.7M671.6 114.5L674.6 110.1M681.9 114.5L680.3 111.5M668.0 105.3L674.0 108.0M677.3 101.7L677.8 102.7M685.9 99.5L690.2 97.5M685.9 99.5L684.8 104.1M684.8 104.1L686.5 105.2M686.5 105.2L693.5 104.0M693.5 104.0L693.1 98.8M693.1 98.8L690.2 97.5M688.7 90.3L690.2 97.5M682.9 95.9L685.9 99.5M682.1 104.7L684.8 104.1M688.6 112.8L686.5 105.2M698.2 95.4L693.1 98.8" fill="none" stroke="#cdc9d0" stroke-width="0.65" stroke-dasharray="2.2 0.8"/>
<path d="M93.2 52.3L257.6 52.3M163.9 52.3L163.9 94.6L171.3 103.3L178.8 112.3L185.8 123.3M201.1 52.3L201.1 123.3M230.9 52.3L233.1 123.3M256.3 121.0L256.3 100.8L279.2 74.3M314.6 108.7L314.6 131.6L323.9 140.3L333.2 144.0M85.8 -32.6L102.5 -25.3L113.7 3.8L130.4 36.1L149.0 52.3M161.3 -32.6L193.7 11.9L230.9 18.8L230.9 52.3M397.9 109.3L397.9 105.7L372.2 105.7L361.1 86.9L372.2 78.4L370.4 50.0M149.0 138.7L167.6 139.8L175.1 139.8M175.1 123.3L175.1 148.8L175.1 160.5M148.3 160.5L197.4 160.5M178.8 123.3L178.8 130.5L184.7 142.5L189.9 147.7L197.4 147.7L197.4 160.5M223.4 123.3L223.4 165.5M197.4 145.1L223.4 145.1M197.4 165.5L230.9 165.5L230.9 170.3L255.8 170.3M223.4 140.3L250.9 140.3M223.4 155.4L243.9 155.4L251.3 158.0M248.7 123.3L250.9 139.8L251.3 152.9L251.3 158.0L253.9 167.4L255.8 170.3M186.2 160.5L186.2 184.6L184.0 193.8L183.6 204.1M186.2 184.6L258.4 184.6L258.4 186.9L277.4 186.9M204.8 165.5L204.8 210.2M227.1 184.6L227.1 207.2L214.1 207.2M227.1 186.9L238.3 186.9L238.3 195.6L258.8 200.1L260.6 202.8M163.9 160.5L163.9 175.2L184.0 193.8M230.9 170.3L230.9 184.6M248.7 123.3L256.2 131.6L266.9 136.0L265.1 145.1L271.0 152.9L274.8 161.5L270.3 168.4L274.8 176.1L278.5 184.6L276.6 189.2L271.4 202.8L269.5 211.6L276.6 211.6L277.4 215.0M278.5 184.6L282.9 180.9L290.4 179.9L294.8 174.7L303.0 178.0L310.8 167.4L310.8 160.5M251.3 152.9L271.0 152.9M253.9 167.4L270.3 168.4M258.4 186.9L258.8 202.8L271.4 202.8M260.6 202.8L260.6 215.9M276.6 193.8L296.7 193.8L305.3 186.5L328.0 186.7M277.4 186.9L305.3 186.5M282.2 193.8L281.5 214.1M291.9 193.8L294.1 207.2L294.1 211.6L307.1 212.9M284.4 211.6L294.1 211.6M296.7 193.8L304.1 192.9L309.0 193.4L317.9 198.8M298.9 186.5L306.4 183.7L311.6 182.3L314.6 177.5L321.3 173.7L323.9 178.5L326.5 179.9M310.8 171.8L328.3 171.8L331.3 167.9L332.4 163.5L330.2 160.5L313.4 160.5M284.8 162.0L284.8 179.9L294.8 162.0L294.8 174.7M284.8 162.0L299.7 162.0M273.3 158.0L283.7 158.0M337.6 145.1L337.3 160.5L336.9 165.5M340.6 145.1L340.6 157.0L346.2 156.5L346.2 143.5M204.8 210.2L205.6 223.1L207.1 230.7M214.1 208.1L216.0 220.1L223.4 230.7L227.1 236.9M226.4 220.1L228.3 229.4L234.6 236.9L236.8 245.0M240.2 226.5L238.3 236.9L243.9 243.0L245.0 247.8M749.8 2.9L759.1 36.9L777.7 44.7L785.1 28.8L796.3 44.7L814.9 48.5L829.8 36.9L833.5 11.9L840.9 -6.4M833.5 11.9L855.8 44.7L855.8 63.2L870.7 66.7L889.3 63.2L900.5 59.6L922.8 44.7L941.4 32.9L956.3 36.9L974.9 66.7L971.1 93.3L967.4 111.7M922.8 44.7L930.2 2.9L926.5 -36.9M1004.6 36.9L1008.3 66.7L1019.5 73.6L1041.8 73.6L1056.7 77.0L1069.7 96.5M1004.6 36.9L1034.4 11.9L1056.7 2.9L1075.3 -36.9M1056.7 77.0L1086.5 73.6L1095.8 63.2L1123.7 48.5L1142.3 36.9L1160.9 16.2L1175.7 2.9L1198.1 -16.2M1096.5 123.8L1105.1 111.7L1101.3 93.3L1086.5 73.6M1142.3 36.9L1164.6 44.7L1179.5 32.9L1198.1 36.9L1212.6 20.5L1217.4 2.9M1217.4 32.9L1224.1 44.7L1242.7 40.8L1257.6 32.9M904.9 197.0L915.3 191.5L941.4 188.3L948.8 175.2L968.9 157.0M948.8 175.2L960.0 177.5L974.9 172.8L986.0 179.9L995.3 182.3L999.0 196.1L986.0 202.8L978.6 209.4L978.6 222.3M999.0 196.1L1006.5 203.7L1017.6 208.5L1019.5 215.9L1015.8 222.3L1004.6 224.4M1006.5 182.3L1012.1 179.9L1023.2 172.8L1026.6 151.9M1023.2 172.8L1021.4 193.8L1025.1 202.8L1034.4 207.2L1041.8 211.6L1049.3 209.4L1054.8 207.2M1034.4 179.9L1036.2 189.2L1041.8 196.1L1053.0 193.8M1055.6 136.0L1064.1 142.5L1069.7 155.4L1060.4 165.9M1015.8 222.3L1026.9 236.9L1019.5 245.0L1026.9 249.8M1004.6 224.4L997.2 230.7L1000.9 238.9L1007.2 245.4M872.6 232.7L885.6 240.9L885.6 251.0L881.9 257.0M885.6 251.0L898.6 251.0L909.8 251.0L915.3 260.9L925.4 260.9M898.6 251.0L898.6 264.9L896.0 278.4L897.9 288.0L894.9 296.3M909.8 251.0L919.1 240.9L935.8 238.9L937.7 249.0M896.7 218.0L902.3 228.6L919.1 240.9" fill="none" stroke="#cfcbd1" stroke-width="0.75" stroke-dasharray="1.6 1" stroke-linejoin="round"/>
<path d="M151.6 123.3L256.3 123.3L256.3 121.0L258.4 125.0L264.3 125.5L269.9 128.3L277.4 128.9L281.5 127.2L294.5 134.9L295.6 137.1L299.3 139.3L303.4 143.5L303.8 155.4L301.2 160.0L303.4 162.0L316.4 156.5L316.0 153.9L324.6 152.4L326.5 149.3L331.3 145.1L344.3 145.1L346.9 143.0L348.8 138.7L349.9 136.0L352.9 131.9L356.2 132.5L358.1 133.8L358.1 141.4L359.6 144.0L361.1 146.1M85.8 -32.6L85.8 50.0L92.8 51.5L98.8 60.3L102.5 55.9L106.2 53.7L114.1 63.9L119.3 72.9L126.7 80.4L124.5 88.9M174.7 205.0L183.6 204.1L183.2 205.0L197.0 210.2L207.8 210.2L207.8 208.1L214.1 208.1L219.7 212.9L221.6 217.6L226.4 220.1L229.0 216.7L233.1 216.7L237.2 223.1L240.2 226.5L241.6 231.1L248.7 233.1M267.3 278.4L267.3 275.3L269.2 272.3L274.0 272.3L274.0 271.1L270.3 267.8L271.8 267.8L271.8 265.6L278.7 265.6L278.5 273.0L279.6 273.0M278.5 273.0L278.1 278.8L275.1 281.3M278.1 278.8L281.1 280.7L283.7 282.6M285.5 284.2L287.8 281.1L291.1 280.7L294.8 277.3L300.8 276.5M291.5 291.4L295.2 291.8L298.9 292.2M301.9 302.7L301.9 299.0L303.0 297.1M320.5 306.1L322.4 300.5M345.1 288.7L340.6 291.4L338.7 298.2L340.6 301.6L341.0 305.3L349.5 306.8L352.1 310.2M387.1 300.8L384.5 305.0L382.3 310.6M602.1 193.4L604.0 199.7L605.8 206.3L599.5 207.2L596.9 211.6L590.6 216.3L578.0 221.4L578.0 227.3L592.4 236.9L614.8 252.6L614.8 254.2L622.2 257.8L622.6 260.9L626.1 260.3L631.9 259.0L654.8 242.9L647.5 238.9L645.3 231.9L647.1 230.7L645.6 215.0L644.0 206.8L641.2 205.0L638.2 199.2L641.2 193.8L642.3 185.1M578.0 225.8L561.2 225.8M578.0 227.3L578.0 232.7L565.7 232.7L565.7 243.0L561.9 245.0L561.9 251.7L547.1 251.7M592.4 236.9L586.1 236.9L589.8 274.6L575.7 274.6L569.8 276.1L567.5 274.2L564.9 277.3L561.9 274.6L557.1 270.3L548.9 272.3M645.6 215.0L648.6 208.5L653.1 204.5L653.5 201.9M703.3 208.9L703.3 249.0L703.3 257.0L699.6 257.0L699.6 259.0L669.8 243.2L666.1 245.0L663.1 246.6L654.8 242.9M703.3 249.0L747.6 249.0M666.1 245.0L668.3 257.0L668.0 269.2L660.9 281.5L663.1 286.5L666.1 295.6L662.4 295.6L668.0 305.0M699.6 259.0L699.6 273.8L695.5 274.2L693.6 280.3L692.9 285.3L695.9 292.2L699.6 300.5M753.9 264.9L747.9 268.8L746.1 279.2L744.6 285.3L740.1 292.2L737.9 293.3L737.2 297.4L736.4 301.6L733.1 303.8M699.6 300.5L702.6 296.3L708.9 297.4L714.5 298.2L718.2 296.7L721.9 294.4L725.6 296.3L730.8 289.1L733.8 287.2L733.4 292.9L736.4 297.4L737.2 297.4M746.1 279.2L751.3 276.9L755.4 278.0L759.8 278.8L768.0 286.1L770.6 285.3M768.0 286.1L765.8 291.8L769.5 292.2L774.0 299.3L785.1 303.1L788.9 303.1L777.7 314.3M769.5 292.2L771.4 289.9M668.0 305.0L679.5 303.1L681.0 299.3L688.4 296.3L695.5 292.2M564.9 277.3L567.9 286.5L559.3 285.7L554.5 291.8M547.8 281.9L554.5 281.1L559.0 282.6L554.5 283.4L547.8 283.8M548.2 286.6L559.3 285.7M567.9 286.5L575.7 286.8L580.5 294.8L579.4 304.6L582.4 312.5M560.8 299.3L569.4 295.6L572.0 301.2L575.3 305.3L579.4 304.6M572.0 301.2L567.5 307.2M580.5 294.8L589.8 294.0L591.0 288.4L595.4 282.6L602.9 279.6L607.7 276.1L611.0 276.5L623.3 275.0L626.1 269.2L626.1 260.3M611.0 276.5L614.0 282.6L619.2 287.2L623.7 289.1L625.6 282.3L636.3 284.2L643.8 284.9L654.9 283.4L660.9 281.5M623.7 289.1L620.3 299.3L620.3 309.1M663.1 286.5L659.4 295.6L653.1 308.3L642.3 315.1M599.9 314.0L600.3 297.4L599.9 291.8L610.3 291.4L612.5 303.1L614.8 310.2M589.8 294.0L600.3 296.7M613.6 291.8L616.3 309.8M610.3 291.4L613.6 291.8L619.2 287.2M577.6 161.0L579.8 160.0L585.7 160.7L587.2 162.5L584.6 165.5L584.3 169.4L582.4 172.0L584.3 175.2L583.1 178.0L584.3 179.0L582.8 183.7M603.6 153.4L612.9 156.5L616.6 158.0L622.2 158.5M619.6 111.1L625.9 117.5L631.9 120.4L634.1 120.4L640.8 123.3L638.6 131.1L632.6 138.7L636.3 140.3L635.2 144.6L638.9 149.3L638.2 151.3M622.9 109.3L628.9 109.3L632.6 111.1L631.5 112.9L633.0 113.5L632.6 106.9L636.3 104.5L637.1 98.4M633.0 113.5L634.1 120.4M642.3 87.6L646.8 88.2M663.1 94.0L664.6 102.7L665.4 111.7L666.1 112.3L655.3 115.8L661.6 124.4L658.7 131.6L649.4 131.6L646.0 131.6L638.6 131.1M636.3 140.3L641.9 138.7L644.9 137.6L649.0 136.6L656.4 136.0L661.3 137.1L670.2 134.9L673.2 128.9L673.2 125.5L666.1 123.3L661.6 124.4M646.0 131.6L649.0 136.6M666.1 112.3L671.7 116.4L680.2 120.4L694.0 122.7L699.6 114.0L698.1 105.7L699.2 93.3L695.1 90.8L684.0 90.8M673.2 125.5L680.2 120.4M673.2 128.9L680.2 130.0L686.6 126.1L692.5 126.6L695.5 128.9L688.4 138.7L685.8 139.3L680.2 140.3L671.7 137.1L670.2 134.9M695.5 128.9L702.9 130.5L709.3 127.2L715.2 142.5L720.4 143.5M709.3 127.2L714.5 127.2L721.9 137.1L715.2 142.5M685.8 139.3L689.9 146.1L694.7 149.3L695.9 151.3L705.2 152.1L710.7 149.8L716.7 151.9M694.7 149.3L693.6 159.0L695.9 164.0L701.4 163.0L708.1 162.0L709.3 160.5L714.5 160.5M684.7 171.8L688.4 165.9L695.9 164.0M708.1 162.0L707.0 166.4M682.5 161.0L686.6 159.0L686.9 165.5L688.4 165.9M682.5 161.0L679.1 158.0L681.7 152.9L682.5 145.6L680.2 140.3M679.1 158.0L675.8 155.4L669.8 149.8L669.1 144.0L673.5 144.0L682.5 145.6M660.9 142.5L667.2 142.5L671.7 137.1M686.6 159.0L693.6 159.0M653.1 59.6L656.8 48.5L655.7 40.8L655.7 28.8L662.4 17.9L664.2 2.0L669.8 -6.4M700.3 4.7L698.5 -1.7L697.7 -11.2M713.7 48.5L721.9 36.9L727.5 29.7L721.9 20.5L720.8 11.9L720.0 -1.7L718.2 -11.2M714.5 55.9L712.2 66.7L712.6 70.2L715.2 79.0L725.2 83.0L725.6 93.3L731.9 97.1L728.6 105.1L736.8 103.9L742.4 115.2L751.7 118.1L759.5 119.8L758.4 130.0L752.4 133.8M700.7 67.4L707.0 68.1L712.6 70.2M688.4 79.7L699.6 78.4L709.3 82.4L715.2 79.0M709.3 82.4L705.9 91.4L697.7 93.7M689.2 85.0L695.1 86.9L695.1 90.8M698.1 108.1L705.2 106.3L718.2 108.7L728.6 105.1M764.7 163.0L772.1 165.0L777.0 171.8L775.5 178.5L777.0 183.7L768.0 184.1L759.1 185.5L751.7 185.5L746.8 186.0L745.0 189.7M759.1 153.4L768.4 154.4L775.8 157.0L782.9 161.0L791.1 161.5M772.1 165.0L777.7 164.0L783.3 165.0L782.9 161.0M777.7 164.0L779.6 167.4L783.3 172.8L783.3 175.6M777.0 171.8L783.3 175.6L788.9 171.8L792.2 178.0M777.0 183.7L781.4 190.6L779.6 196.1L781.8 202.3L788.1 208.1L790.7 215.9M768.0 184.1L763.6 194.7L754.6 201.0L756.1 206.8L760.6 207.6L776.6 219.3L783.3 219.7L790.3 222.3M783.3 219.7L786.6 215.4L788.9 215.9M754.6 201.0L747.2 205.9L743.5 204.1M756.1 206.8L747.9 209.4L751.7 213.7L749.8 215.9L744.6 219.3L740.5 218.4M737.9 210.2L740.1 218.0M742.7 201.4L742.7 204.1L742.4 209.4L740.5 218.0M740.9 202.3L742.7 201.4L746.5 197.4L744.2 195.4M769.5 271.1L771.0 267.2L775.8 267.2L782.9 268.0L785.1 269.2L789.6 264.1L803.7 260.9L814.9 257.0L817.5 249.0L815.6 246.2L806.0 245.4L802.3 240.5M803.7 260.9L807.8 270.1M815.6 246.2L817.9 240.1L819.0 238.1L820.1 237.3M799.3 237.9L801.1 238.5M793.3 138.2L785.1 127.8L783.7 120.4L791.8 117.5L799.3 107.5L805.6 108.7L813.0 111.7L822.3 111.7L829.8 114.0L837.2 113.5L839.1 109.9L833.5 103.9L837.2 99.6L838.0 93.3L852.1 90.8L867.0 85.0L874.4 92.1L883.7 95.9L894.9 92.1L900.1 97.7L907.9 112.9L919.1 111.7L927.6 117.5L935.1 122.1M805.6 161.5L811.2 159.0L816.8 164.0L818.6 164.0L818.6 145.1L828.3 141.9L837.2 148.2L840.9 152.9L851.7 151.9L855.8 160.5L857.7 165.5L863.3 165.5L867.0 163.5L871.4 160.5L874.4 159.0L883.7 158.0L885.6 154.4L892.3 155.4L904.2 156.5L908.6 159.5L908.6 145.1L917.2 144.0L919.1 133.3L928.4 133.8L930.2 126.1L935.1 122.1M818.6 164.0L822.3 164.0L828.3 157.0L833.5 159.5L833.9 163.5L840.9 170.3L849.9 175.6L857.7 182.7L862.5 183.7L864.7 179.0L862.1 172.3L868.1 166.4L872.6 165.9L877.0 163.0L871.4 160.5M868.1 166.4L872.9 172.3L884.1 173.2M862.5 183.7L868.8 181.8L871.4 180.4L876.7 186.0L883.7 182.7L888.9 183.7M877.0 163.0L881.9 166.4L877.4 169.4L872.9 172.3M936.9 122.1L948.8 139.8L948.4 144.0L965.2 148.8L968.9 157.0L986.0 157.5L1000.9 162.5L1019.5 157.0L1026.6 151.9L1026.6 145.1L1040.0 143.0L1044.4 138.2L1055.6 136.0L1047.0 130.5L1040.0 129.4L1044.4 118.7M935.1 122.1L936.9 122.1L952.5 112.9L973.0 118.7L976.0 105.7L989.7 109.9L990.9 114.0L1004.6 115.8L1013.9 121.6L1023.2 121.6L1036.2 116.4L1044.4 118.7L1054.8 117.5L1057.1 107.5L1059.3 97.7L1069.7 96.5L1079.0 102.7L1084.6 117.5L1096.5 123.8L1097.6 130.5L1111.4 127.2L1108.8 134.4L1105.1 145.1L1098.4 145.6L1097.6 155.4L1096.1 158.5M1072.7 170.8L1082.4 161.5L1086.5 160.5L1093.5 155.4L1096.1 158.5M1079.4 180.9L1087.9 177.1M908.6 159.5L896.4 165.5L884.8 171.3L883.7 173.2L888.9 183.7L893.0 189.2L900.5 191.5L904.2 197.0L903.1 205.0L903.4 210.2L911.6 215.0L915.3 214.6L922.8 219.3L930.2 224.4L938.0 224.8L941.0 227.3L944.4 223.5L951.4 225.2L960.0 219.3L967.4 218.4L972.3 223.1L977.5 226.1L977.5 233.6L973.4 240.9L978.2 244.2L980.4 248.6L982.7 251.0L986.8 252.2L989.0 247.4L990.1 247.4L996.8 246.6L1002.0 243.8L1007.2 245.4L1007.2 249.0L1012.1 250.8M864.0 242.2L874.4 239.3L872.6 232.7L868.8 228.6L877.8 224.4L883.3 215.9L887.8 211.1L887.4 203.7L890.8 203.2L885.6 195.2L896.7 191.5L900.5 191.5M888.9 183.7L876.3 186.9L875.2 194.3L870.7 201.9L868.1 207.6L857.3 212.0L856.6 216.7L842.8 218.4L836.8 216.3L840.2 221.8L843.9 223.5L845.4 227.7L845.4 229.8L839.5 236.0M836.8 216.3L840.2 209.8L835.7 202.8L838.0 191.1L837.6 186.5L830.9 182.3L823.1 178.5L816.8 179.9L811.2 183.2M838.0 191.1L850.2 187.9L857.7 182.7M911.6 215.0L908.3 221.0L913.5 224.4L920.2 227.3L926.5 230.2L938.0 231.1L938.0 224.8M941.0 227.3L941.4 229.8L952.9 229.0L951.4 225.2M938.0 231.1L941.8 232.3L938.4 237.3L940.6 239.7L940.6 244.2L941.8 249.8M941.8 232.3L944.4 232.7L944.4 235.6L954.0 236.9L953.3 239.7L949.6 240.9L949.6 243.0L951.1 245.0L953.7 242.2L954.8 249.4L953.7 254.2M972.3 223.1L968.2 227.3L964.4 230.2L962.2 236.0L960.4 241.3L957.4 240.9L957.7 248.2L954.8 249.4M986.8 252.2L982.7 255.8L974.9 257.8L973.7 262.9L977.1 270.7L975.6 275.7L979.3 286.1L980.8 289.5L977.5 294.4M982.7 255.8L984.2 259.0L986.8 259.0L986.0 266.4L989.7 265.3L997.2 263.7L1000.2 267.2L1000.2 272.6L1003.1 274.6L1001.6 279.2L993.5 279.6L991.2 281.9L993.1 289.1M1010.6 277.7L1010.2 286.8L1004.6 289.1L1004.6 291.8L999.0 294.0M990.1 247.4L993.5 253.8L1000.5 256.6L996.8 259.8L1001.6 263.3L1008.3 271.5L1010.6 277.7L1001.6 279.2M982.7 308.7L986.4 311.3L989.7 309.8" fill="none" stroke="#b9b6bd" stroke-width="0.85" stroke-linejoin="round"/>
</g></defs>
<use href="#world"/><use href="#world" x="1339.2"/>
<text x="71.2" y="58.0" textLength="33.5" lengthAdjust="spacing" font-size="8.6" class="ol">Gulf of</text>
<text x="71.5" y="68.0" textLength="32.0" lengthAdjust="spacing" font-size="8.6" class="ol">Alaska</text>
<text x="461.6" y="163.8" textLength="28.2" lengthAdjust="spacing" font-size="8.6" class="ol">North</text>
<text x="461.5" y="173.8" textLength="40.0" lengthAdjust="spacing" font-size="8.6" class="ol">Atlantic</text>
<text x="461.6" y="183.8" textLength="30.8" lengthAdjust="spacing" font-size="8.6" class="ol">Ocean</text>
<text x="331.6" y="275.0" textLength="50.8" lengthAdjust="spacing" font-size="8.6" class="ol">Caribbean</text>
<text x="332.0" y="284.2" textLength="17.0" lengthAdjust="spacing" font-size="8.6" class="ol">Sea</text>
<text x="1167.0" y="85.5" textLength="32.0" lengthAdjust="spacing" font-size="8.6" class="ol">Sea of</text>
<text x="1167.2" y="95.0" textLength="40.0" lengthAdjust="spacing" font-size="8.6" class="ol">Okhotsk</text>
<text x="1111.4" y="255.5" textLength="50.8" lengthAdjust="spacing" font-size="8.6" class="ol">Philippine</text>
<text x="1111.2" y="265.5" textLength="17.0" lengthAdjust="spacing" font-size="8.6" class="ol">Sea</text>
<text x="1315.8" y="210.0" textLength="28.5" lengthAdjust="spacing" font-size="8.6" class="ol">North</text>
<text x="1317.2" y="220.0" textLength="37.5" lengthAdjust="spacing" font-size="8.6" class="ol">Pacific</text>
<text x="1316.8" y="229.5" textLength="31.5" lengthAdjust="spacing" font-size="8.6" class="ol">Ocean</text>
<circle cx="1042.2" cy="170.7" r="4.7" fill="#62b69d"/>
<text x="208.6" y="48.2" textLength="38.8" lengthAdjust="spacingAndGlyphs" font-size="9.7" class="cl">CANADA</text>
<text x="236.6" y="170.0" textLength="34.2" lengthAdjust="spacingAndGlyphs" font-size="10.0" class="cl">UNITED</text>
<text x="236.2" y="181.2" textLength="31.5" lengthAdjust="spacingAndGlyphs" font-size="9.0" class="cl">STATES</text>
<text x="238.1" y="250.5" textLength="36.2" lengthAdjust="spacingAndGlyphs" font-size="10.0" class="cl">MEXICO</text>
<text x="309.8" y="248.2" textLength="22.0" lengthAdjust="spacingAndGlyphs" font-size="8.3" class="cl">CUBA</text>
<text x="275.6" y="276.8" textLength="48.8" lengthAdjust="spacingAndGlyphs" font-size="8.4" class="cl">GUATEMALA</text>
<text x="308.4" y="303.8" textLength="35.8" lengthAdjust="spacingAndGlyphs" font-size="9.0" class="cl">PANAMA</text>
<text x="542.2" y="15.5" textLength="34.5" lengthAdjust="spacingAndGlyphs" font-size="8.5" class="cl">ICELAND</text>
<text x="643.9" y="51.8" textLength="36.2" lengthAdjust="spacingAndGlyphs" font-size="9.0" class="cl">NORWAY</text>
<text x="597.4" y="87.0" textLength="34.2" lengthAdjust="spacingAndGlyphs" font-size="10.0" class="cl">UNITED</text>
<text x="597.5" y="98.2" textLength="45.0" lengthAdjust="spacingAndGlyphs" font-size="10.1" class="cl">KINGDOM</text>
<text x="648.2" y="85.8" textLength="40.0" lengthAdjust="spacingAndGlyphs" font-size="8.5" class="cl">DENMARK</text>
<text x="626.9" y="117.0" textLength="41.2" lengthAdjust="spacingAndGlyphs" font-size="9.8" class="cl">BELGIUM</text>
<text x="616.8" y="140.5" textLength="34.5" lengthAdjust="spacingAndGlyphs" font-size="9.0" class="cl">FRANCE</text>
<text x="658.9" y="137.0" textLength="33.7" lengthAdjust="spacingAndGlyphs" font-size="8.3" class="cl">AUSTRIA</text>
<text x="706.1" y="30.0" textLength="35.8" lengthAdjust="spacingAndGlyphs" font-size="8.9" class="cl">FINLAND</text>
<text x="712.8" y="100.0" textLength="35.0" lengthAdjust="spacingAndGlyphs" font-size="7.9" class="cl">BELARUS</text>
<text x="726.2" y="123.8" textLength="35.5" lengthAdjust="spacingAndGlyphs" font-size="8.5" class="cl">UKRAINE</text>
<text x="701.5" y="143.0" textLength="39.0" lengthAdjust="spacingAndGlyphs" font-size="8.9" class="cl">ROMANIA</text>
<text x="851.9" y="136.2" textLength="51.8" lengthAdjust="spacingAndGlyphs" font-size="8.2" class="cl">KAZAKHSTAN</text>
<text x="972.8" y="18.2" textLength="32.5" lengthAdjust="spacingAndGlyphs" font-size="9.4" class="cl">RUSSIA</text>
<text x="995.6" y="138.8" textLength="45.8" lengthAdjust="spacingAndGlyphs" font-size="9.1" class="cl">MONGOLIA</text>
<text x="591.5" y="177.5" textLength="27.5" lengthAdjust="spacingAndGlyphs" font-size="10.1" class="cl">SPAIN</text>
<text x="656.6" y="161.2" textLength="25.8" lengthAdjust="spacingAndGlyphs" font-size="10.3" class="cl">ITALY</text>
<text x="644.5" y="202.5" textLength="32.5" lengthAdjust="spacingAndGlyphs" font-size="8.9" class="cl">TUNISIA</text>
<text x="582.1" y="214.2" textLength="41.2" lengthAdjust="spacingAndGlyphs" font-size="8.4" class="cl">MOROCCO</text>
<text x="620.8" y="228.0" textLength="33.5" lengthAdjust="spacingAndGlyphs" font-size="8.1" class="cl">ALGERIA</text>
<text x="575.5" y="259.5" textLength="52.0" lengthAdjust="spacingAndGlyphs" font-size="9.1" class="cl">MAURITANIA</text>
<text x="601.2" y="274.5" textLength="20.0" lengthAdjust="spacingAndGlyphs" font-size="8.9" class="cl">MALI</text>
<text x="644.2" y="269.5" textLength="24.5" lengthAdjust="spacingAndGlyphs" font-size="8.4" class="cl">NIGER</text>
<text x="555.8" y="282.0" textLength="35.0" lengthAdjust="spacingAndGlyphs" font-size="7.9" class="cl">SENEGAL</text>
<text x="569.9" y="296.2" textLength="30.8" lengthAdjust="spacingAndGlyphs" font-size="8.6" class="cl">GUINEA</text>
<text x="639.2" y="300.8" textLength="38.0" lengthAdjust="spacingAndGlyphs" font-size="9.9" class="cl">NIGERIA</text>
<text x="677.2" y="233.0" textLength="22.5" lengthAdjust="spacingAndGlyphs" font-size="8.4" class="cl">LIBYA</text>
<text x="704.6" y="160.8" textLength="40.2" lengthAdjust="spacingAndGlyphs" font-size="8.3" class="cl">BULGARIA</text>
<text x="691.4" y="178.8" textLength="28.8" lengthAdjust="spacingAndGlyphs" font-size="7.4" class="cl">GREECE</text>
<text x="739.6" y="179.2" textLength="33.8" lengthAdjust="spacingAndGlyphs" font-size="8.9" class="cl">TURKEY</text>
<text x="755.0" y="198.8" textLength="22.0" lengthAdjust="spacingAndGlyphs" font-size="7.8" class="cl">SYRIA</text>
<text x="739.0" y="212.5" textLength="26.0" lengthAdjust="spacingAndGlyphs" font-size="7.7" class="cl">ISRAEL</text>
<text x="718.8" y="235.5" textLength="28.0" lengthAdjust="spacingAndGlyphs" font-size="9.0" class="cl">EGYPT</text>
<text x="766.9" y="232.5" textLength="28.2" lengthAdjust="spacingAndGlyphs" font-size="9.9" class="cl">SAUDI</text>
<text x="767.1" y="243.2" textLength="33.8" lengthAdjust="spacingAndGlyphs" font-size="9.5" class="cl">ARABIA</text>
<text x="812.2" y="208.0" textLength="22.5" lengthAdjust="spacingAndGlyphs" font-size="10.0" class="cl">IRAN</text>
<text x="887.2" y="165.8" textLength="50.0" lengthAdjust="spacingAndGlyphs" font-size="8.0" class="cl">KYRGYZSTAN</text>
<text x="872.8" y="180.0" textLength="43.5" lengthAdjust="spacingAndGlyphs" font-size="8.3" class="cl">TAJIKISTAN</text>
<text x="874.2" y="218.2" textLength="44.5" lengthAdjust="spacingAndGlyphs" font-size="9.8" class="cl">PAKISTAN</text>
<text x="922.0" y="226.8" textLength="25.0" lengthAdjust="spacingAndGlyphs" font-size="8.2" class="cl">NEPAL</text>
<text x="901.8" y="251.2" textLength="27.0" lengthAdjust="spacingAndGlyphs" font-size="10.8" class="cl">INDIA</text>
<text x="821.2" y="255.8" textLength="25.5" lengthAdjust="spacingAndGlyphs" font-size="9.1" class="cl">OMAN</text>
<text x="787.5" y="274.2" textLength="27.0" lengthAdjust="spacingAndGlyphs" font-size="8.3" class="cl">YEMEN</text>
<text x="680.5" y="276.8" textLength="22.0" lengthAdjust="spacingAndGlyphs" font-size="8.3" class="cl">CHAD</text>
<text x="719.2" y="280.8" textLength="28.0" lengthAdjust="spacingAndGlyphs" font-size="8.6" class="cl">SUDAN</text>
<text x="753.4" y="298.0" textLength="43.8" lengthAdjust="spacingAndGlyphs" font-size="10.1" class="cl">ETHIOPIA</text>
<text x="909.4" y="307.5" textLength="40.8" lengthAdjust="spacingAndGlyphs" font-size="8.2" class="cl">SRI LANKA</text>
<text x="966.5" y="270.8" textLength="41.5" lengthAdjust="spacingAndGlyphs" font-size="8.8" class="cl">MYANMAR</text>
<text x="1000.0" y="197.5" textLength="29.5" lengthAdjust="spacingAndGlyphs" font-size="10.2" class="cl">CHINA</text>
<text x="1012.5" y="286.2" textLength="42.0" lengthAdjust="spacingAndGlyphs" font-size="10.2" class="cl">VIETNAM</text>
<text x="1083.9" y="184.2" textLength="31.8" lengthAdjust="spacingAndGlyphs" font-size="9.9" class="cl">SOUTH</text>
<text x="1084.1" y="195.8" textLength="30.2" lengthAdjust="spacingAndGlyphs" font-size="9.1" class="cl">KOREA</text>
<text x="1059.4" y="244.5" textLength="31.8" lengthAdjust="spacingAndGlyphs" font-size="8.9" class="cl">TAIWAN</text>
</svg>
</div>
<div class="abs" style="left:13px;top:391px;width:1331px;height:330px;border:1px dashed #7f8aa3;border-radius:4px;pointer-events:none"></div>
<!-- map controls -->
<div class="mbtn" style="left:22.800px;top:419px;height:47.500px"></div>
<div class="mbtn" style="left:22.800px;top:473px;height:24px"></div>
<div class="mbtn" style="left:22.800px;top:503px;height:24px"></div>
<div class="mbtn" style="left:22.800px;top:533px;height:24px"></div>
<svg class="ico" style="left:29px;top:424.500px" width="11.500" height="11.500" viewBox="0 0 16 16"><circle cx="8" cy="8" r="8" fill="#25282f"/><path d="M8 3.600v8.800M3.600 8h8.800" stroke="#fff" stroke-width="1.350"/></svg>
<svg class="ico" style="left:29px;top:448.500px" width="11.500" height="11.500" viewBox="0 0 16 16"><circle cx="8" cy="8" r="8" fill="#25282f"/><path d="M3.600 8h8.800" stroke="#fff" stroke-width="1.350"/></svg>
<svg class="ico" style="left:29.500px;top:479.500px" width="11" height="11" viewBox="0 0 16 16" fill="none" stroke="#343741" stroke-width="1"><circle cx="8" cy="8" r="6.300"/><circle cx="8" cy="8" r="1.100" fill="#343741" stroke="none"/><path d="M8 .500v2.600M8 12.900v2.600M.500 8h2.600M12.900 8h2.600"/></svg>
<svg class="ico" style="left:29.500px;top:509.500px" width="11" height="11" viewBox="0 0 16 16" fill="none" stroke="#343741" stroke-width="1.200" stroke-linecap="round" stroke-linejoin="round"><path d="M1.500 14.500l13-13M10 1.500h4.500V6M6 14.500H1.500V10"/></svg>
<svg class="ico" style="left:28.3px;top:537.8px" width="13.6" height="13.6" viewBox="0 0 15 15" fill="none" stroke="#343741" stroke-width="1.05" stroke-linejoin="round"><path d="M8.58 4.54L8.16 3.16L7.25 2.04L5.97 1.36L4.54 1.22L3.32 1.55L6.21 4.44L4.44 6.21L1.55 3.32L1.24 4.36L1.22 5.26L1.64 6.64L2.16 7.38L2.70 7.87L3.48 8.32L4.36 8.56L5.26 8.58L6.13 8.39L10.68 12.94L11.54 13.29L12.31 13.18L12.83 12.83L13.18 12.31L13.30 11.70L13.18 11.09L12.83 10.57L8.39 6.13L8.58 5.26Z"/><circle cx="11.6" cy="11.6" r=".45" fill="#343741" stroke-width=".5"/></svg>
<div class="abs" style="left:1310px;top:419px;width:24px;height:24px;background:#fff;border-radius:3px"></div>
<svg class="ico" style="left:1316.5px;top:425.5px" width="12" height="10" viewBox="0 0 12 10" fill="none" stroke="#343741" stroke-width="1"><path d="M5 1.6h5.700M1.200 4.900h9.500M5 8.100h5.700M2.700 3.100L.9 4.900l1.800 1.800"/></svg>
<div class="abs mc" style="left:1169px"><b><i class="k">纬</i><i class="k">度</i>:</b></div>
<div class="abs mc" style="left:1195.5px">40.10632,</div>
<div class="abs mc" style="left:1233.7px"><b><i class="k">经</i><i class="k">度</i>:</b></div>
<div class="abs mc" style="left:1260.2px">52.02851,</div>
<div class="abs mc" style="left:1298.4px"><b><i class="k">缩</i><i class="k">放</i>:</b></div>
<div class="abs mc" style="left:1323.8px">1.8</div>
<div class="abs ma" style="left:1050px">Elastic Maps Service</div>
<div class="abs ma" style="left:1140.4px">, OpenMapTiles</div>
<div class="abs ma" style="left:1210.7px;font-size:8.55px">, OpenStreetMap contributors</div>
<svg width="0" height="0" style="position:absolute"><defs><g id="pop" fill="none" stroke="#4a4e5a" stroke-width="1.400"><path d="M12.500 9v4.500h-10v-10H7M9.500 2h4.500v4.500M14 2L7.500 8.500"/></g></defs></svg>
<svg class="ico" style="left:1131.6px;top:700px" width="7.6" height="7.6" viewBox="0 0 16 16"><use href="#pop"/></svg>
<svg class="ico" style="left:1201.8px;top:700px" width="7.6" height="7.6" viewBox="0 0 16 16"><use href="#pop"/></svg>
<svg class="ico" style="left:1325.7px;top:700px" width="7.6" height="7.6" viewBox="0 0 16 16"><use href="#pop"/></svg>
<div class="rz" style="left:1333.500px;top:710px;width:4.500px;height:4.500px"></div>

<!-- ================= table panel ================= -->
<div class="panel" style="left:13px;top:727px;width:1331px;height:360px">
  <div class="ptitle">nginx-project</div>
  <div class="gearbg" style="left:1311px"></div>
</div>
<svg class="ico" style="left:1327.1px;top:730.0px" width="14" height="14" viewBox="0 0 14 14"><use href="#gear"/></svg>
<div class="abs" style="left:1300.5px;top:746.5px;width:42.5px;overflow:hidden;font-size:11px;line-height:13px"><b>9</b> <i class="k">个</i><i class="k">文</i><i class="k">档</i></div>

<div class="th" style="left:41px">Time <svg style="display:inline-block;vertical-align:-1px" width="6" height="7.500" viewBox="0 0 6 7.500" fill="none" stroke="#006bb4" stroke-width="1"><path d="M3 .3v6.500M.500 4.300L3 6.800l2.500-2.500"/></svg></div>
<div class="th" style="left:198.500px">clientip</div>
<div class="th" style="left:343.500px">device</div>
<div class="th" style="left:496.500px">geoip.city_name</div>
<div class="th" style="left:676.500px">geoip.country_name</div>
<div class="th" style="left:884.500px">os</div>
<div class="th" style="left:969px">SendBytes</div>
<div class="th" style="left:1127px">status</div>
<div class="th" style="left:1238.500px">uri</div>
<div class="row" style="top:789.3px"></div>
<svg class="chev" style="top:798.7px" width="4.5" height="7" viewBox="0 0 4.5 7" fill="none" stroke="#343741" stroke-width="1"><path d="M.7.6l3 2.900-3 2.900"/></svg>
<div class="c" style="left:41.2px;top:798.7px">Jan 12, 2024 @ 18:18:18.000</div>
<div class="c" style="left:198.8px;top:798.7px">101.231.54.100</div>
<div class="c" style="left:343.6px;top:798.7px">iPad</div>
<div class="c" style="left:496.7px;top:798.7px">Shanghai</div>
<div class="c" style="left:676.7px;top:798.7px">China</div>
<div class="c" style="left:884.6px;top:798.7px">iOS</div>
<div class="c" style="left:969.1px;top:798.7px">0</div>
<div class="c" style="left:1126.8px;top:798.7px">304</div>
<div class="c" style="left:1238.4px;top:798.7px">/index.html</div>
<div class="row" style="top:819.0px"></div>
<svg class="chev" style="top:828.4px" width="4.5" height="7" viewBox="0 0 4.5 7" fill="none" stroke="#343741" stroke-width="1"><path d="M.7.6l3 2.900-3 2.900"/></svg>
<div class="c" style="left:41.2px;top:828.4px">Jan 12, 2024 @ 16:17:43.000</div>
<div class="c" style="left:198.8px;top:828.4px">110.110.110.110</div>
<div class="c" style="left:343.6px;top:828.4px">Other</div>
<div class="c" style="left:496.7px;top:828.4px"> -</div>
<div class="c" style="left:676.7px;top:828.4px">China</div>
<div class="c" style="left:884.6px;top:828.4px">Other</div>
<div class="c" style="left:969.1px;top:828.4px">615</div>
<div class="c" style="left:1126.8px;top:828.4px">200</div>
<div class="c" style="left:1238.4px;top:828.4px">/index.html</div>
<div class="row" style="top:848.4px"></div>
<svg class="chev" style="top:857.8px" width="4.5" height="7" viewBox="0 0 4.5 7" fill="none" stroke="#343741" stroke-width="1"><path d="M.7.6l3 2.900-3 2.900"/></svg>
<div class="c" style="left:41.2px;top:857.8px">Jan 12, 2024 @ 12:19:07.000</div>
<div class="c" style="left:198.8px;top:857.8px">21.118.208.84</div>
<div class="c" style="left:343.6px;top:857.8px">Samsung SM-G981B</div>
<div class="c" style="left:496.7px;top:857.8px"> -</div>
<div class="c" style="left:676.7px;top:857.8px">United States</div>
<div class="c" style="left:884.6px;top:857.8px">Android</div>
<div class="c" style="left:969.1px;top:857.8px">0</div>
<div class="c" style="left:1126.8px;top:857.8px">404</div>
<div class="c" style="left:1238.4px;top:857.8px">/index.html</div>
<div class="row" style="top:877.4px"></div>
<svg class="chev" style="top:886.8px" width="4.5" height="7" viewBox="0 0 4.5 7" fill="none" stroke="#343741" stroke-width="1"><path d="M.7.6l3 2.900-3 2.900"/></svg>
<div class="c" style="left:41.2px;top:886.8px">Jan 12, 2024 @ 12:19:07.000</div>
<div class="c" style="left:198.8px;top:886.8px">21.118.208.84</div>
<div class="c" style="left:343.6px;top:886.8px">Samsung SM-G981B</div>
<div class="c" style="left:496.7px;top:886.8px"> -</div>
<div class="c" style="left:676.7px;top:886.8px">United States</div>
<div class="c" style="left:884.6px;top:886.8px">Android</div>
<div class="c" style="left:969.1px;top:886.8px">0</div>
<div class="c" style="left:1126.8px;top:886.8px">404</div>
<div class="c" style="left:1238.4px;top:886.8px">/index.html</div>
<div class="row" style="top:906.5px"></div>
<svg class="chev" style="top:915.9px" width="4.5" height="7" viewBox="0 0 4.5 7" fill="none" stroke="#343741" stroke-width="1"><path d="M.7.6l3 2.900-3 2.900"/></svg>
<div class="c" style="left:41.2px;top:915.9px">Jan 12, 2024 @ 12:19:07.000</div>
<div class="c" style="left:198.8px;top:915.9px">21.118.208.84</div>
<div class="c" style="left:343.6px;top:915.9px">Samsung SM-G981B</div>
<div class="c" style="left:496.7px;top:915.9px"> -</div>
<div class="c" style="left:676.7px;top:915.9px">United States</div>
<div class="c" style="left:884.6px;top:915.9px">Android</div>
<div class="c" style="left:969.1px;top:915.9px">0</div>
<div class="c" style="left:1126.8px;top:915.9px">404</div>
<div class="c" style="left:1238.4px;top:915.9px">/index.html</div>
<div class="row" style="top:935.6px"></div>
<svg class="chev" style="top:945.0px" width="4.5" height="7" viewBox="0 0 4.5 7" fill="none" stroke="#343741" stroke-width="1"><path d="M.7.6l3 2.900-3 2.900"/></svg>
<div class="c" style="left:41.2px;top:945.0px">Jan 12, 2024 @ 10:18:52.000</div>
<div class="c" style="left:198.8px;top:945.0px">221.118.208.184</div>
<div class="c" style="left:343.6px;top:945.0px">iPhone</div>
<div class="c" style="left:496.7px;top:945.0px">Toyota</div>
<div class="c" style="left:676.7px;top:945.0px">Japan</div>
<div class="c" style="left:884.6px;top:945.0px">iOS</div>
<div class="c" style="left:969.1px;top:945.0px">0</div>
<div class="c" style="left:1126.8px;top:945.0px">304</div>
<div class="c" style="left:1238.4px;top:945.0px">/index.html</div>
<div class="row" style="top:964.6px"></div>
<svg class="chev" style="top:974.0px" width="4.5" height="7" viewBox="0 0 4.5 7" fill="none" stroke="#343741" stroke-width="1"><path d="M.7.6l3 2.900-3 2.900"/></svg>
<div class="c" style="left:41.2px;top:974.0px">Jan 12, 2024 @ 10:18:52.000</div>
<div class="c" style="left:198.8px;top:974.0px">221.118.208.184</div>
<div class="c" style="left:343.6px;top:974.0px">iPhone</div>
<div class="c" style="left:496.7px;top:974.0px">Toyota</div>
<div class="c" style="left:676.7px;top:974.0px">Japan</div>
<div class="c" style="left:884.6px;top:974.0px">iOS</div>
<div class="c" style="left:969.1px;top:974.0px">0</div>
<div class="c" style="left:1126.8px;top:974.0px">304</div>
<div class="c" style="left:1238.4px;top:974.0px">/index.html</div>
<div class="row" style="top:993.9px"></div>
<svg class="chev" style="top:1003.3px" width="4.5" height="7" viewBox="0 0 4.5 7" fill="none" stroke="#343741" stroke-width="1"><path d="M.7.6l3 2.900-3 2.900"/></svg>
<div class="c" style="left:41.2px;top:1003.3px">Jan 12, 2024 @ 10:18:52.000</div>
<div class="c" style="left:198.8px;top:1003.3px">221.118.208.184</div>
<div class="c" style="left:343.6px;top:1003.3px">iPhone</div>
<div class="c" style="left:496.7px;top:1003.3px">Toyota</div>
<div class="c" style="left:676.7px;top:1003.3px">Japan</div>
<div class="c" style="left:884.6px;top:1003.3px">iOS</div>
<div class="c" style="left:969.1px;top:1003.3px">0</div>
<div class="c" style="left:1126.8px;top:1003.3px">304</div>
<div class="c" style="left:1238.4px;top:1003.3px">/index.html</div>
<div class="row" style="top:1023.1px"></div>
<svg class="chev" style="top:1032.5px" width="4.5" height="7" viewBox="0 0 4.5 7" fill="none" stroke="#343741" stroke-width="1"><path d="M.7.6l3 2.900-3 2.900"/></svg>
<div class="c" style="left:41.2px;top:1032.5px">Jan 12, 2024 @ 08:18:32.000</div>
<div class="c" style="left:198.8px;top:1032.5px">219.141.136.10</div>
<div class="c" style="left:343.6px;top:1032.5px">iPhone</div>
<div class="c" style="left:496.7px;top:1032.5px">Beijing</div>
<div class="c" style="left:676.7px;top:1032.5px">China</div>
<div class="c" style="left:884.6px;top:1032.5px">iOS</div>
<div class="c" style="left:969.1px;top:1032.5px">0</div>
<div class="c" style="left:1126.8px;top:1032.5px">304</div>
<div class="c" style="left:1238.4px;top:1032.5px">/index.html</div>
<div id="sb"></div><div id="sbt"></div><div id="wr"></div><div id="wb"></div><div id="wbl"></div>
<div class="wc" style="left:7px;background:radial-gradient(circle at 100% 0,transparent 0,transparent 7.5px,#cfcfd3 7.8px,#cfcfd3 8.3px,#ededf0 8.6px)"></div>
<div class="wc" style="left:1354px;background:radial-gradient(circle at 0 0,transparent 0,transparent 7.5px,#cfcfd3 7.8px,#cfcfd3 8.3px,#f0f0f2 8.6px)"></div>
</body>
</html>
